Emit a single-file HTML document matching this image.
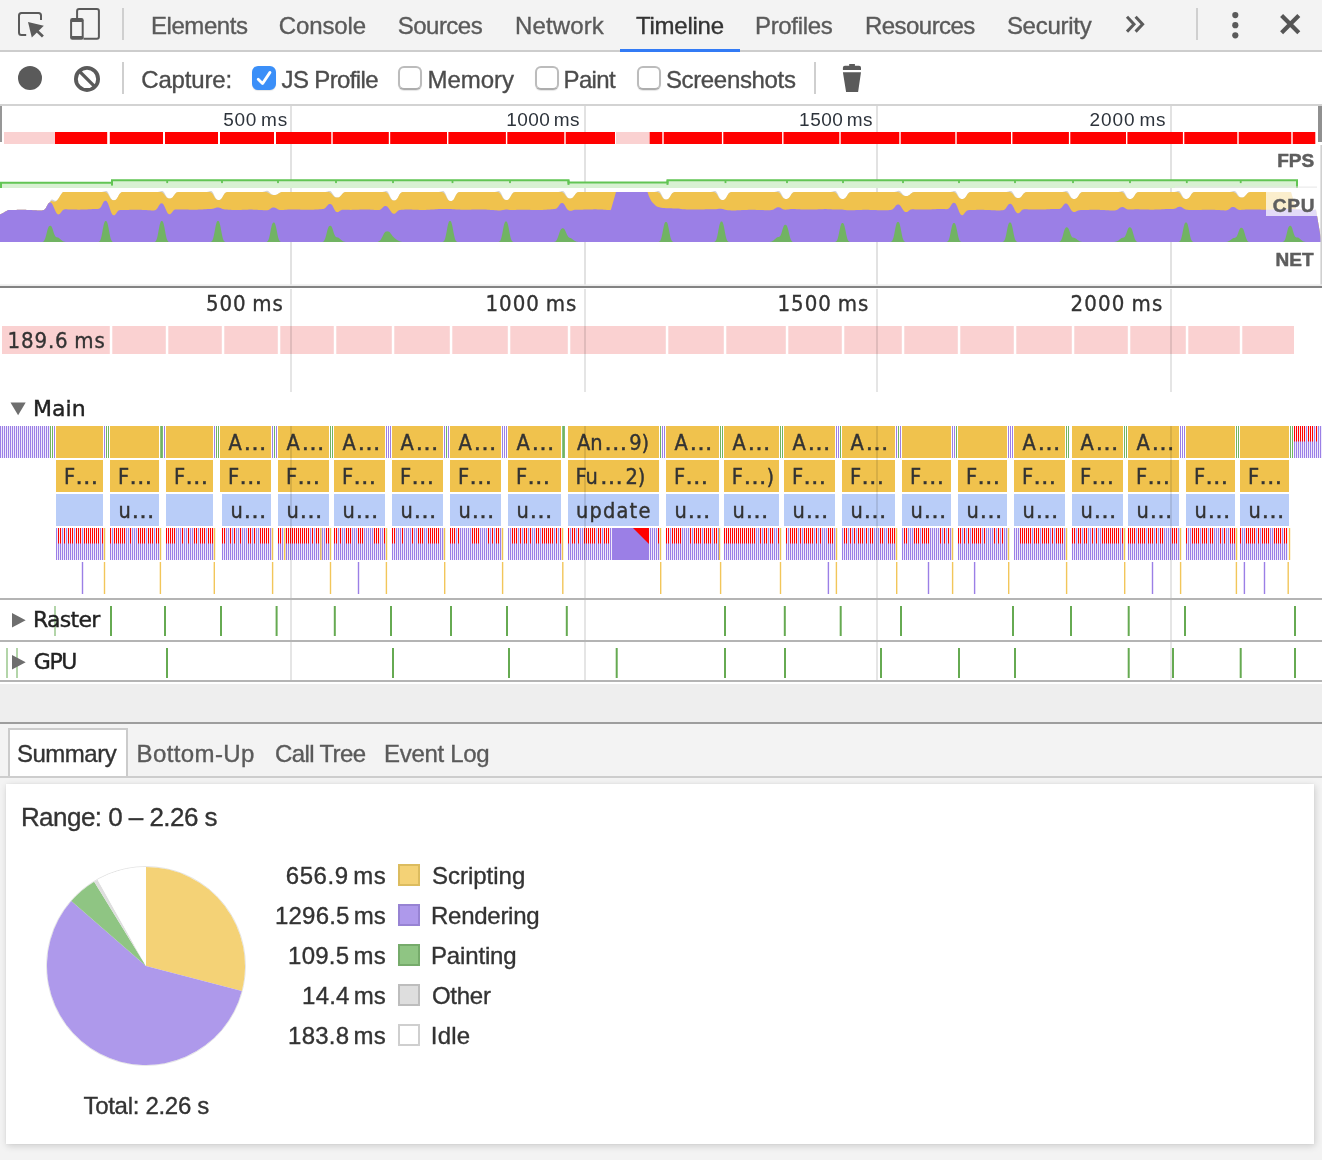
<!DOCTYPE html>
<html lang="en"><head><meta charset="utf-8"><title>Developer Tools - Timeline</title>
<style>
html,body{margin:0;padding:0}
body{width:1322px;height:1160px;overflow:hidden;background:#f3f3f3;position:relative;font-family:"Liberation Sans",sans-serif;color:#333}
.abs{position:absolute}
#tabbar{left:0;top:0;width:1322px;height:50px;background:#f3f3f3;border-bottom:2px solid #cdcdcd}
#toolbar{left:0;top:52px;width:1322px;height:52px;background:#fff;border-bottom:2px solid #d3d3d3}
#charts{left:0;top:106px;width:1322px;height:578px;background:#fff}
#filler{left:0;top:684px;width:1322px;height:38px;background:#eeeeee;border-bottom:2px solid #9d9d9d}
#dtabs{left:0;top:724px;width:1322px;height:52px;background:#f3f3f3;border-bottom:2px solid #cdcdcd}
#sumtab{left:8px;top:728px;width:116px;height:46px;background:#fff;border:2px solid #cbcbcb;border-bottom:none}
#card{left:6px;top:784px;width:1308px;height:360px;background:#fff;box-shadow:1px 2px 7px rgba(0,0,0,.16),0 0 2px rgba(0,0,0,.06)}
.cb{position:absolute;width:24px;height:24px;border:2px solid #bcbcbc;border-bottom-color:#adadad;border-radius:6px;background:#fff;box-sizing:border-box;box-shadow:0 1px 1px rgba(0,0,0,.10)}
.cb.on{background:#3b8ff8;border-color:#3b8ff8}
.vdiv{position:absolute;width:2px;background:#cfcfcf}
.sw{position:absolute;width:22px;height:22px;box-sizing:border-box;border:2px solid}
</style></head><body>
<div id="root" style="position:absolute;left:0;top:0;width:1322px;height:1160px;will-change:transform">

<div id="tabbar" class="abs"></div>
<div class="abs" style="left:620px;top:49px;width:120px;height:3px;background:#337bf5"></div>
<span style="position:absolute;left:151.00px;top:25.68px;line-height:0;white-space:nowrap;font-family:'Liberation Sans', sans-serif;font-size:24px;font-weight:400;letter-spacing:-0.446px;word-spacing:0.00px;-webkit-text-stroke:0.35px #5a5a5a;color:#5a5a5a">Elements</span>
<span style="position:absolute;left:278.75px;top:25.68px;line-height:0;white-space:nowrap;font-family:'Liberation Sans', sans-serif;font-size:24px;font-weight:400;letter-spacing:-0.125px;word-spacing:0.00px;-webkit-text-stroke:0.35px #5a5a5a;color:#5a5a5a">Console</span>
<span style="position:absolute;left:397.68px;top:25.68px;line-height:0;white-space:nowrap;font-family:'Liberation Sans', sans-serif;font-size:24px;font-weight:400;letter-spacing:-0.500px;word-spacing:0.00px;-webkit-text-stroke:0.35px #5a5a5a;color:#5a5a5a">Sources</span>
<span style="position:absolute;left:515.00px;top:25.68px;line-height:0;white-space:nowrap;font-family:'Liberation Sans', sans-serif;font-size:24px;font-weight:400;letter-spacing:0.133px;word-spacing:0.00px;-webkit-text-stroke:0.35px #5a5a5a;color:#5a5a5a">Network</span>
<span style="position:absolute;left:636.00px;top:25.68px;line-height:0;white-space:nowrap;font-family:'Liberation Sans', sans-serif;font-size:24px;font-weight:400;letter-spacing:-0.250px;word-spacing:0.00px;-webkit-text-stroke:0.35px #333;color:#333">Timeline</span>
<span style="position:absolute;left:755.00px;top:25.68px;line-height:0;white-space:nowrap;font-family:'Liberation Sans', sans-serif;font-size:24px;font-weight:400;letter-spacing:-0.332px;word-spacing:0.00px;-webkit-text-stroke:0.35px #5a5a5a;color:#5a5a5a">Profiles</span>
<span style="position:absolute;left:865.00px;top:25.68px;line-height:0;white-space:nowrap;font-family:'Liberation Sans', sans-serif;font-size:24px;font-weight:400;letter-spacing:-0.547px;word-spacing:0.00px;-webkit-text-stroke:0.35px #5a5a5a;color:#5a5a5a">Resources</span>
<span style="position:absolute;left:1006.88px;top:25.68px;line-height:0;white-space:nowrap;font-family:'Liberation Sans', sans-serif;font-size:24px;font-weight:400;letter-spacing:-0.275px;word-spacing:0.00px;-webkit-text-stroke:0.35px #5a5a5a;color:#5a5a5a">Security</span>
<div class="vdiv" style="left:122px;top:8px;height:32px"></div>
<div class="vdiv" style="left:1196px;top:8px;height:32px"></div>
<svg class="abs" style="left:0;top:0" width="1322" height="52" viewBox="0 0 1322 52">
<path d="M26.2 35 H21.5 a2.5 2.5 0 0 1 -2.5 -2.5 V15.5 a2.5 2.5 0 0 1 2.5 -2.5 H38.5 a2.5 2.5 0 0 1 2.5 2.5 V19.9" fill="none" stroke="#5a5a5a" stroke-width="2"/>
<path d="M28 22 L43.8 25.8 L31.8 37.4 Z" fill="#5a5a5a"/>
<path d="M36.6 30.6 L42.9 36.6" stroke="#5a5a5a" stroke-width="2.8" fill="none"/>
<path d="M77.1 18.2 V11.1 a2 2 0 0 1 2 -2 H96.9 a2 2 0 0 1 2 2 V36.7 a2 2 0 0 1 -2 2 H83.5" fill="none" stroke="#5a5a5a" stroke-width="2"/>
<rect x="70.1" y="18.1" width="13.6" height="21.6" rx="2.2" fill="#5a5a5a"/>
<rect x="72.1" y="22" width="9.6" height="14" fill="#f3f3f3"/>
<g fill="none" stroke="#5a5a5a" stroke-width="3" stroke-linejoin="miter">
<path d="M1127 16.8 L1134 24.2 L1127 31.6"/><path d="M1135.6 16.8 L1142.6 24.2 L1135.6 31.6"/>
</g>
<g fill="#5a5a5a"><circle cx="1235.3" cy="15.1" r="3.1"/><circle cx="1235.3" cy="25.2" r="3.1"/><circle cx="1235.3" cy="35.3" r="3.1"/></g>
<path d="M1281.6 15.6 L1298.8 32.8 M1298.8 15.6 L1281.6 32.8" stroke="#555" stroke-width="4.2" fill="none"/>
</svg>
<div id="toolbar" class="abs"></div>
<svg class="abs" style="left:0;top:52px" width="1322" height="52" viewBox="0 52 1322 52">
<circle cx="30" cy="78" r="12" fill="#5a5a5a"/>
<circle cx="87" cy="78.9" r="11.1" fill="none" stroke="#5a5a5a" stroke-width="3.8"/>
<path d="M79 70.9 L95 86.9" stroke="#5a5a5a" stroke-width="3.4"/>
<path d="M842.9 72.2 H861 L858.1 92 H846.1 Z M842.9 69.9 V67.8 a2 2 0 0 1 2 -2 H859 a2 2 0 0 1 2 2 V69.9 Z M849.2 66 V64 H854.9 V66 Z" fill="#5a5a5a"/>
</svg>
<div class="vdiv" style="left:122px;top:62px;height:32px"></div>
<div class="vdiv" style="left:814px;top:62px;height:32px"></div>
<div class="cb on" style="left:252px;top:65.8px"></div>
<svg class="abs" style="left:252px;top:66px" width="24" height="24" viewBox="252 66 24 24"><path d="M258.2 79.3 L262.5 83.6 L270 72.4" fill="none" stroke="#fff" stroke-width="2.8" stroke-linecap="round" stroke-linejoin="round"/></svg>
<div class="cb" style="left:398px;top:65.8px"></div>
<div class="cb" style="left:534.5px;top:65.8px"></div>
<div class="cb" style="left:637px;top:65.8px"></div>
<span style="position:absolute;left:141.25px;top:80.08px;line-height:0;white-space:nowrap;font-family:'Liberation Sans', sans-serif;font-size:24px;font-weight:400;letter-spacing:-0.161px;word-spacing:0.00px;-webkit-text-stroke:0.35px #4c4c4c;color:#4c4c4c">Capture:</span>
<span style="position:absolute;left:281.62px;top:80.08px;line-height:0;white-space:nowrap;font-family:'Liberation Sans', sans-serif;font-size:24px;font-weight:400;letter-spacing:-0.639px;word-spacing:0.00px;-webkit-text-stroke:0.35px #4c4c4c;color:#4c4c4c">JS Profile</span>
<span style="position:absolute;left:427.50px;top:80.08px;line-height:0;white-space:nowrap;font-family:'Liberation Sans', sans-serif;font-size:24px;font-weight:400;letter-spacing:-0.025px;word-spacing:0.00px;-webkit-text-stroke:0.35px #4c4c4c;color:#4c4c4c">Memory</span>
<span style="position:absolute;left:563.50px;top:80.08px;line-height:0;white-space:nowrap;font-family:'Liberation Sans', sans-serif;font-size:24px;font-weight:400;letter-spacing:-0.625px;word-spacing:0.00px;-webkit-text-stroke:0.35px #4c4c4c;color:#4c4c4c">Paint</span>
<span style="position:absolute;left:665.88px;top:80.08px;line-height:0;white-space:nowrap;font-family:'Liberation Sans', sans-serif;font-size:24px;font-weight:400;letter-spacing:-0.338px;word-spacing:0.00px;-webkit-text-stroke:0.35px #4c4c4c;color:#4c4c4c">Screenshots</span>
<div id="charts" class="abs"></div>
<svg class="abs" style="left:0;top:104px" width="1322" height="580" viewBox="0 104 1322 580" shape-rendering="auto">
<defs>
<pattern id="ps" x="0" y="0" width="2" height="8" patternUnits="userSpaceOnUse"><rect x="0" y="0" width="1.05" height="8" fill="#9b7fe6"/><rect x="1.05" y="0" width="0.95" height="8" fill="#eee9fc"/></pattern>
<pattern id="rs" x="0" y="0" width="2" height="8" patternUnits="userSpaceOnUse"><rect x="0" y="0" width="1.05" height="8" fill="#ff0000"/><rect x="1.05" y="0" width="0.95" height="8" fill="#fdeaee"/></pattern>
</defs>
<rect x="290.00" y="106.00" width="2.00" height="180.00" fill="#e2e2e2"/>
<rect x="584.00" y="106.00" width="2.00" height="180.00" fill="#e2e2e2"/>
<rect x="876.00" y="106.00" width="2.00" height="180.00" fill="#e2e2e2"/>
<rect x="1170.00" y="106.00" width="2.00" height="180.00" fill="#e2e2e2"/>
<rect x="4.00" y="132.00" width="51.00" height="12.00" fill="#fad1d1"/>
<rect x="55.00" y="132.00" width="52.20" height="12.00" fill="#ff0000"/>
<rect x="109.80" y="132.00" width="53.20" height="12.00" fill="#ff0000"/>
<rect x="165.00" y="132.00" width="53.00" height="12.00" fill="#ff0000"/>
<rect x="220.00" y="132.00" width="54.00" height="12.00" fill="#ff0000"/>
<rect x="276.00" y="132.00" width="55.30" height="12.00" fill="#ff0000"/>
<rect x="332.70" y="132.00" width="56.10" height="12.00" fill="#ff0000"/>
<rect x="390.20" y="132.00" width="56.80" height="12.00" fill="#ff0000"/>
<rect x="448.40" y="132.00" width="57.50" height="12.00" fill="#ff0000"/>
<rect x="507.30" y="132.00" width="57.00" height="12.00" fill="#ff0000"/>
<rect x="565.70" y="132.00" width="96.60" height="12.00" fill="#ff0000"/>
<rect x="663.70" y="132.00" width="58.20" height="12.00" fill="#ff0000"/>
<rect x="723.30" y="132.00" width="58.80" height="12.00" fill="#ff0000"/>
<rect x="783.50" y="132.00" width="55.80" height="12.00" fill="#ff0000"/>
<rect x="840.70" y="132.00" width="58.60" height="12.00" fill="#ff0000"/>
<rect x="900.70" y="132.00" width="54.60" height="12.00" fill="#ff0000"/>
<rect x="956.70" y="132.00" width="54.30" height="12.00" fill="#ff0000"/>
<rect x="1012.40" y="132.00" width="56.50" height="12.00" fill="#ff0000"/>
<rect x="1070.30" y="132.00" width="55.70" height="12.00" fill="#ff0000"/>
<rect x="1127.40" y="132.00" width="55.50" height="12.00" fill="#ff0000"/>
<rect x="1184.30" y="132.00" width="53.00" height="12.00" fill="#ff0000"/>
<rect x="1238.70" y="132.00" width="52.60" height="12.00" fill="#ff0000"/>
<rect x="1292.70" y="132.00" width="22.60" height="12.00" fill="#ff0000"/>
<rect x="616.00" y="132.00" width="33.70" height="12.00" fill="#fad1d1"/>
<rect x="615.00" y="132.00" width="1.00" height="12.00" fill="#fff"/>
<text x="223.25" y="125.60" font-family="'Liberation Sans', sans-serif" font-size="19" font-weight="400" letter-spacing="0.743" word-spacing="-2.09" fill="#2d333b">500 ms</text>
<text x="506.23" y="125.60" font-family="'Liberation Sans', sans-serif" font-size="19" font-weight="400" letter-spacing="0.402" word-spacing="-2.09" fill="#2d333b">1000 ms</text>
<text x="799.12" y="125.60" font-family="'Liberation Sans', sans-serif" font-size="19" font-weight="400" letter-spacing="0.452" word-spacing="-2.09" fill="#2d333b">1500 ms</text>
<text x="1089.60" y="125.60" font-family="'Liberation Sans', sans-serif" font-size="19" font-weight="400" letter-spacing="0.873" word-spacing="-2.09" fill="#2d333b">2000 ms</text>
<path d="M1 188 L1 182.8 L112 182.8 L112 180.3 L568.5 180.3 L568.5 182.4 L667.5 182.4 L667.5 180.3 L1297 180.3 L1297 188 Z" fill="#d8f1d2" stroke="none"/>
<path d="M1 188 L1 182.8 L112 182.8 L112 180.3 L568.5 180.3 L568.5 182.4 L667.5 182.4 L667.5 180.3 L1297 180.3 L1297 188" fill="none" stroke="#62c554" stroke-width="2" stroke-linejoin="miter"/>
<rect x="166.30" y="180.30" width="1.80" height="2.80" fill="#62c554"/>
<rect x="221.10" y="180.30" width="1.80" height="2.80" fill="#62c554"/>
<rect x="277.10" y="180.30" width="1.80" height="2.80" fill="#62c554"/>
<rect x="335.10" y="180.30" width="1.80" height="2.80" fill="#62c554"/>
<rect x="392.10" y="180.30" width="1.80" height="2.80" fill="#62c554"/>
<rect x="451.60" y="180.30" width="1.80" height="2.80" fill="#62c554"/>
<rect x="509.10" y="180.30" width="1.80" height="2.80" fill="#62c554"/>
<rect x="724.60" y="180.30" width="1.80" height="2.80" fill="#62c554"/>
<rect x="786.10" y="180.30" width="1.80" height="2.80" fill="#62c554"/>
<rect x="842.10" y="180.30" width="1.80" height="2.80" fill="#62c554"/>
<rect x="902.10" y="180.30" width="1.80" height="2.80" fill="#62c554"/>
<rect x="958.10" y="180.30" width="1.80" height="2.80" fill="#62c554"/>
<rect x="1014.10" y="180.30" width="1.80" height="2.80" fill="#62c554"/>
<rect x="1072.10" y="180.30" width="1.80" height="2.80" fill="#62c554"/>
<rect x="1129.10" y="180.30" width="1.80" height="2.80" fill="#62c554"/>
<rect x="1185.90" y="180.30" width="1.80" height="2.80" fill="#62c554"/>
<rect x="1239.80" y="180.30" width="1.80" height="2.80" fill="#62c554"/>
<rect x="111.00" y="180.30" width="2.00" height="5.30" fill="#62c554"/>
<rect x="567.50" y="180.30" width="2.00" height="4.60" fill="#62c554"/>
<rect x="666.50" y="180.30" width="2.00" height="4.60" fill="#62c554"/>
<rect x="1175.00" y="186.60" width="142.00" height="1.00" fill="#e6e6e6"/>
<polygon points="0,242.0 0,214.5 0.5,214.2 1,214.0 1.5,213.7 2,213.5 2.5,213.2 3,212.9 3.5,212.7 4,212.4 4.5,212.1 5,211.8 5.5,211.6 6,211.3 6.5,211.0 7,210.7 7.5,210.4 8,210.1 8.5,210.1 9,210.1 9.5,210.1 10,210.1 10.5,210.1 11,210.1 11.5,210.0 12,210.0 12.5,210.0 13,210.0 13.5,210.0 14,209.9 14.5,209.9 15,209.9 15.5,209.9 16,209.9 16.5,209.9 17,209.8 17.5,209.8 18,209.8 18.5,209.8 19,209.8 19.5,209.8 20,209.8 20.5,209.8 21,209.8 21.5,209.8 22,209.8 22.5,209.8 23,209.8 23.5,209.8 24,209.8 24.5,209.8 25,209.8 25.5,209.8 26,209.8 26.5,209.9 27,209.9 27.5,209.9 28,209.9 28.5,209.9 29,210.0 29.5,210.0 30,210.0 30.5,210.1 31,210.1 31.5,210.1 32,210.1 32.5,210.2 33,210.2 33.5,210.2 34,210.2 34.5,210.3 35,210.3 35.5,210.3 36,210.3 36.5,210.3 37,210.4 37.5,210.4 38,210.4 38.5,210.4 39,210.4 39.5,210.4 40,210.4 40.5,210.4 41,210.4 41.5,210.4 42,210.4 42.5,210.3 43,210.3 43.5,210.1 44,209.9 44.5,209.6 45,209.1 45.5,208.5 46,207.7 46.5,206.8 47,205.8 47.5,204.9 48,204.0 48.5,203.3 49,202.9 49.5,202.6 50,201.5 50.5,200.5 51,199.9 51.5,199.6 52,199.5 52.5,199.5 53,199.7 53.5,200.0 54,200.2 54.5,200.5 55,200.7 55.5,200.8 56,200.7 56.5,200.5 57,200.2 57.5,199.7 58,199.1 58.5,198.4 59,197.6 59.5,196.9 60,196.1 60.5,195.3 61,194.6 61.5,193.8 62,193.2 62.5,192.6 63,192.0 63.5,192.0 64,192.0 64.5,192.0 65,192.0 65.5,192.0 66,192.0 66.5,192.0 67,192.0 67.5,192.0 68,192.0 68.5,192.0 69,192.0 69.5,192.0 70,192.0 70.5,192.0 71,192.0 71.5,192.0 72,192.0 72.5,192.0 73,192.0 73.5,192.0 74,192.0 74.5,192.0 75,192.0 75.5,192.0 76,192.0 76.5,192.0 77,192.0 77.5,192.0 78,192.0 78.5,192.0 79,192.0 79.5,192.0 80,192.0 80.5,192.0 81,192.0 81.5,192.0 82,192.0 82.5,192.0 83,192.0 83.5,192.0 84,192.0 84.5,192.0 85,192.0 85.5,192.0 86,192.0 86.5,192.0 87,192.0 87.5,192.0 88,192.0 88.5,192.0 89,192.0 89.5,192.0 90,192.0 90.5,192.0 91,192.0 91.5,192.0 92,192.0 92.5,192.0 93,192.0 93.5,192.0 94,192.0 94.5,192.0 95,192.0 95.5,192.0 96,192.0 96.5,192.0 97,192.0 97.5,192.0 98,192.0 98.5,192.0 99,192.0 99.5,192.0 100,192.0 100.5,192.0 101,192.0 101.5,191.9 102,191.9 102.5,191.8 103,191.7 103.5,191.6 104,191.5 104.5,191.3 105,191.2 105.5,191.0 106,191.0 106.5,191.1 107,191.3 107.5,191.8 108,192.5 108.5,193.4 109,194.4 109.5,195.6 110,196.6 110.5,197.6 111,198.5 111.5,199.1 112,199.6 112.5,199.9 113,200.0 113.5,200.1 114,200.1 114.5,200.1 115,200.1 115.5,199.9 116,199.5 116.5,199.0 117,198.3 117.5,197.6 118,196.7 118.5,195.7 119,194.8 119.5,194.0 120,193.4 120.5,192.9 121,192.5 121.5,192.3 122,192.1 122.5,192.1 123,192.0 123.5,192.0 124,192.0 124.5,192.0 125,192.0 125.5,192.0 126,192.0 126.5,192.0 127,192.0 127.5,192.0 128,192.0 128.5,192.0 129,192.0 129.5,192.0 130,192.0 130.5,192.0 131,192.0 131.5,192.0 132,192.0 132.5,192.0 133,192.0 133.5,192.0 134,192.0 134.5,192.0 135,192.0 135.5,192.0 136,192.0 136.5,192.0 137,192.0 137.5,192.0 138,192.0 138.5,192.0 139,192.0 139.5,192.0 140,192.0 140.5,192.0 141,192.0 141.5,192.0 142,192.0 142.5,192.0 143,192.0 143.5,192.0 144,192.0 144.5,192.0 145,192.0 145.5,192.0 146,192.0 146.5,192.0 147,192.0 147.5,192.0 148,192.0 148.5,192.0 149,192.0 149.5,192.0 150,192.0 150.5,192.0 151,192.0 151.5,192.0 152,192.0 152.5,192.0 153,192.0 153.5,192.0 154,192.0 154.5,192.0 155,192.0 155.5,192.0 156,192.0 156.5,192.0 157,192.0 157.5,191.9 158,191.9 158.5,191.8 159,191.7 159.5,191.6 160,191.4 160.5,191.3 161,191.1 161.5,191.0 162,190.9 162.5,191.0 163,191.3 163.5,191.7 164,192.3 164.5,193.1 165,194.0 165.5,194.9 166,195.8 166.5,196.6 167,197.2 167.5,197.7 168,198.1 168.5,198.3 169,198.4 169.5,198.4 170,198.5 170.5,198.4 171,198.3 171.5,198.1 172,197.8 172.5,197.4 173,196.8 173.5,196.1 174,195.4 174.5,194.7 175,194.0 175.5,193.4 176,192.9 176.5,192.6 177,192.3 177.5,192.2 178,192.1 178.5,192.0 179,192.0 179.5,192.0 180,192.0 180.5,192.0 181,192.0 181.5,192.0 182,192.0 182.5,192.0 183,192.0 183.5,192.0 184,192.0 184.5,192.0 185,192.0 185.5,192.0 186,192.0 186.5,192.0 187,192.0 187.5,192.0 188,192.0 188.5,192.0 189,192.0 189.5,192.0 190,192.0 190.5,192.0 191,192.0 191.5,192.0 192,192.0 192.5,192.0 193,192.0 193.5,192.0 194,192.0 194.5,192.0 195,192.0 195.5,192.0 196,192.0 196.5,192.0 197,192.0 197.5,192.0 198,192.0 198.5,192.0 199,192.0 199.5,192.0 200,192.0 200.5,192.0 201,192.0 201.5,192.0 202,192.0 202.5,192.0 203,192.0 203.5,192.0 204,192.0 204.5,192.0 205,192.0 205.5,192.0 206,192.0 206.5,191.9 207,191.9 207.5,191.8 208,191.7 208.5,191.6 209,191.4 209.5,191.3 210,191.1 210.5,191.0 211,191.0 211.5,191.1 212,191.5 212.5,192.0 213,192.8 213.5,193.7 214,194.8 214.5,195.9 215,196.9 215.5,197.8 216,198.6 216.5,199.1 217,199.5 217.5,199.7 218,199.9 218.5,199.9 219,199.9 219.5,199.9 220,199.8 220.5,199.6 221,199.2 221.5,198.6 222,197.9 222.5,197.1 223,196.2 223.5,195.3 224,194.5 224.5,193.7 225,193.1 225.5,192.7 226,192.4 226.5,192.2 227,192.1 227.5,192.0 228,192.0 228.5,192.0 229,192.0 229.5,192.0 230,192.0 230.5,192.0 231,192.0 231.5,192.0 232,192.0 232.5,192.0 233,192.0 233.5,192.0 234,192.0 234.5,192.0 235,192.0 235.5,192.0 236,192.0 236.5,192.0 237,192.0 237.5,192.0 238,192.0 238.5,192.0 239,192.0 239.5,192.0 240,192.0 240.5,192.0 241,192.0 241.5,192.0 242,192.0 242.5,192.0 243,192.0 243.5,192.0 244,192.0 244.5,192.0 245,192.0 245.5,192.0 246,192.0 246.5,192.0 247,192.0 247.5,192.0 248,192.0 248.5,192.0 249,192.0 249.5,192.0 250,192.0 250.5,192.0 251,192.0 251.5,192.0 252,192.0 252.5,192.0 253,192.0 253.5,192.0 254,192.0 254.5,192.0 255,192.0 255.5,192.0 256,192.0 256.5,192.0 257,192.0 257.5,192.0 258,192.0 258.5,192.0 259,192.0 259.5,192.0 260,192.0 260.5,192.0 261,192.0 261.5,192.0 262,191.9 262.5,191.9 263,191.8 263.5,191.7 264,191.6 264.5,191.4 265,191.2 265.5,191.0 266,190.9 266.5,190.7 267,190.7 267.5,190.8 268,190.9 268.5,191.3 269,191.7 269.5,192.2 270,192.7 270.5,193.2 271,193.7 271.5,194.1 272,194.4 272.5,194.6 273,194.8 273.5,194.9 274,194.9 274.5,195.0 275,195.0 275.5,194.9 276,194.8 276.5,194.7 277,194.5 277.5,194.2 278,193.9 278.5,193.6 279,193.2 279.5,192.9 280,192.6 280.5,192.4 281,192.3 281.5,192.1 282,192.1 282.5,192.0 283,192.0 283.5,192.0 284,192.0 284.5,192.0 285,192.0 285.5,192.0 286,192.0 286.5,192.0 287,192.0 287.5,192.0 288,192.0 288.5,192.0 289,192.0 289.5,192.0 290,192.0 290.5,192.0 291,192.0 291.5,192.0 292,192.0 292.5,192.0 293,192.0 293.5,192.0 294,192.0 294.5,192.0 295,192.0 295.5,192.0 296,192.0 296.5,192.0 297,192.0 297.5,192.0 298,192.0 298.5,192.0 299,192.0 299.5,192.0 300,192.0 300.5,192.0 301,192.0 301.5,192.0 302,192.0 302.5,192.0 303,192.0 303.5,192.0 304,192.0 304.5,192.0 305,192.0 305.5,192.0 306,192.0 306.5,192.0 307,192.0 307.5,192.0 308,192.0 308.5,192.0 309,192.0 309.5,192.0 310,192.0 310.5,192.0 311,192.0 311.5,192.0 312,192.0 312.5,192.0 313,192.0 313.5,192.0 314,192.0 314.5,192.0 315,192.0 315.5,192.0 316,192.0 316.5,192.0 317,192.0 317.5,192.0 318,192.0 318.5,192.0 319,192.0 319.5,192.0 320,192.0 320.5,192.0 321,192.0 321.5,192.0 322,192.0 322.5,192.0 323,192.0 323.5,192.0 324,192.0 324.5,192.0 325,191.9 325.5,191.9 326,191.8 326.5,191.7 327,191.6 327.5,191.4 328,191.3 328.5,191.1 329,190.9 329.5,190.9 330,190.9 330.5,191.1 331,191.5 331.5,192.0 332,192.7 332.5,193.5 333,194.3 333.5,195.1 334,195.8 334.5,196.3 335,196.8 335.5,197.1 336,197.3 336.5,197.4 337,197.4 337.5,197.5 338,197.4 338.5,197.4 339,197.2 339.5,196.9 340,196.5 340.5,196.1 341,195.5 341.5,194.9 342,194.3 342.5,193.7 343,193.2 343.5,192.8 344,192.5 344.5,192.3 345,192.1 345.5,192.1 346,192.0 346.5,192.0 347,192.0 347.5,192.0 348,192.0 348.5,192.0 349,192.0 349.5,192.0 350,192.0 350.5,192.0 351,192.0 351.5,192.0 352,192.0 352.5,192.0 353,192.0 353.5,192.0 354,192.0 354.5,192.0 355,192.0 355.5,192.0 356,192.0 356.5,192.0 357,192.0 357.5,192.0 358,192.0 358.5,192.0 359,192.0 359.5,192.0 360,192.0 360.5,192.0 361,192.0 361.5,192.0 362,192.0 362.5,192.0 363,192.0 363.5,192.0 364,192.0 364.5,192.0 365,192.0 365.5,192.0 366,192.0 366.5,192.0 367,192.0 367.5,192.0 368,192.0 368.5,192.0 369,192.0 369.5,192.0 370,192.0 370.5,192.0 371,192.0 371.5,192.0 372,192.0 372.5,192.0 373,192.0 373.5,192.0 374,192.0 374.5,192.0 375,192.0 375.5,192.0 376,192.0 376.5,192.0 377,192.0 377.5,192.0 378,192.0 378.5,192.0 379,192.0 379.5,192.0 380,192.0 380.5,192.0 381,192.0 381.5,192.0 382,191.9 382.5,191.9 383,191.8 383.5,191.7 384,191.6 384.5,191.4 385,191.3 385.5,191.1 386,191.0 386.5,191.0 387,191.2 387.5,191.5 388,192.1 388.5,192.9 389,193.9 389.5,195.0 390,196.2 390.5,197.3 391,198.2 391.5,199.0 392,199.6 392.5,200.0 393,200.2 393.5,200.4 394,200.4 394.5,200.4 395,200.4 395.5,200.3 396,200.0 396.5,199.6 397,199.0 397.5,198.3 398,197.4 398.5,196.4 399,195.5 399.5,194.6 400,193.8 400.5,193.2 401,192.7 401.5,192.4 402,192.2 402.5,192.1 403,192.0 403.5,192.0 404,192.0 404.5,192.0 405,192.0 405.5,192.0 406,192.0 406.5,192.0 407,192.0 407.5,192.0 408,192.0 408.5,192.0 409,192.0 409.5,192.0 410,192.0 410.5,192.0 411,192.0 411.5,192.0 412,192.0 412.5,192.0 413,192.0 413.5,192.0 414,192.0 414.5,192.0 415,192.0 415.5,192.0 416,192.0 416.5,192.0 417,192.0 417.5,192.0 418,192.0 418.5,192.0 419,192.0 419.5,192.0 420,192.0 420.5,192.0 421,192.0 421.5,192.0 422,192.0 422.5,192.0 423,192.0 423.5,192.0 424,192.0 424.5,192.0 425,192.0 425.5,192.0 426,192.0 426.5,192.0 427,192.0 427.5,192.0 428,192.0 428.5,192.0 429,192.0 429.5,192.0 430,192.0 430.5,192.0 431,192.0 431.5,192.0 432,192.0 432.5,192.0 433,192.0 433.5,192.0 434,192.0 434.5,192.0 435,192.0 435.5,192.0 436,192.0 436.5,192.0 437,192.0 437.5,192.0 438,192.0 438.5,191.9 439,191.9 439.5,191.8 440,191.7 440.5,191.6 441,191.5 441.5,191.3 442,191.2 442.5,191.1 443,191.0 443.5,191.1 444,191.4 444.5,192.0 445,192.7 445.5,193.7 446,194.8 446.5,196.0 447,197.2 447.5,198.3 448,199.2 448.5,199.9 449,200.3 449.5,200.7 450,200.8 450.5,200.9 451,200.9 451.5,200.9 452,200.8 452.5,200.6 453,200.2 453.5,199.7 454,199.0 454.5,198.1 455,197.1 455.5,196.1 456,195.1 456.5,194.2 457,193.5 457.5,193.0 458,192.6 458.5,192.3 459,192.2 459.5,192.1 460,192.0 460.5,192.0 461,192.0 461.5,192.0 462,192.0 462.5,192.0 463,192.0 463.5,192.0 464,192.0 464.5,192.0 465,192.0 465.5,192.0 466,192.0 466.5,192.0 467,192.0 467.5,192.0 468,192.0 468.5,192.0 469,192.0 469.5,192.0 470,192.0 470.5,192.0 471,192.0 471.5,192.0 472,192.0 472.5,192.0 473,192.0 473.5,192.0 474,192.0 474.5,192.0 475,192.0 475.5,192.0 476,192.0 476.5,192.0 477,192.0 477.5,192.0 478,192.0 478.5,192.0 479,192.0 479.5,192.0 480,192.0 480.5,192.0 481,192.0 481.5,192.0 482,192.0 482.5,192.0 483,192.0 483.5,192.0 484,192.0 484.5,192.0 485,192.0 485.5,192.0 486,192.0 486.5,192.0 487,192.0 487.5,192.0 488,192.0 488.5,192.0 489,192.0 489.5,192.0 490,192.0 490.5,192.0 491,192.0 491.5,192.0 492,192.0 492.5,192.0 493,192.0 493.5,192.0 494,191.9 494.5,191.9 495,191.9 495.5,191.8 496,191.7 496.5,191.5 497,191.4 497.5,191.2 498,191.1 498.5,191.0 499,191.0 499.5,191.2 500,191.7 500.5,192.3 501,193.1 501.5,194.1 502,195.2 502.5,196.3 503,197.3 503.5,198.1 504,198.8 504.5,199.3 505,199.6 505.5,199.8 506,199.9 506.5,199.9 507,199.9 507.5,199.9 508,199.7 508.5,199.4 509,199.0 509.5,198.3 510,197.6 510.5,196.7 511,195.8 511.5,194.9 512,194.1 512.5,193.5 513,192.9 513.5,192.6 514,192.3 514.5,192.2 515,192.1 515.5,192.0 516,192.0 516.5,192.0 517,192.0 517.5,192.0 518,192.0 518.5,192.0 519,192.0 519.5,192.0 520,192.0 520.5,192.0 521,192.0 521.5,192.0 522,192.0 522.5,192.0 523,192.0 523.5,192.0 524,192.0 524.5,192.0 525,192.0 525.5,192.0 526,192.0 526.5,192.0 527,192.0 527.5,192.0 528,192.0 528.5,192.0 529,192.0 529.5,192.0 530,192.0 530.5,192.0 531,192.0 531.5,192.0 532,192.0 532.5,192.0 533,192.0 533.5,192.0 534,192.0 534.5,192.0 535,192.0 535.5,192.0 536,192.0 536.5,192.0 537,192.0 537.5,192.0 538,192.0 538.5,192.0 539,192.0 539.5,192.0 540,192.0 540.5,192.0 541,192.0 541.5,192.0 542,192.0 542.5,192.0 543,192.0 543.5,192.0 544,192.0 544.5,192.0 545,192.0 545.5,192.0 546,192.0 546.5,192.0 547,192.0 547.5,192.0 548,192.0 548.5,192.0 549,192.0 549.5,192.0 550,192.0 550.5,192.0 551,192.0 551.5,192.0 552,192.0 552.5,192.0 553,192.0 553.5,192.0 554,192.0 554.5,192.0 555,192.0 555.5,192.0 556,192.0 556.5,192.0 557,192.0 557.5,192.0 558,191.9 558.5,191.9 559,191.8 559.5,191.7 560,191.6 560.5,191.4 561,191.3 561.5,191.1 562,191.0 562.5,190.9 563,191.0 563.5,191.3 564,191.7 564.5,192.3 565,193.1 565.5,194.0 566,194.9 566.5,195.8 567,196.6 567.5,197.2 568,197.7 568.5,198.1 569,198.3 569.5,198.4 570,198.4 570.5,198.5 571,198.4 571.5,198.3 572,198.1 572.5,197.8 573,197.4 573.5,196.8 574,196.1 574.5,195.4 575,194.7 575.5,194.0 576,193.4 576.5,192.9 577,192.6 577.5,192.3 578,192.2 578.5,192.1 579,192.0 579.5,192.0 580,192.0 580.5,192.0 581,192.0 581.5,192.0 582,192.0 582.5,192.0 583,192.0 583.5,192.0 584,192.0 584.5,192.0 585,192.0 585.5,192.0 586,192.0 586.5,192.0 587,192.0 587.5,192.0 588,192.0 588.5,192.0 589,192.0 589.5,192.0 590,192.0 590.5,192.0 591,192.0 591.5,192.0 592,192.0 592.5,192.0 593,192.0 593.5,192.0 594,192.0 594.5,192.0 595,192.0 595.5,192.0 596,192.0 596.5,192.0 597,192.0 597.5,192.0 598,192.0 598.5,192.0 599,192.0 599.5,192.0 600,192.0 600.5,192.0 601,192.0 601.5,192.0 602,192.0 602.5,192.0 603,192.0 603.5,192.0 604,192.0 604.5,192.0 605,192.0 605.5,192.0 606,192.0 606.5,192.0 607,192.0 607.5,192.0 608,192.0 608.5,192.0 609,192.0 609.5,192.0 610,192.0 610.5,192.0 611,192.0 611.5,192.0 612,192.0 612.5,192.0 613,192.0 613.5,192.0 614,192.0 614.5,192.0 615,192.0 615.5,192.0 616,192.0 616.5,192.0 617,192.0 617.5,192.0 618,192.0 618.5,192.0 619,192.0 619.5,192.0 620,192.0 620.5,192.0 621,192.0 621.5,192.0 622,192.0 622.5,192.0 623,192.0 623.5,192.0 624,192.0 624.5,192.0 625,192.0 625.5,192.0 626,192.0 626.5,192.0 627,192.0 627.5,192.0 628,192.0 628.5,192.0 629,192.0 629.5,192.0 630,192.0 630.5,192.0 631,192.0 631.5,192.0 632,192.0 632.5,192.0 633,192.0 633.5,192.0 634,192.0 634.5,192.0 635,192.0 635.5,192.0 636,192.0 636.5,192.0 637,192.0 637.5,192.0 638,192.0 638.5,192.0 639,192.0 639.5,192.0 640,192.0 640.5,192.0 641,192.0 641.5,192.0 642,192.0 642.5,192.0 643,192.0 643.5,192.0 644,192.0 644.5,192.0 645,192.0 645.5,192.0 646,192.0 646.5,192.0 647,192.0 647.5,192.0 648,192.0 648.5,192.0 649,192.0 649.5,192.0 650,192.0 650.5,192.0 651,192.0 651.5,192.0 652,192.0 652.5,192.0 653,192.0 653.5,192.0 654,191.9 654.5,191.9 655,191.8 655.5,191.7 656,191.6 656.5,191.4 657,191.3 657.5,191.1 658,191.0 658.5,191.0 659,191.1 659.5,191.4 660,191.9 660.5,192.6 661,193.5 661.5,194.5 662,195.6 662.5,196.5 663,197.4 663.5,198.1 664,198.7 664.5,199.0 665,199.3 665.5,199.4 666,199.4 666.5,199.4 667,199.4 667.5,199.3 668,199.1 668.5,198.7 669,198.2 669.5,197.5 670,196.8 670.5,195.9 671,195.1 671.5,194.3 672,193.6 672.5,193.1 673,192.7 673.5,192.4 674,192.2 674.5,192.1 675,192.0 675.5,192.0 676,192.0 676.5,192.0 677,192.0 677.5,192.0 678,192.0 678.5,192.0 679,192.0 679.5,192.0 680,192.0 680.5,192.0 681,192.0 681.5,192.0 682,192.0 682.5,192.0 683,192.0 683.5,192.0 684,192.0 684.5,192.0 685,192.0 685.5,192.0 686,192.0 686.5,192.0 687,192.0 687.5,192.0 688,192.0 688.5,192.0 689,192.0 689.5,192.0 690,192.0 690.5,192.0 691,192.0 691.5,192.0 692,192.0 692.5,192.0 693,192.0 693.5,192.0 694,192.0 694.5,192.0 695,192.0 695.5,192.0 696,192.0 696.5,192.0 697,192.0 697.5,192.0 698,192.0 698.5,192.0 699,192.0 699.5,192.0 700,192.0 700.5,192.0 701,192.0 701.5,192.0 702,192.0 702.5,192.0 703,192.0 703.5,192.0 704,192.0 704.5,192.0 705,192.0 705.5,192.0 706,192.0 706.5,192.0 707,192.0 707.5,192.0 708,192.0 708.5,192.0 709,192.0 709.5,192.0 710,192.0 710.5,191.9 711,191.9 711.5,191.8 712,191.7 712.5,191.6 713,191.4 713.5,191.3 714,191.1 714.5,191.0 715,191.0 715.5,191.1 716,191.5 716.5,192.0 717,192.8 717.5,193.7 718,194.8 718.5,195.9 719,196.9 719.5,197.8 720,198.6 720.5,199.1 721,199.5 721.5,199.7 722,199.9 722.5,199.9 723,199.9 723.5,199.9 724,199.8 724.5,199.6 725,199.2 725.5,198.6 726,197.9 726.5,197.1 727,196.2 727.5,195.3 728,194.5 728.5,193.7 729,193.1 729.5,192.7 730,192.4 730.5,192.2 731,192.1 731.5,192.0 732,192.0 732.5,192.0 733,192.0 733.5,192.0 734,192.0 734.5,192.0 735,192.0 735.5,192.0 736,192.0 736.5,192.0 737,192.0 737.5,192.0 738,192.0 738.5,192.0 739,192.0 739.5,192.0 740,192.0 740.5,192.0 741,192.0 741.5,192.0 742,192.0 742.5,192.0 743,192.0 743.5,192.0 744,192.0 744.5,192.0 745,192.0 745.5,192.0 746,192.0 746.5,192.0 747,192.0 747.5,192.0 748,192.0 748.5,192.0 749,192.0 749.5,192.0 750,192.0 750.5,192.0 751,192.0 751.5,192.0 752,192.0 752.5,192.0 753,192.0 753.5,192.0 754,192.0 754.5,192.0 755,192.0 755.5,192.0 756,192.0 756.5,192.0 757,192.0 757.5,192.0 758,192.0 758.5,192.0 759,192.0 759.5,192.0 760,192.0 760.5,192.0 761,192.0 761.5,192.0 762,192.0 762.5,192.0 763,192.0 763.5,192.0 764,192.0 764.5,192.0 765,192.0 765.5,192.0 766,192.0 766.5,192.0 767,192.0 767.5,192.0 768,192.0 768.5,192.0 769,192.0 769.5,192.0 770,192.0 770.5,192.0 771,192.0 771.5,192.0 772,192.0 772.5,192.0 773,192.0 773.5,192.0 774,191.9 774.5,191.9 775,191.8 775.5,191.7 776,191.6 776.5,191.4 777,191.3 777.5,191.1 778,191.0 778.5,190.9 779,191.1 779.5,191.3 780,191.8 780.5,192.5 781,193.3 781.5,194.3 782,195.2 782.5,196.2 783,197.0 783.5,197.7 784,198.2 784.5,198.5 785,198.8 785.5,198.9 786,198.9 786.5,198.9 787,198.9 787.5,198.8 788,198.6 788.5,198.3 789,197.8 789.5,197.2 790,196.4 790.5,195.7 791,194.9 791.5,194.1 792,193.5 792.5,193.0 793,192.6 793.5,192.3 794,192.2 794.5,192.1 795,192.0 795.5,192.0 796,192.0 796.5,192.0 797,192.0 797.5,192.0 798,192.0 798.5,192.0 799,192.0 799.5,192.0 800,192.0 800.5,192.0 801,192.0 801.5,192.0 802,192.0 802.5,192.0 803,192.0 803.5,192.0 804,192.0 804.5,192.0 805,192.0 805.5,192.0 806,192.0 806.5,192.0 807,192.0 807.5,192.0 808,192.0 808.5,192.0 809,192.0 809.5,192.0 810,192.0 810.5,192.0 811,192.0 811.5,192.0 812,192.0 812.5,192.0 813,192.0 813.5,192.0 814,192.0 814.5,192.0 815,192.0 815.5,192.0 816,192.0 816.5,192.0 817,192.0 817.5,192.0 818,192.0 818.5,192.0 819,192.0 819.5,192.0 820,192.0 820.5,192.0 821,192.0 821.5,192.0 822,192.0 822.5,192.0 823,192.0 823.5,192.0 824,192.0 824.5,192.0 825,192.0 825.5,192.0 826,192.0 826.5,192.0 827,192.0 827.5,192.0 828,192.0 828.5,192.0 829,192.0 829.5,192.0 830,192.0 830.5,191.9 831,191.9 831.5,191.8 832,191.7 832.5,191.6 833,191.4 833.5,191.3 834,191.1 834.5,191.0 835,190.9 835.5,191.1 836,191.3 836.5,191.8 837,192.5 837.5,193.3 838,194.3 838.5,195.2 839,196.2 839.5,197.0 840,197.7 840.5,198.2 841,198.5 841.5,198.8 842,198.9 842.5,198.9 843,198.9 843.5,198.9 844,198.8 844.5,198.6 845,198.3 845.5,197.8 846,197.2 846.5,196.4 847,195.7 847.5,194.9 848,194.1 848.5,193.5 849,193.0 849.5,192.6 850,192.3 850.5,192.2 851,192.1 851.5,192.0 852,192.0 852.5,192.0 853,192.0 853.5,192.0 854,192.0 854.5,192.0 855,192.0 855.5,192.0 856,192.0 856.5,192.0 857,192.0 857.5,192.0 858,192.0 858.5,192.0 859,192.0 859.5,192.0 860,192.0 860.5,192.0 861,192.0 861.5,192.0 862,192.0 862.5,192.0 863,192.0 863.5,192.0 864,192.0 864.5,192.0 865,192.0 865.5,192.0 866,192.0 866.5,192.0 867,192.0 867.5,192.0 868,192.0 868.5,192.0 869,192.0 869.5,192.0 870,192.0 870.5,192.0 871,192.0 871.5,192.0 872,192.0 872.5,192.0 873,192.0 873.5,192.0 874,192.0 874.5,192.0 875,192.0 875.5,192.0 876,192.0 876.5,192.0 877,192.0 877.5,192.0 878,192.0 878.5,192.0 879,192.0 879.5,192.0 880,192.0 880.5,192.0 881,192.0 881.5,192.0 882,192.0 882.5,192.0 883,192.0 883.5,192.0 884,192.0 884.5,192.0 885,192.0 885.5,192.0 886,192.0 886.5,192.0 887,192.0 887.5,192.0 888,192.0 888.5,192.0 889,192.0 889.5,192.0 890,192.0 890.5,192.0 891,192.0 891.5,192.0 892,192.0 892.5,192.0 893,192.0 893.5,192.0 894,191.9 894.5,191.9 895,191.8 895.5,191.7 896,191.6 896.5,191.4 897,191.2 897.5,191.1 898,190.9 898.5,190.8 899,190.8 899.5,190.9 900,191.2 900.5,191.6 901,192.1 901.5,192.7 902,193.3 902.5,194.0 903,194.5 903.5,195.0 904,195.4 904.5,195.6 905,195.8 905.5,195.9 906,195.9 906.5,196.0 907,195.9 907.5,195.9 908,195.8 908.5,195.6 909,195.3 909.5,194.9 910,194.5 910.5,194.1 911,193.6 911.5,193.2 912,192.9 912.5,192.6 913,192.3 913.5,192.2 914,192.1 914.5,192.1 915,192.0 915.5,192.0 916,192.0 916.5,192.0 917,192.0 917.5,192.0 918,192.0 918.5,192.0 919,192.0 919.5,192.0 920,192.0 920.5,192.0 921,192.0 921.5,192.0 922,192.0 922.5,192.0 923,192.0 923.5,192.0 924,192.0 924.5,192.0 925,192.0 925.5,192.0 926,192.0 926.5,192.0 927,192.0 927.5,192.0 928,192.0 928.5,192.0 929,192.0 929.5,192.0 930,192.0 930.5,192.0 931,192.0 931.5,192.0 932,192.0 932.5,192.0 933,192.0 933.5,192.0 934,192.0 934.5,192.0 935,192.0 935.5,192.0 936,192.0 936.5,192.0 937,192.0 937.5,192.0 938,192.0 938.5,192.0 939,192.0 939.5,192.0 940,192.0 940.5,192.0 941,192.0 941.5,192.0 942,192.0 942.5,192.0 943,192.0 943.5,192.0 944,192.0 944.5,192.0 945,192.0 945.5,192.0 946,192.0 946.5,192.0 947,192.0 947.5,192.0 948,192.0 948.5,192.0 949,192.0 949.5,192.0 950,191.9 950.5,191.9 951,191.8 951.5,191.7 952,191.6 952.5,191.4 953,191.3 953.5,191.1 954,191.0 954.5,190.9 955,191.1 955.5,191.3 956,191.8 956.5,192.5 957,193.3 957.5,194.3 958,195.2 958.5,196.2 959,197.0 959.5,197.7 960,198.2 960.5,198.5 961,198.8 961.5,198.9 962,198.9 962.5,198.9 963,198.9 963.5,198.8 964,198.6 964.5,198.3 965,197.8 965.5,197.2 966,196.4 966.5,195.7 967,194.9 967.5,194.1 968,193.5 968.5,193.0 969,192.6 969.5,192.3 970,192.2 970.5,192.1 971,192.0 971.5,192.0 972,192.0 972.5,192.0 973,192.0 973.5,192.0 974,192.0 974.5,192.0 975,192.0 975.5,192.0 976,192.0 976.5,192.0 977,192.0 977.5,192.0 978,192.0 978.5,192.0 979,192.0 979.5,192.0 980,192.0 980.5,192.0 981,192.0 981.5,192.0 982,192.0 982.5,192.0 983,192.0 983.5,192.0 984,192.0 984.5,192.0 985,192.0 985.5,192.0 986,192.0 986.5,192.0 987,192.0 987.5,192.0 988,192.0 988.5,192.0 989,192.0 989.5,192.0 990,192.0 990.5,192.0 991,192.0 991.5,192.0 992,192.0 992.5,192.0 993,192.0 993.5,192.0 994,192.0 994.5,192.0 995,192.0 995.5,192.0 996,192.0 996.5,192.0 997,192.0 997.5,192.0 998,192.0 998.5,192.0 999,192.0 999.5,192.0 1000,192.0 1000.5,192.0 1001,192.0 1001.5,192.0 1002,192.0 1002.5,192.0 1003,192.0 1003.5,192.0 1004,192.0 1004.5,192.0 1005,192.0 1005.5,192.0 1006,191.9 1006.5,191.9 1007,191.8 1007.5,191.7 1008,191.6 1008.5,191.4 1009,191.3 1009.5,191.1 1010,191.0 1010.5,190.9 1011,191.0 1011.5,191.2 1012,191.6 1012.5,192.2 1013,192.9 1013.5,193.7 1014,194.6 1014.5,195.4 1015,196.2 1015.5,196.8 1016,197.2 1016.5,197.6 1017,197.8 1017.5,197.9 1018,197.9 1018.5,198.0 1019,197.9 1019.5,197.8 1020,197.7 1020.5,197.4 1021,197.0 1021.5,196.4 1022,195.8 1022.5,195.1 1023,194.5 1023.5,193.8 1024,193.3 1024.5,192.9 1025,192.5 1025.5,192.3 1026,192.2 1026.5,192.1 1027,192.0 1027.5,192.0 1028,192.0 1028.5,192.0 1029,192.0 1029.5,192.0 1030,192.0 1030.5,192.0 1031,192.0 1031.5,192.0 1032,192.0 1032.5,192.0 1033,192.0 1033.5,192.0 1034,192.0 1034.5,192.0 1035,192.0 1035.5,192.0 1036,192.0 1036.5,192.0 1037,192.0 1037.5,192.0 1038,192.0 1038.5,192.0 1039,192.0 1039.5,192.0 1040,192.0 1040.5,192.0 1041,192.0 1041.5,192.0 1042,192.0 1042.5,192.0 1043,192.0 1043.5,192.0 1044,192.0 1044.5,192.0 1045,192.0 1045.5,192.0 1046,192.0 1046.5,192.0 1047,192.0 1047.5,192.0 1048,192.0 1048.5,192.0 1049,192.0 1049.5,192.0 1050,192.0 1050.5,192.0 1051,192.0 1051.5,192.0 1052,192.0 1052.5,192.0 1053,192.0 1053.5,192.0 1054,192.0 1054.5,192.0 1055,192.0 1055.5,192.0 1056,192.0 1056.5,192.0 1057,192.0 1057.5,192.0 1058,192.0 1058.5,192.0 1059,192.0 1059.5,192.0 1060,192.0 1060.5,192.0 1061,192.0 1061.5,192.0 1062,191.9 1062.5,191.9 1063,191.8 1063.5,191.7 1064,191.6 1064.5,191.4 1065,191.3 1065.5,191.1 1066,191.0 1066.5,190.9 1067,191.1 1067.5,191.3 1068,191.8 1068.5,192.5 1069,193.3 1069.5,194.3 1070,195.2 1070.5,196.2 1071,197.0 1071.5,197.7 1072,198.2 1072.5,198.5 1073,198.8 1073.5,198.9 1074,198.9 1074.5,198.9 1075,198.9 1075.5,198.8 1076,198.6 1076.5,198.3 1077,197.8 1077.5,197.2 1078,196.4 1078.5,195.7 1079,194.9 1079.5,194.1 1080,193.5 1080.5,193.0 1081,192.6 1081.5,192.3 1082,192.2 1082.5,192.1 1083,192.0 1083.5,192.0 1084,192.0 1084.5,192.0 1085,192.0 1085.5,192.0 1086,192.0 1086.5,192.0 1087,192.0 1087.5,192.0 1088,192.0 1088.5,192.0 1089,192.0 1089.5,192.0 1090,192.0 1090.5,192.0 1091,192.0 1091.5,192.0 1092,192.0 1092.5,192.0 1093,192.0 1093.5,192.0 1094,192.0 1094.5,192.0 1095,192.0 1095.5,192.0 1096,192.0 1096.5,192.0 1097,192.0 1097.5,192.0 1098,192.0 1098.5,192.0 1099,192.0 1099.5,192.0 1100,192.0 1100.5,192.0 1101,192.0 1101.5,192.0 1102,192.0 1102.5,192.0 1103,192.0 1103.5,192.0 1104,192.0 1104.5,192.0 1105,192.0 1105.5,192.0 1106,192.0 1106.5,192.0 1107,192.0 1107.5,192.0 1108,192.0 1108.5,192.0 1109,192.0 1109.5,192.0 1110,192.0 1110.5,192.0 1111,192.0 1111.5,192.0 1112,192.0 1112.5,192.0 1113,192.0 1113.5,192.0 1114,192.0 1114.5,192.0 1115,192.0 1115.5,192.0 1116,192.0 1116.5,192.0 1117,192.0 1117.5,192.0 1118,191.9 1118.5,191.9 1119,191.8 1119.5,191.7 1120,191.6 1120.5,191.4 1121,191.3 1121.5,191.1 1122,191.0 1122.5,190.9 1123,191.1 1123.5,191.3 1124,191.8 1124.5,192.5 1125,193.3 1125.5,194.3 1126,195.2 1126.5,196.2 1127,197.0 1127.5,197.7 1128,198.2 1128.5,198.5 1129,198.8 1129.5,198.9 1130,198.9 1130.5,198.9 1131,198.9 1131.5,198.8 1132,198.6 1132.5,198.3 1133,197.8 1133.5,197.2 1134,196.4 1134.5,195.7 1135,194.9 1135.5,194.1 1136,193.5 1136.5,193.0 1137,192.6 1137.5,192.3 1138,192.2 1138.5,192.1 1139,192.0 1139.5,192.0 1140,192.0 1140.5,192.0 1141,192.0 1141.5,192.0 1142,192.0 1142.5,192.0 1143,192.0 1143.5,192.0 1144,192.0 1144.5,192.0 1145,192.0 1145.5,192.0 1146,192.0 1146.5,192.0 1147,192.0 1147.5,192.0 1148,192.0 1148.5,192.0 1149,192.0 1149.5,192.0 1150,192.0 1150.5,192.0 1151,192.0 1151.5,192.0 1152,192.0 1152.5,192.0 1153,192.0 1153.5,192.0 1154,192.0 1154.5,192.0 1155,192.0 1155.5,192.0 1156,192.0 1156.5,192.0 1157,192.0 1157.5,192.0 1158,192.0 1158.5,192.0 1159,192.0 1159.5,192.0 1160,192.0 1160.5,192.0 1161,192.0 1161.5,192.0 1162,192.0 1162.5,192.0 1163,192.0 1163.5,192.0 1164,192.0 1164.5,192.0 1165,192.0 1165.5,192.0 1166,192.0 1166.5,192.0 1167,192.0 1167.5,192.0 1168,192.0 1168.5,192.0 1169,192.0 1169.5,192.0 1170,192.0 1170.5,192.0 1171,192.0 1171.5,192.0 1172,192.0 1172.5,192.0 1173,192.0 1173.5,192.0 1174,191.9 1174.5,191.9 1175,191.8 1175.5,191.7 1176,191.6 1176.5,191.4 1177,191.3 1177.5,191.1 1178,191.0 1178.5,190.9 1179,191.1 1179.5,191.3 1180,191.8 1180.5,192.5 1181,193.3 1181.5,194.3 1182,195.2 1182.5,196.2 1183,197.0 1183.5,197.7 1184,198.2 1184.5,198.5 1185,198.8 1185.5,198.9 1186,198.9 1186.5,198.9 1187,198.9 1187.5,198.8 1188,198.6 1188.5,198.3 1189,197.8 1189.5,197.2 1190,196.4 1190.5,195.7 1191,194.9 1191.5,194.1 1192,193.5 1192.5,193.0 1193,192.6 1193.5,192.3 1194,192.2 1194.5,192.1 1195,192.0 1195.5,192.0 1196,192.0 1196.5,192.0 1197,192.0 1197.5,192.0 1198,192.0 1198.5,192.0 1199,192.0 1199.5,192.0 1200,192.0 1200.5,192.0 1201,192.0 1201.5,192.0 1202,192.0 1202.5,192.0 1203,192.0 1203.5,192.0 1204,192.0 1204.5,192.0 1205,192.0 1205.5,192.0 1206,192.0 1206.5,192.0 1207,192.0 1207.5,192.0 1208,192.0 1208.5,192.0 1209,192.0 1209.5,192.0 1210,192.0 1210.5,192.0 1211,192.0 1211.5,192.0 1212,192.0 1212.5,192.0 1213,192.0 1213.5,192.0 1214,192.0 1214.5,192.0 1215,192.0 1215.5,192.0 1216,192.0 1216.5,192.0 1217,192.0 1217.5,192.0 1218,192.0 1218.5,192.0 1219,192.0 1219.5,192.0 1220,192.0 1220.5,192.0 1221,192.0 1221.5,192.0 1222,192.0 1222.5,192.0 1223,192.0 1223.5,192.0 1224,192.0 1224.5,192.0 1225,192.0 1225.5,192.0 1226,192.0 1226.5,192.0 1227,192.0 1227.5,192.0 1228,192.0 1228.5,192.0 1229,192.0 1229.5,191.9 1230,191.9 1230.5,191.8 1231,191.7 1231.5,191.6 1232,191.5 1232.5,191.3 1233,191.1 1233.5,191.0 1234,190.9 1234.5,190.9 1235,191.1 1235.5,191.4 1236,191.9 1236.5,192.6 1237,193.3 1237.5,194.1 1238,194.9 1238.5,195.6 1239,196.2 1239.5,196.7 1240,197.0 1240.5,197.2 1241,197.4 1241.5,197.4 1242,197.4 1242.5,197.4 1243,197.4 1243.5,197.2 1244,197.0 1244.5,196.6 1245,196.2 1245.5,195.6 1246,195.0 1246.5,194.4 1247,193.8 1247.5,193.3 1248,192.9 1248.5,192.5 1249,192.3 1249.5,192.2 1250,192.1 1250.5,192.0 1251,192.0 1251.5,192.0 1252,192.0 1252.5,192.0 1253,192.0 1253.5,192.0 1254,192.0 1254.5,192.0 1255,192.0 1255.5,192.0 1256,192.0 1256.5,192.0 1257,192.0 1257.5,192.0 1258,192.0 1258.5,192.0 1259,192.0 1259.5,192.0 1260,192.0 1260.5,192.0 1261,192.0 1261.5,192.0 1262,192.0 1262.5,192.0 1263,192.0 1263.5,192.0 1264,192.0 1264.5,192.0 1265,192.0 1265.5,192.0 1266,192.0 1266.5,192.0 1267,192.0 1267.5,192.0 1268,192.0 1268.5,192.0 1269,192.0 1269.5,192.0 1270,192.0 1270.5,192.0 1271,192.0 1271.5,192.0 1272,192.0 1272.5,192.0 1273,192.0 1273.5,192.0 1274,192.0 1274.5,192.0 1275,192.0 1275.5,192.0 1276,192.0 1276.5,192.0 1277,192.0 1277.5,192.0 1278,192.0 1278.5,192.0 1279,192.0 1279.5,192.0 1280,192.0 1280.5,192.0 1281,192.0 1281.5,192.0 1282,192.0 1282.5,192.0 1283,192.0 1283.5,192.0 1284,192.0 1284.5,192.0 1285,192.0 1285.5,192.0 1286,192.0 1286.5,192.0 1287,192.0 1287.5,192.0 1288,192.0 1288.5,192.0 1289,192.0 1289.5,192.0 1290,192.0 1290.5,192.0 1291,192.0 1291.5,193.7 1292,195.4 1292.5,197.1 1293,198.8 1293.5,200.6 1294,202.3 1294.5,204.0 1295,205.8 1295.5,207.5 1296,209.3 1296.5,209.3 1297,209.4 1297.5,209.4 1298,209.4 1298.5,209.5 1299,209.5 1299.5,209.5 1300,209.6 1300.5,209.6 1301,209.6 1301.5,209.7 1302,209.7 1302.5,209.7 1303,209.8 1303.5,209.8 1304,209.8 1304.5,209.8 1305,209.8 1305.5,209.9 1306,209.9 1306.5,209.9 1307,209.9 1307.5,209.9 1308,209.9 1308.5,209.9 1309,209.9 1309.5,209.9 1310,209.9 1310.5,209.9 1311,209.9 1311.5,209.9 1312,209.9 1312.5,209.9 1313,209.9 1313.5,209.9 1314,209.8 1314.5,209.8 1315,209.8 1315.5,209.8 1316,209.8 1316.5,212.7 1317,215.6 1317.5,218.5 1318,221.5 1318.5,224.4 1319,227.3 1319.5,230.2 1320,233.2 1320.5,236.1 1321,239.1 1321.5,242.0 1322,242.0 1322,242.0" fill="#d4d4d4"/>
<polygon points="0,242.0 0,214.5 0.5,214.2 1,214.0 1.5,213.7 2,213.5 2.5,213.2 3,212.9 3.5,212.7 4,212.4 4.5,212.1 5,211.8 5.5,211.6 6,211.3 6.5,211.0 7,210.7 7.5,210.4 8,210.1 8.5,210.1 9,210.1 9.5,210.1 10,210.1 10.5,210.1 11,210.1 11.5,210.0 12,210.0 12.5,210.0 13,210.0 13.5,210.0 14,209.9 14.5,209.9 15,209.9 15.5,209.9 16,209.9 16.5,209.9 17,209.8 17.5,209.8 18,209.8 18.5,209.8 19,209.8 19.5,209.8 20,209.8 20.5,209.8 21,209.8 21.5,209.8 22,209.8 22.5,209.8 23,209.8 23.5,209.8 24,209.8 24.5,209.8 25,209.8 25.5,209.8 26,209.8 26.5,209.9 27,209.9 27.5,209.9 28,209.9 28.5,209.9 29,210.0 29.5,210.0 30,210.0 30.5,210.1 31,210.1 31.5,210.1 32,210.1 32.5,210.2 33,210.2 33.5,210.2 34,210.2 34.5,210.3 35,210.3 35.5,210.3 36,210.3 36.5,210.3 37,210.4 37.5,210.4 38,210.4 38.5,210.4 39,210.4 39.5,210.4 40,210.4 40.5,210.4 41,210.4 41.5,210.4 42,210.4 42.5,210.3 43,210.3 43.5,210.1 44,209.9 44.5,209.6 45,209.1 45.5,208.5 46,207.7 46.5,206.8 47,205.8 47.5,204.9 48,204.0 48.5,203.3 49,202.9 49.5,202.6 50,202.5 50.5,201.7 51,201.3 51.5,201.1 52,201.1 52.5,201.2 53,201.4 53.5,201.5 54,201.6 54.5,201.7 55,201.7 55.5,201.6 56,201.3 56.5,201.0 57,200.5 57.5,199.9 58,199.2 58.5,198.5 59,197.7 59.5,196.9 60,196.1 60.5,195.3 61,194.6 61.5,193.8 62,193.2 62.5,192.6 63,192.0 63.5,192.0 64,192.0 64.5,192.0 65,192.0 65.5,192.0 66,192.0 66.5,192.0 67,192.0 67.5,192.0 68,192.0 68.5,192.0 69,192.0 69.5,192.0 70,192.0 70.5,192.0 71,192.0 71.5,192.0 72,192.0 72.5,192.0 73,192.0 73.5,192.0 74,192.0 74.5,192.0 75,192.0 75.5,192.0 76,192.0 76.5,192.0 77,192.0 77.5,192.0 78,192.0 78.5,192.0 79,192.0 79.5,192.0 80,192.0 80.5,192.0 81,192.0 81.5,192.0 82,192.0 82.5,192.0 83,192.0 83.5,192.0 84,192.0 84.5,192.0 85,192.0 85.5,192.0 86,192.0 86.5,192.0 87,192.0 87.5,192.0 88,192.0 88.5,192.0 89,192.0 89.5,192.0 90,192.0 90.5,192.0 91,192.0 91.5,192.0 92,192.0 92.5,192.0 93,192.0 93.5,192.0 94,192.0 94.5,192.0 95,192.0 95.5,192.0 96,192.0 96.5,192.0 97,192.0 97.5,192.0 98,192.0 98.5,192.0 99,192.0 99.5,192.0 100,192.0 100.5,192.0 101,192.0 101.5,192.0 102,192.0 102.5,192.0 103,192.0 103.5,192.0 104,192.0 104.5,192.0 105,192.1 105.5,192.2 106,192.3 106.5,192.6 107,193.0 107.5,193.5 108,194.2 108.5,195.0 109,195.9 109.5,196.8 110,197.7 110.5,198.5 111,199.1 111.5,199.6 112,199.9 112.5,200.1 113,200.2 113.5,200.2 114,200.2 114.5,200.2 115,200.1 115.5,199.9 116,199.5 116.5,199.0 117,198.4 117.5,197.6 118,196.7 118.5,195.7 119,194.8 119.5,194.0 120,193.4 120.5,192.9 121,192.5 121.5,192.3 122,192.1 122.5,192.1 123,192.0 123.5,192.0 124,192.0 124.5,192.0 125,192.0 125.5,192.0 126,192.0 126.5,192.0 127,192.0 127.5,192.0 128,192.0 128.5,192.0 129,192.0 129.5,192.0 130,192.0 130.5,192.0 131,192.0 131.5,192.0 132,192.0 132.5,192.0 133,192.0 133.5,192.0 134,192.0 134.5,192.0 135,192.0 135.5,192.0 136,192.0 136.5,192.0 137,192.0 137.5,192.0 138,192.0 138.5,192.0 139,192.0 139.5,192.0 140,192.0 140.5,192.0 141,192.0 141.5,192.0 142,192.0 142.5,192.0 143,192.0 143.5,192.0 144,192.0 144.5,192.0 145,192.0 145.5,192.0 146,192.0 146.5,192.0 147,192.0 147.5,192.0 148,192.0 148.5,192.0 149,192.0 149.5,192.0 150,192.0 150.5,192.0 151,192.0 151.5,192.0 152,192.0 152.5,192.0 153,192.0 153.5,192.0 154,192.0 154.5,192.0 155,192.0 155.5,192.0 156,192.0 156.5,192.0 157,192.0 157.5,192.0 158,192.0 158.5,192.0 159,192.0 159.5,192.0 160,192.0 160.5,192.0 161,192.1 161.5,192.2 162,192.3 162.5,192.6 163,192.9 163.5,193.4 164,194.0 164.5,194.7 165,195.4 165.5,196.1 166,196.8 166.5,197.4 167,197.8 167.5,198.1 168,198.3 168.5,198.5 169,198.5 169.5,198.5 170,198.5 170.5,198.5 171,198.3 171.5,198.1 172,197.8 172.5,197.4 173,196.8 173.5,196.1 174,195.4 174.5,194.7 175,194.0 175.5,193.4 176,192.9 176.5,192.6 177,192.3 177.5,192.2 178,192.1 178.5,192.0 179,192.0 179.5,192.0 180,192.0 180.5,192.0 181,192.0 181.5,192.0 182,192.0 182.5,192.0 183,192.0 183.5,192.0 184,192.0 184.5,192.0 185,192.0 185.5,192.0 186,192.0 186.5,192.0 187,192.0 187.5,192.0 188,192.0 188.5,192.0 189,192.0 189.5,192.0 190,192.0 190.5,192.0 191,192.0 191.5,192.0 192,192.0 192.5,192.0 193,192.0 193.5,192.0 194,192.0 194.5,192.0 195,192.0 195.5,192.0 196,192.0 196.5,192.0 197,192.0 197.5,192.0 198,192.0 198.5,192.0 199,192.0 199.5,192.0 200,192.0 200.5,192.0 201,192.0 201.5,192.0 202,192.0 202.5,192.0 203,192.0 203.5,192.0 204,192.0 204.5,192.0 205,192.0 205.5,192.0 206,192.0 206.5,192.0 207,192.0 207.5,192.0 208,192.0 208.5,192.0 209,192.0 209.5,192.0 210,192.1 210.5,192.2 211,192.4 211.5,192.7 212,193.1 212.5,193.7 213,194.5 213.5,195.3 214,196.2 214.5,197.1 215,197.9 215.5,198.6 216,199.2 216.5,199.6 217,199.8 217.5,199.9 218,200.0 218.5,200.0 219,200.0 219.5,199.9 220,199.8 220.5,199.6 221,199.2 221.5,198.6 222,197.9 222.5,197.1 223,196.2 223.5,195.3 224,194.5 224.5,193.7 225,193.1 225.5,192.7 226,192.4 226.5,192.2 227,192.1 227.5,192.0 228,192.0 228.5,192.0 229,192.0 229.5,192.0 230,192.0 230.5,192.0 231,192.0 231.5,192.0 232,192.0 232.5,192.0 233,192.0 233.5,192.0 234,192.0 234.5,192.0 235,192.0 235.5,192.0 236,192.0 236.5,192.0 237,192.0 237.5,192.0 238,192.0 238.5,192.0 239,192.0 239.5,192.0 240,192.0 240.5,192.0 241,192.0 241.5,192.0 242,192.0 242.5,192.0 243,192.0 243.5,192.0 244,192.0 244.5,192.0 245,192.0 245.5,192.0 246,192.0 246.5,192.0 247,192.0 247.5,192.0 248,192.0 248.5,192.0 249,192.0 249.5,192.0 250,192.0 250.5,192.0 251,192.0 251.5,192.0 252,192.0 252.5,192.0 253,192.0 253.5,192.0 254,192.0 254.5,192.0 255,192.0 255.5,192.0 256,192.0 256.5,192.0 257,192.0 257.5,192.0 258,192.0 258.5,192.0 259,192.0 259.5,192.0 260,192.0 260.5,192.0 261,192.0 261.5,192.0 262,192.0 262.5,192.0 263,192.0 263.5,192.0 264,192.0 264.5,192.0 265,192.0 265.5,192.0 266,192.1 266.5,192.1 267,192.3 267.5,192.4 268,192.6 268.5,192.9 269,193.2 269.5,193.6 270,193.9 270.5,194.2 271,194.5 271.5,194.7 272,194.8 272.5,194.9 273,195.0 273.5,195.0 274,195.0 274.5,195.0 275,195.0 275.5,194.9 276,194.8 276.5,194.7 277,194.5 277.5,194.2 278,193.9 278.5,193.6 279,193.2 279.5,192.9 280,192.6 280.5,192.4 281,192.3 281.5,192.1 282,192.1 282.5,192.0 283,192.0 283.5,192.0 284,192.0 284.5,192.0 285,192.0 285.5,192.0 286,192.0 286.5,192.0 287,192.0 287.5,192.0 288,192.0 288.5,192.0 289,192.0 289.5,192.0 290,192.0 290.5,192.0 291,192.0 291.5,192.0 292,192.0 292.5,192.0 293,192.0 293.5,192.0 294,192.0 294.5,192.0 295,192.0 295.5,192.0 296,192.0 296.5,192.0 297,192.0 297.5,192.0 298,192.0 298.5,192.0 299,192.0 299.5,192.0 300,192.0 300.5,192.0 301,192.0 301.5,192.0 302,192.0 302.5,192.0 303,192.0 303.5,192.0 304,192.0 304.5,192.0 305,192.0 305.5,192.0 306,192.0 306.5,192.0 307,192.0 307.5,192.0 308,192.0 308.5,192.0 309,192.0 309.5,192.0 310,192.0 310.5,192.0 311,192.0 311.5,192.0 312,192.0 312.5,192.0 313,192.0 313.5,192.0 314,192.0 314.5,192.0 315,192.0 315.5,192.0 316,192.0 316.5,192.0 317,192.0 317.5,192.0 318,192.0 318.5,192.0 319,192.0 319.5,192.0 320,192.0 320.5,192.0 321,192.0 321.5,192.0 322,192.0 322.5,192.0 323,192.0 323.5,192.0 324,192.0 324.5,192.0 325,192.0 325.5,192.0 326,192.0 326.5,192.0 327,192.0 327.5,192.0 328,192.0 328.5,192.1 329,192.1 329.5,192.3 330,192.5 330.5,192.8 331,193.2 331.5,193.7 332,194.3 332.5,194.9 333,195.5 333.5,196.1 334,196.5 334.5,196.9 335,197.2 335.5,197.4 336,197.5 336.5,197.5 337,197.5 337.5,197.5 338,197.5 338.5,197.4 339,197.2 339.5,196.9 340,196.5 340.5,196.1 341,195.5 341.5,194.9 342,194.3 342.5,193.7 343,193.2 343.5,192.8 344,192.5 344.5,192.3 345,192.1 345.5,192.1 346,192.0 346.5,192.0 347,192.0 347.5,192.0 348,192.0 348.5,192.0 349,192.0 349.5,192.0 350,192.0 350.5,192.0 351,192.0 351.5,192.0 352,192.0 352.5,192.0 353,192.0 353.5,192.0 354,192.0 354.5,192.0 355,192.0 355.5,192.0 356,192.0 356.5,192.0 357,192.0 357.5,192.0 358,192.0 358.5,192.0 359,192.0 359.5,192.0 360,192.0 360.5,192.0 361,192.0 361.5,192.0 362,192.0 362.5,192.0 363,192.0 363.5,192.0 364,192.0 364.5,192.0 365,192.0 365.5,192.0 366,192.0 366.5,192.0 367,192.0 367.5,192.0 368,192.0 368.5,192.0 369,192.0 369.5,192.0 370,192.0 370.5,192.0 371,192.0 371.5,192.0 372,192.0 372.5,192.0 373,192.0 373.5,192.0 374,192.0 374.5,192.0 375,192.0 375.5,192.0 376,192.0 376.5,192.0 377,192.0 377.5,192.0 378,192.0 378.5,192.0 379,192.0 379.5,192.0 380,192.0 380.5,192.0 381,192.0 381.5,192.0 382,192.0 382.5,192.0 383,192.0 383.5,192.0 384,192.0 384.5,192.0 385,192.0 385.5,192.1 386,192.2 386.5,192.4 387,192.7 387.5,193.2 388,193.8 388.5,194.6 389,195.5 389.5,196.4 390,197.4 390.5,198.3 391,199.0 391.5,199.6 392,200.0 392.5,200.3 393,200.4 393.5,200.5 394,200.5 394.5,200.5 395,200.4 395.5,200.3 396,200.0 396.5,199.6 397,199.0 397.5,198.3 398,197.4 398.5,196.4 399,195.5 399.5,194.6 400,193.8 400.5,193.2 401,192.7 401.5,192.4 402,192.2 402.5,192.1 403,192.0 403.5,192.0 404,192.0 404.5,192.0 405,192.0 405.5,192.0 406,192.0 406.5,192.0 407,192.0 407.5,192.0 408,192.0 408.5,192.0 409,192.0 409.5,192.0 410,192.0 410.5,192.0 411,192.0 411.5,192.0 412,192.0 412.5,192.0 413,192.0 413.5,192.0 414,192.0 414.5,192.0 415,192.0 415.5,192.0 416,192.0 416.5,192.0 417,192.0 417.5,192.0 418,192.0 418.5,192.0 419,192.0 419.5,192.0 420,192.0 420.5,192.0 421,192.0 421.5,192.0 422,192.0 422.5,192.0 423,192.0 423.5,192.0 424,192.0 424.5,192.0 425,192.0 425.5,192.0 426,192.0 426.5,192.0 427,192.0 427.5,192.0 428,192.0 428.5,192.0 429,192.0 429.5,192.0 430,192.0 430.5,192.0 431,192.0 431.5,192.0 432,192.0 432.5,192.0 433,192.0 433.5,192.0 434,192.0 434.5,192.0 435,192.0 435.5,192.0 436,192.0 436.5,192.0 437,192.0 437.5,192.0 438,192.0 438.5,192.0 439,192.0 439.5,192.0 440,192.0 440.5,192.0 441,192.0 441.5,192.0 442,192.1 442.5,192.2 443,192.4 443.5,192.6 444,193.1 444.5,193.7 445,194.4 445.5,195.3 446,196.3 446.5,197.3 447,198.3 447.5,199.1 448,199.8 448.5,200.3 449,200.7 449.5,200.9 450,201.0 450.5,201.0 451,201.0 451.5,201.0 452,200.9 452.5,200.6 453,200.3 453.5,199.7 454,199.0 454.5,198.1 455,197.1 455.5,196.1 456,195.1 456.5,194.2 457,193.5 457.5,193.0 458,192.6 458.5,192.3 459,192.2 459.5,192.1 460,192.0 460.5,192.0 461,192.0 461.5,192.0 462,192.0 462.5,192.0 463,192.0 463.5,192.0 464,192.0 464.5,192.0 465,192.0 465.5,192.0 466,192.0 466.5,192.0 467,192.0 467.5,192.0 468,192.0 468.5,192.0 469,192.0 469.5,192.0 470,192.0 470.5,192.0 471,192.0 471.5,192.0 472,192.0 472.5,192.0 473,192.0 473.5,192.0 474,192.0 474.5,192.0 475,192.0 475.5,192.0 476,192.0 476.5,192.0 477,192.0 477.5,192.0 478,192.0 478.5,192.0 479,192.0 479.5,192.0 480,192.0 480.5,192.0 481,192.0 481.5,192.0 482,192.0 482.5,192.0 483,192.0 483.5,192.0 484,192.0 484.5,192.0 485,192.0 485.5,192.0 486,192.0 486.5,192.0 487,192.0 487.5,192.0 488,192.0 488.5,192.0 489,192.0 489.5,192.0 490,192.0 490.5,192.0 491,192.0 491.5,192.0 492,192.0 492.5,192.0 493,192.0 493.5,192.0 494,192.0 494.5,192.0 495,192.0 495.5,192.0 496,192.0 496.5,192.0 497,192.0 497.5,192.1 498,192.1 498.5,192.3 499,192.5 499.5,192.9 500,193.4 500.5,194.0 501,194.8 501.5,195.6 502,196.5 502.5,197.4 503,198.2 503.5,198.8 504,199.3 504.5,199.7 505,199.9 505.5,200.0 506,200.0 506.5,200.0 507,200.0 507.5,199.9 508,199.7 508.5,199.4 509,199.0 509.5,198.3 510,197.6 510.5,196.7 511,195.8 511.5,194.9 512,194.1 512.5,193.5 513,192.9 513.5,192.6 514,192.3 514.5,192.2 515,192.1 515.5,192.0 516,192.0 516.5,192.0 517,192.0 517.5,192.0 518,192.0 518.5,192.0 519,192.0 519.5,192.0 520,192.0 520.5,192.0 521,192.0 521.5,192.0 522,192.0 522.5,192.0 523,192.0 523.5,192.0 524,192.0 524.5,192.0 525,192.0 525.5,192.0 526,192.0 526.5,192.0 527,192.0 527.5,192.0 528,192.0 528.5,192.0 529,192.0 529.5,192.0 530,192.0 530.5,192.0 531,192.0 531.5,192.0 532,192.0 532.5,192.0 533,192.0 533.5,192.0 534,192.0 534.5,192.0 535,192.0 535.5,192.0 536,192.0 536.5,192.0 537,192.0 537.5,192.0 538,192.0 538.5,192.0 539,192.0 539.5,192.0 540,192.0 540.5,192.0 541,192.0 541.5,192.0 542,192.0 542.5,192.0 543,192.0 543.5,192.0 544,192.0 544.5,192.0 545,192.0 545.5,192.0 546,192.0 546.5,192.0 547,192.0 547.5,192.0 548,192.0 548.5,192.0 549,192.0 549.5,192.0 550,192.0 550.5,192.0 551,192.0 551.5,192.0 552,192.0 552.5,192.0 553,192.0 553.5,192.0 554,192.0 554.5,192.0 555,192.0 555.5,192.0 556,192.0 556.5,192.0 557,192.0 557.5,192.0 558,192.0 558.5,192.0 559,192.0 559.5,192.0 560,192.0 560.5,192.0 561,192.0 561.5,192.1 562,192.2 562.5,192.3 563,192.6 563.5,192.9 564,193.4 564.5,194.0 565,194.7 565.5,195.4 566,196.1 566.5,196.8 567,197.4 567.5,197.8 568,198.1 568.5,198.3 569,198.5 569.5,198.5 570,198.5 570.5,198.5 571,198.5 571.5,198.3 572,198.1 572.5,197.8 573,197.4 573.5,196.8 574,196.1 574.5,195.4 575,194.7 575.5,194.0 576,193.4 576.5,192.9 577,192.6 577.5,192.3 578,192.2 578.5,192.1 579,192.0 579.5,192.0 580,192.0 580.5,192.0 581,192.0 581.5,192.0 582,192.0 582.5,192.0 583,192.0 583.5,192.0 584,192.0 584.5,192.0 585,192.0 585.5,192.0 586,192.0 586.5,192.0 587,192.0 587.5,192.0 588,192.0 588.5,192.0 589,192.0 589.5,192.0 590,192.0 590.5,192.0 591,192.0 591.5,192.0 592,192.0 592.5,192.0 593,192.0 593.5,192.0 594,192.0 594.5,192.0 595,192.0 595.5,192.0 596,192.0 596.5,192.0 597,192.0 597.5,192.0 598,192.0 598.5,192.0 599,192.0 599.5,192.0 600,192.0 600.5,192.0 601,192.0 601.5,192.0 602,192.0 602.5,192.0 603,192.0 603.5,192.0 604,192.0 604.5,192.0 605,192.0 605.5,192.0 606,192.0 606.5,192.0 607,192.0 607.5,192.0 608,192.0 608.5,192.0 609,192.0 609.5,192.0 610,192.0 610.5,192.0 611,192.0 611.5,192.0 612,192.0 612.5,192.0 613,192.0 613.5,192.0 614,192.0 614.5,192.0 615,192.0 615.5,192.0 616,192.0 616.5,192.0 617,192.0 617.5,192.0 618,192.0 618.5,192.0 619,192.0 619.5,192.0 620,192.0 620.5,192.0 621,192.0 621.5,192.0 622,192.0 622.5,192.0 623,192.0 623.5,192.0 624,192.0 624.5,192.0 625,192.0 625.5,192.0 626,192.0 626.5,192.0 627,192.0 627.5,192.0 628,192.0 628.5,192.0 629,192.0 629.5,192.0 630,192.0 630.5,192.0 631,192.0 631.5,192.0 632,192.0 632.5,192.0 633,192.0 633.5,192.0 634,192.0 634.5,192.0 635,192.0 635.5,192.0 636,192.0 636.5,192.0 637,192.0 637.5,192.0 638,192.0 638.5,192.0 639,192.0 639.5,192.0 640,192.0 640.5,192.0 641,192.0 641.5,192.0 642,192.0 642.5,192.0 643,192.0 643.5,192.0 644,192.0 644.5,192.0 645,192.0 645.5,192.0 646,192.0 646.5,192.0 647,192.0 647.5,192.0 648,192.0 648.5,192.0 649,192.0 649.5,192.0 650,192.0 650.5,192.0 651,192.0 651.5,192.0 652,192.0 652.5,192.0 653,192.0 653.5,192.0 654,192.0 654.5,192.0 655,192.0 655.5,192.0 656,192.0 656.5,192.0 657,192.0 657.5,192.1 658,192.2 658.5,192.4 659,192.7 659.5,193.1 660,193.6 660.5,194.3 661,195.1 661.5,195.9 662,196.8 662.5,197.5 663,198.2 663.5,198.7 664,199.1 664.5,199.3 665,199.4 665.5,199.5 666,199.5 666.5,199.5 667,199.4 667.5,199.3 668,199.1 668.5,198.7 669,198.2 669.5,197.5 670,196.8 670.5,195.9 671,195.1 671.5,194.3 672,193.6 672.5,193.1 673,192.7 673.5,192.4 674,192.2 674.5,192.1 675,192.0 675.5,192.0 676,192.0 676.5,192.0 677,192.0 677.5,192.0 678,192.0 678.5,192.0 679,192.0 679.5,192.0 680,192.0 680.5,192.0 681,192.0 681.5,192.0 682,192.0 682.5,192.0 683,192.0 683.5,192.0 684,192.0 684.5,192.0 685,192.0 685.5,192.0 686,192.0 686.5,192.0 687,192.0 687.5,192.0 688,192.0 688.5,192.0 689,192.0 689.5,192.0 690,192.0 690.5,192.0 691,192.0 691.5,192.0 692,192.0 692.5,192.0 693,192.0 693.5,192.0 694,192.0 694.5,192.0 695,192.0 695.5,192.0 696,192.0 696.5,192.0 697,192.0 697.5,192.0 698,192.0 698.5,192.0 699,192.0 699.5,192.0 700,192.0 700.5,192.0 701,192.0 701.5,192.0 702,192.0 702.5,192.0 703,192.0 703.5,192.0 704,192.0 704.5,192.0 705,192.0 705.5,192.0 706,192.0 706.5,192.0 707,192.0 707.5,192.0 708,192.0 708.5,192.0 709,192.0 709.5,192.0 710,192.0 710.5,192.0 711,192.0 711.5,192.0 712,192.0 712.5,192.0 713,192.0 713.5,192.0 714,192.1 714.5,192.2 715,192.4 715.5,192.7 716,193.1 716.5,193.7 717,194.5 717.5,195.3 718,196.2 718.5,197.1 719,197.9 719.5,198.6 720,199.2 720.5,199.6 721,199.8 721.5,199.9 722,200.0 722.5,200.0 723,200.0 723.5,199.9 724,199.8 724.5,199.6 725,199.2 725.5,198.6 726,197.9 726.5,197.1 727,196.2 727.5,195.3 728,194.5 728.5,193.7 729,193.1 729.5,192.7 730,192.4 730.5,192.2 731,192.1 731.5,192.0 732,192.0 732.5,192.0 733,192.0 733.5,192.0 734,192.0 734.5,192.0 735,192.0 735.5,192.0 736,192.0 736.5,192.0 737,192.0 737.5,192.0 738,192.0 738.5,192.0 739,192.0 739.5,192.0 740,192.0 740.5,192.0 741,192.0 741.5,192.0 742,192.0 742.5,192.0 743,192.0 743.5,192.0 744,192.0 744.5,192.0 745,192.0 745.5,192.0 746,192.0 746.5,192.0 747,192.0 747.5,192.0 748,192.0 748.5,192.0 749,192.0 749.5,192.0 750,192.0 750.5,192.0 751,192.0 751.5,192.0 752,192.0 752.5,192.0 753,192.0 753.5,192.0 754,192.0 754.5,192.0 755,192.0 755.5,192.0 756,192.0 756.5,192.0 757,192.0 757.5,192.0 758,192.0 758.5,192.0 759,192.0 759.5,192.0 760,192.0 760.5,192.0 761,192.0 761.5,192.0 762,192.0 762.5,192.0 763,192.0 763.5,192.0 764,192.0 764.5,192.0 765,192.0 765.5,192.0 766,192.0 766.5,192.0 767,192.0 767.5,192.0 768,192.0 768.5,192.0 769,192.0 769.5,192.0 770,192.0 770.5,192.0 771,192.0 771.5,192.0 772,192.0 772.5,192.0 773,192.0 773.5,192.0 774,192.0 774.5,192.0 775,192.0 775.5,192.0 776,192.0 776.5,192.0 777,192.0 777.5,192.1 778,192.2 778.5,192.3 779,192.6 779.5,193.0 780,193.5 780.5,194.1 781,194.9 781.5,195.7 782,196.4 782.5,197.2 783,197.8 783.5,198.3 784,198.6 784.5,198.8 785,199.0 785.5,199.0 786,199.0 786.5,199.0 787,199.0 787.5,198.8 788,198.6 788.5,198.3 789,197.8 789.5,197.2 790,196.4 790.5,195.7 791,194.9 791.5,194.1 792,193.5 792.5,193.0 793,192.6 793.5,192.3 794,192.2 794.5,192.1 795,192.0 795.5,192.0 796,192.0 796.5,192.0 797,192.0 797.5,192.0 798,192.0 798.5,192.0 799,192.0 799.5,192.0 800,192.0 800.5,192.0 801,192.0 801.5,192.0 802,192.0 802.5,192.0 803,192.0 803.5,192.0 804,192.0 804.5,192.0 805,192.0 805.5,192.0 806,192.0 806.5,192.0 807,192.0 807.5,192.0 808,192.0 808.5,192.0 809,192.0 809.5,192.0 810,192.0 810.5,192.0 811,192.0 811.5,192.0 812,192.0 812.5,192.0 813,192.0 813.5,192.0 814,192.0 814.5,192.0 815,192.0 815.5,192.0 816,192.0 816.5,192.0 817,192.0 817.5,192.0 818,192.0 818.5,192.0 819,192.0 819.5,192.0 820,192.0 820.5,192.0 821,192.0 821.5,192.0 822,192.0 822.5,192.0 823,192.0 823.5,192.0 824,192.0 824.5,192.0 825,192.0 825.5,192.0 826,192.0 826.5,192.0 827,192.0 827.5,192.0 828,192.0 828.5,192.0 829,192.0 829.5,192.0 830,192.0 830.5,192.0 831,192.0 831.5,192.0 832,192.0 832.5,192.0 833,192.0 833.5,192.0 834,192.1 834.5,192.2 835,192.3 835.5,192.6 836,193.0 836.5,193.5 837,194.1 837.5,194.9 838,195.7 838.5,196.4 839,197.2 839.5,197.8 840,198.3 840.5,198.6 841,198.8 841.5,199.0 842,199.0 842.5,199.0 843,199.0 843.5,199.0 844,198.8 844.5,198.6 845,198.3 845.5,197.8 846,197.2 846.5,196.4 847,195.7 847.5,194.9 848,194.1 848.5,193.5 849,193.0 849.5,192.6 850,192.3 850.5,192.2 851,192.1 851.5,192.0 852,192.0 852.5,192.0 853,192.0 853.5,192.0 854,192.0 854.5,192.0 855,192.0 855.5,192.0 856,192.0 856.5,192.0 857,192.0 857.5,192.0 858,192.0 858.5,192.0 859,192.0 859.5,192.0 860,192.0 860.5,192.0 861,192.0 861.5,192.0 862,192.0 862.5,192.0 863,192.0 863.5,192.0 864,192.0 864.5,192.0 865,192.0 865.5,192.0 866,192.0 866.5,192.0 867,192.0 867.5,192.0 868,192.0 868.5,192.0 869,192.0 869.5,192.0 870,192.0 870.5,192.0 871,192.0 871.5,192.0 872,192.0 872.5,192.0 873,192.0 873.5,192.0 874,192.0 874.5,192.0 875,192.0 875.5,192.0 876,192.0 876.5,192.0 877,192.0 877.5,192.0 878,192.0 878.5,192.0 879,192.0 879.5,192.0 880,192.0 880.5,192.0 881,192.0 881.5,192.0 882,192.0 882.5,192.0 883,192.0 883.5,192.0 884,192.0 884.5,192.0 885,192.0 885.5,192.0 886,192.0 886.5,192.0 887,192.0 887.5,192.0 888,192.0 888.5,192.0 889,192.0 889.5,192.0 890,192.0 890.5,192.0 891,192.0 891.5,192.0 892,192.0 892.5,192.0 893,192.0 893.5,192.0 894,192.0 894.5,192.0 895,192.0 895.5,192.0 896,192.0 896.5,192.0 897,192.0 897.5,192.1 898,192.1 898.5,192.2 899,192.3 899.5,192.6 900,192.9 900.5,193.2 901,193.6 901.5,194.1 902,194.5 902.5,194.9 903,195.3 903.5,195.6 904,195.8 904.5,195.9 905,196.0 905.5,196.0 906,196.0 906.5,196.0 907,196.0 907.5,195.9 908,195.8 908.5,195.6 909,195.3 909.5,194.9 910,194.5 910.5,194.1 911,193.6 911.5,193.2 912,192.9 912.5,192.6 913,192.3 913.5,192.2 914,192.1 914.5,192.1 915,192.0 915.5,192.0 916,192.0 916.5,192.0 917,192.0 917.5,192.0 918,192.0 918.5,192.0 919,192.0 919.5,192.0 920,192.0 920.5,192.0 921,192.0 921.5,192.0 922,192.0 922.5,192.0 923,192.0 923.5,192.0 924,192.0 924.5,192.0 925,192.0 925.5,192.0 926,192.0 926.5,192.0 927,192.0 927.5,192.0 928,192.0 928.5,192.0 929,192.0 929.5,192.0 930,192.0 930.5,192.0 931,192.0 931.5,192.0 932,192.0 932.5,192.0 933,192.0 933.5,192.0 934,192.0 934.5,192.0 935,192.0 935.5,192.0 936,192.0 936.5,192.0 937,192.0 937.5,192.0 938,192.0 938.5,192.0 939,192.0 939.5,192.0 940,192.0 940.5,192.0 941,192.0 941.5,192.0 942,192.0 942.5,192.0 943,192.0 943.5,192.0 944,192.0 944.5,192.0 945,192.0 945.5,192.0 946,192.0 946.5,192.0 947,192.0 947.5,192.0 948,192.0 948.5,192.0 949,192.0 949.5,192.0 950,192.0 950.5,192.0 951,192.0 951.5,192.0 952,192.0 952.5,192.0 953,192.0 953.5,192.1 954,192.2 954.5,192.3 955,192.6 955.5,193.0 956,193.5 956.5,194.1 957,194.9 957.5,195.7 958,196.4 958.5,197.2 959,197.8 959.5,198.3 960,198.6 960.5,198.8 961,199.0 961.5,199.0 962,199.0 962.5,199.0 963,199.0 963.5,198.8 964,198.6 964.5,198.3 965,197.8 965.5,197.2 966,196.4 966.5,195.7 967,194.9 967.5,194.1 968,193.5 968.5,193.0 969,192.6 969.5,192.3 970,192.2 970.5,192.1 971,192.0 971.5,192.0 972,192.0 972.5,192.0 973,192.0 973.5,192.0 974,192.0 974.5,192.0 975,192.0 975.5,192.0 976,192.0 976.5,192.0 977,192.0 977.5,192.0 978,192.0 978.5,192.0 979,192.0 979.5,192.0 980,192.0 980.5,192.0 981,192.0 981.5,192.0 982,192.0 982.5,192.0 983,192.0 983.5,192.0 984,192.0 984.5,192.0 985,192.0 985.5,192.0 986,192.0 986.5,192.0 987,192.0 987.5,192.0 988,192.0 988.5,192.0 989,192.0 989.5,192.0 990,192.0 990.5,192.0 991,192.0 991.5,192.0 992,192.0 992.5,192.0 993,192.0 993.5,192.0 994,192.0 994.5,192.0 995,192.0 995.5,192.0 996,192.0 996.5,192.0 997,192.0 997.5,192.0 998,192.0 998.5,192.0 999,192.0 999.5,192.0 1000,192.0 1000.5,192.0 1001,192.0 1001.5,192.0 1002,192.0 1002.5,192.0 1003,192.0 1003.5,192.0 1004,192.0 1004.5,192.0 1005,192.0 1005.5,192.0 1006,192.0 1006.5,192.0 1007,192.0 1007.5,192.0 1008,192.0 1008.5,192.0 1009,192.0 1009.5,192.1 1010,192.2 1010.5,192.3 1011,192.5 1011.5,192.9 1012,193.3 1012.5,193.8 1013,194.5 1013.5,195.1 1014,195.8 1014.5,196.4 1015,197.0 1015.5,197.4 1016,197.7 1016.5,197.9 1017,198.0 1017.5,198.0 1018,198.0 1018.5,198.0 1019,198.0 1019.5,197.9 1020,197.7 1020.5,197.4 1021,197.0 1021.5,196.4 1022,195.8 1022.5,195.1 1023,194.5 1023.5,193.8 1024,193.3 1024.5,192.9 1025,192.5 1025.5,192.3 1026,192.2 1026.5,192.1 1027,192.0 1027.5,192.0 1028,192.0 1028.5,192.0 1029,192.0 1029.5,192.0 1030,192.0 1030.5,192.0 1031,192.0 1031.5,192.0 1032,192.0 1032.5,192.0 1033,192.0 1033.5,192.0 1034,192.0 1034.5,192.0 1035,192.0 1035.5,192.0 1036,192.0 1036.5,192.0 1037,192.0 1037.5,192.0 1038,192.0 1038.5,192.0 1039,192.0 1039.5,192.0 1040,192.0 1040.5,192.0 1041,192.0 1041.5,192.0 1042,192.0 1042.5,192.0 1043,192.0 1043.5,192.0 1044,192.0 1044.5,192.0 1045,192.0 1045.5,192.0 1046,192.0 1046.5,192.0 1047,192.0 1047.5,192.0 1048,192.0 1048.5,192.0 1049,192.0 1049.5,192.0 1050,192.0 1050.5,192.0 1051,192.0 1051.5,192.0 1052,192.0 1052.5,192.0 1053,192.0 1053.5,192.0 1054,192.0 1054.5,192.0 1055,192.0 1055.5,192.0 1056,192.0 1056.5,192.0 1057,192.0 1057.5,192.0 1058,192.0 1058.5,192.0 1059,192.0 1059.5,192.0 1060,192.0 1060.5,192.0 1061,192.0 1061.5,192.0 1062,192.0 1062.5,192.0 1063,192.0 1063.5,192.0 1064,192.0 1064.5,192.0 1065,192.0 1065.5,192.1 1066,192.2 1066.5,192.3 1067,192.6 1067.5,193.0 1068,193.5 1068.5,194.1 1069,194.9 1069.5,195.7 1070,196.4 1070.5,197.2 1071,197.8 1071.5,198.3 1072,198.6 1072.5,198.8 1073,199.0 1073.5,199.0 1074,199.0 1074.5,199.0 1075,199.0 1075.5,198.8 1076,198.6 1076.5,198.3 1077,197.8 1077.5,197.2 1078,196.4 1078.5,195.7 1079,194.9 1079.5,194.1 1080,193.5 1080.5,193.0 1081,192.6 1081.5,192.3 1082,192.2 1082.5,192.1 1083,192.0 1083.5,192.0 1084,192.0 1084.5,192.0 1085,192.0 1085.5,192.0 1086,192.0 1086.5,192.0 1087,192.0 1087.5,192.0 1088,192.0 1088.5,192.0 1089,192.0 1089.5,192.0 1090,192.0 1090.5,192.0 1091,192.0 1091.5,192.0 1092,192.0 1092.5,192.0 1093,192.0 1093.5,192.0 1094,192.0 1094.5,192.0 1095,192.0 1095.5,192.0 1096,192.0 1096.5,192.0 1097,192.0 1097.5,192.0 1098,192.0 1098.5,192.0 1099,192.0 1099.5,192.0 1100,192.0 1100.5,192.0 1101,192.0 1101.5,192.0 1102,192.0 1102.5,192.0 1103,192.0 1103.5,192.0 1104,192.0 1104.5,192.0 1105,192.0 1105.5,192.0 1106,192.0 1106.5,192.0 1107,192.0 1107.5,192.0 1108,192.0 1108.5,192.0 1109,192.0 1109.5,192.0 1110,192.0 1110.5,192.0 1111,192.0 1111.5,192.0 1112,192.0 1112.5,192.0 1113,192.0 1113.5,192.0 1114,192.0 1114.5,192.0 1115,192.0 1115.5,192.0 1116,192.0 1116.5,192.0 1117,192.0 1117.5,192.0 1118,192.0 1118.5,192.0 1119,192.0 1119.5,192.0 1120,192.0 1120.5,192.0 1121,192.0 1121.5,192.1 1122,192.2 1122.5,192.3 1123,192.6 1123.5,193.0 1124,193.5 1124.5,194.1 1125,194.9 1125.5,195.7 1126,196.4 1126.5,197.2 1127,197.8 1127.5,198.3 1128,198.6 1128.5,198.8 1129,199.0 1129.5,199.0 1130,199.0 1130.5,199.0 1131,199.0 1131.5,198.8 1132,198.6 1132.5,198.3 1133,197.8 1133.5,197.2 1134,196.4 1134.5,195.7 1135,194.9 1135.5,194.1 1136,193.5 1136.5,193.0 1137,192.6 1137.5,192.3 1138,192.2 1138.5,192.1 1139,192.0 1139.5,192.0 1140,192.0 1140.5,192.0 1141,192.0 1141.5,192.0 1142,192.0 1142.5,192.0 1143,192.0 1143.5,192.0 1144,192.0 1144.5,192.0 1145,192.0 1145.5,192.0 1146,192.0 1146.5,192.0 1147,192.0 1147.5,192.0 1148,192.0 1148.5,192.0 1149,192.0 1149.5,192.0 1150,192.0 1150.5,192.0 1151,192.0 1151.5,192.0 1152,192.0 1152.5,192.0 1153,192.0 1153.5,192.0 1154,192.0 1154.5,192.0 1155,192.0 1155.5,192.0 1156,192.0 1156.5,192.0 1157,192.0 1157.5,192.0 1158,192.0 1158.5,192.0 1159,192.0 1159.5,192.0 1160,192.0 1160.5,192.0 1161,192.0 1161.5,192.0 1162,192.0 1162.5,192.0 1163,192.0 1163.5,192.0 1164,192.0 1164.5,192.0 1165,192.0 1165.5,192.0 1166,192.0 1166.5,192.0 1167,192.0 1167.5,192.0 1168,192.0 1168.5,192.0 1169,192.0 1169.5,192.0 1170,192.0 1170.5,192.0 1171,192.0 1171.5,192.0 1172,192.0 1172.5,192.0 1173,192.0 1173.5,192.0 1174,192.0 1174.5,192.0 1175,192.0 1175.5,192.0 1176,192.0 1176.5,192.0 1177,192.0 1177.5,192.1 1178,192.2 1178.5,192.3 1179,192.6 1179.5,193.0 1180,193.5 1180.5,194.1 1181,194.9 1181.5,195.7 1182,196.4 1182.5,197.2 1183,197.8 1183.5,198.3 1184,198.6 1184.5,198.8 1185,199.0 1185.5,199.0 1186,199.0 1186.5,199.0 1187,199.0 1187.5,198.8 1188,198.6 1188.5,198.3 1189,197.8 1189.5,197.2 1190,196.4 1190.5,195.7 1191,194.9 1191.5,194.1 1192,193.5 1192.5,193.0 1193,192.6 1193.5,192.3 1194,192.2 1194.5,192.1 1195,192.0 1195.5,192.0 1196,192.0 1196.5,192.0 1197,192.0 1197.5,192.0 1198,192.0 1198.5,192.0 1199,192.0 1199.5,192.0 1200,192.0 1200.5,192.0 1201,192.0 1201.5,192.0 1202,192.0 1202.5,192.0 1203,192.0 1203.5,192.0 1204,192.0 1204.5,192.0 1205,192.0 1205.5,192.0 1206,192.0 1206.5,192.0 1207,192.0 1207.5,192.0 1208,192.0 1208.5,192.0 1209,192.0 1209.5,192.0 1210,192.0 1210.5,192.0 1211,192.0 1211.5,192.0 1212,192.0 1212.5,192.0 1213,192.0 1213.5,192.0 1214,192.0 1214.5,192.0 1215,192.0 1215.5,192.0 1216,192.0 1216.5,192.0 1217,192.0 1217.5,192.0 1218,192.0 1218.5,192.0 1219,192.0 1219.5,192.0 1220,192.0 1220.5,192.0 1221,192.0 1221.5,192.0 1222,192.0 1222.5,192.0 1223,192.0 1223.5,192.0 1224,192.0 1224.5,192.0 1225,192.0 1225.5,192.0 1226,192.0 1226.5,192.0 1227,192.0 1227.5,192.0 1228,192.0 1228.5,192.0 1229,192.0 1229.5,192.0 1230,192.0 1230.5,192.0 1231,192.0 1231.5,192.0 1232,192.0 1232.5,192.0 1233,192.1 1233.5,192.1 1234,192.2 1234.5,192.4 1235,192.7 1235.5,193.1 1236,193.6 1236.5,194.1 1237,194.8 1237.5,195.4 1238,195.9 1238.5,196.4 1239,196.9 1239.5,197.1 1240,197.3 1240.5,197.4 1241,197.5 1241.5,197.5 1242,197.5 1242.5,197.5 1243,197.4 1243.5,197.2 1244,197.0 1244.5,196.6 1245,196.2 1245.5,195.6 1246,195.0 1246.5,194.4 1247,193.8 1247.5,193.3 1248,192.9 1248.5,192.5 1249,192.3 1249.5,192.2 1250,192.1 1250.5,192.0 1251,192.0 1251.5,192.0 1252,192.0 1252.5,192.0 1253,192.0 1253.5,192.0 1254,192.0 1254.5,192.0 1255,192.0 1255.5,192.0 1256,192.0 1256.5,192.0 1257,192.0 1257.5,192.0 1258,192.0 1258.5,192.0 1259,192.0 1259.5,192.0 1260,192.0 1260.5,192.0 1261,192.0 1261.5,192.0 1262,192.0 1262.5,192.0 1263,192.0 1263.5,192.0 1264,192.0 1264.5,192.0 1265,192.0 1265.5,192.0 1266,192.0 1266.5,192.0 1267,192.0 1267.5,192.0 1268,192.0 1268.5,192.0 1269,192.0 1269.5,192.0 1270,192.0 1270.5,192.0 1271,192.0 1271.5,192.0 1272,192.0 1272.5,192.0 1273,192.0 1273.5,192.0 1274,192.0 1274.5,192.0 1275,192.0 1275.5,192.0 1276,192.0 1276.5,192.0 1277,192.0 1277.5,192.0 1278,192.0 1278.5,192.0 1279,192.0 1279.5,192.0 1280,192.0 1280.5,192.0 1281,192.0 1281.5,192.0 1282,192.0 1282.5,192.0 1283,192.0 1283.5,192.0 1284,192.0 1284.5,192.0 1285,192.0 1285.5,192.0 1286,192.0 1286.5,192.0 1287,192.0 1287.5,192.0 1288,192.0 1288.5,192.0 1289,192.0 1289.5,192.0 1290,192.0 1290.5,192.0 1291,192.0 1291.5,193.7 1292,195.4 1292.5,197.1 1293,198.8 1293.5,200.6 1294,202.3 1294.5,204.0 1295,205.8 1295.5,207.5 1296,209.3 1296.5,209.3 1297,209.4 1297.5,209.4 1298,209.4 1298.5,209.5 1299,209.5 1299.5,209.5 1300,209.6 1300.5,209.6 1301,209.6 1301.5,209.7 1302,209.7 1302.5,209.7 1303,209.8 1303.5,209.8 1304,209.8 1304.5,209.8 1305,209.8 1305.5,209.9 1306,209.9 1306.5,209.9 1307,209.9 1307.5,209.9 1308,209.9 1308.5,209.9 1309,209.9 1309.5,209.9 1310,209.9 1310.5,209.9 1311,209.9 1311.5,209.9 1312,209.9 1312.5,209.9 1313,209.9 1313.5,209.9 1314,209.8 1314.5,209.8 1315,209.8 1315.5,209.8 1316,209.8 1316.5,212.7 1317,215.6 1317.5,218.5 1318,221.5 1318.5,224.4 1319,227.3 1319.5,230.2 1320,233.2 1320.5,236.1 1321,239.1 1321.5,242.0 1322,242.0 1322,242.0" fill="#f0c24d"/>
<polygon points="0,242.0 0,214.5 0.5,214.2 1,214.0 1.5,213.7 2,213.5 2.5,213.2 3,212.9 3.5,212.7 4,212.4 4.5,212.1 5,211.8 5.5,211.6 6,211.3 6.5,211.0 7,210.7 7.5,210.4 8,210.1 8.5,210.1 9,210.1 9.5,210.1 10,210.1 10.5,210.1 11,210.1 11.5,210.0 12,210.0 12.5,210.0 13,210.0 13.5,210.0 14,209.9 14.5,209.9 15,209.9 15.5,209.9 16,209.9 16.5,209.9 17,209.8 17.5,209.8 18,209.8 18.5,209.8 19,209.8 19.5,209.8 20,209.8 20.5,209.8 21,209.8 21.5,209.8 22,209.8 22.5,209.8 23,209.8 23.5,209.8 24,209.8 24.5,209.8 25,209.8 25.5,209.8 26,209.8 26.5,209.9 27,209.9 27.5,209.9 28,209.9 28.5,209.9 29,210.0 29.5,210.0 30,210.0 30.5,210.1 31,210.1 31.5,210.1 32,210.1 32.5,210.2 33,210.2 33.5,210.2 34,210.2 34.5,210.3 35,210.3 35.5,210.3 36,210.3 36.5,210.3 37,210.4 37.5,210.4 38,210.4 38.5,210.4 39,210.4 39.5,210.4 40,210.4 40.5,210.4 41,210.4 41.5,210.4 42,210.4 42.5,210.3 43,210.3 43.5,210.1 44,209.9 44.5,209.6 45,209.1 45.5,208.5 46,207.7 46.5,206.8 47,205.8 47.5,204.9 48,204.0 48.5,203.3 49,202.9 49.5,202.6 50,202.5 50.5,202.5 51,202.7 51.5,203.1 52,203.8 52.5,204.6 53,205.6 53.5,206.7 54,207.8 54.5,209.0 55,210.1 55.5,211.2 56,212.2 56.5,213.0 57,213.7 57.5,214.1 58,214.4 58.5,214.4 59,214.3 59.5,214.1 60,213.7 60.5,213.1 61,212.4 61.5,211.7 62,211.0 62.5,210.4 63,210.0 63.5,209.7 64,209.5 64.5,209.4 65,209.3 65.5,209.3 66,209.3 66.5,209.3 67,209.3 67.5,209.4 68,209.4 68.5,209.4 69,209.4 69.5,209.4 70,209.4 70.5,209.5 71,209.5 71.5,209.5 72,209.5 72.5,209.5 73,209.5 73.5,209.6 74,209.6 74.5,209.6 75,209.6 75.5,209.6 76,209.6 76.5,209.6 77,209.6 77.5,209.7 78,209.7 78.5,209.7 79,209.7 79.5,209.7 80,209.7 80.5,209.6 81,209.6 81.5,209.6 82,209.6 82.5,209.6 83,209.6 83.5,209.6 84,209.6 84.5,209.5 85,209.5 85.5,209.5 86,209.5 86.5,209.4 87,209.4 87.5,209.4 88,209.3 88.5,209.3 89,209.3 89.5,209.3 90,209.2 90.5,209.2 91,209.2 91.5,209.2 92,209.1 92.5,209.1 93,209.1 93.5,209.1 94,209.0 94.5,209.0 95,209.0 95.5,209.0 96,209.0 96.5,209.0 97,208.9 97.5,208.9 98,208.9 98.5,208.8 99,208.7 99.5,208.4 100,208.1 100.5,207.6 101,206.9 101.5,206.1 102,205.1 102.5,204.1 103,203.0 103.5,202.1 104,201.4 104.5,201.0 105,200.7 105.5,200.7 106,200.8 106.5,201.1 107,201.7 107.5,202.5 108,203.5 108.5,204.8 109,206.2 109.5,207.6 110,209.1 110.5,210.5 111,211.9 111.5,213.0 112,214.0 112.5,214.7 113,215.1 113.5,215.3 114,215.3 114.5,215.2 115,214.9 115.5,214.3 116,213.7 116.5,212.9 117,212.2 117.5,211.5 118,211.0 118.5,210.6 119,210.3 119.5,210.2 120,210.1 120.5,210.1 121,210.1 121.5,210.1 122,210.1 122.5,210.1 123,210.0 123.5,210.0 124,210.0 124.5,210.0 125,210.0 125.5,210.0 126,210.0 126.5,210.0 127,209.9 127.5,209.9 128,209.9 128.5,209.9 129,209.9 129.5,209.8 130,209.8 130.5,209.8 131,209.8 131.5,209.8 132,209.8 132.5,209.8 133,209.7 133.5,209.7 134,209.7 134.5,209.7 135,209.7 135.5,209.7 136,209.7 136.5,209.7 137,209.7 137.5,209.7 138,209.7 138.5,209.7 139,209.7 139.5,209.8 140,209.8 140.5,209.8 141,209.8 141.5,209.8 142,209.9 142.5,209.9 143,209.9 143.5,209.9 144,210.0 144.5,210.0 145,210.0 145.5,210.0 146,210.1 146.5,210.1 147,210.1 147.5,210.2 148,210.2 148.5,210.2 149,210.3 149.5,210.3 150,210.3 150.5,210.3 151,210.4 151.5,210.4 152,210.4 152.5,210.4 153,210.4 153.5,210.4 154,210.4 154.5,210.3 155,210.2 155.5,210.0 156,209.8 156.5,209.3 157,208.8 157.5,208.0 158,207.2 158.5,206.3 159,205.5 159.5,204.7 160,204.1 160.5,203.6 161,203.4 161.5,203.3 162,203.3 162.5,203.5 163,203.9 163.5,204.6 164,205.4 164.5,206.4 165,207.5 165.5,208.7 166,209.8 166.5,211.0 167,212.0 167.5,212.9 168,213.5 168.5,214.0 169,214.2 169.5,214.2 170,214.2 170.5,213.9 171,213.6 171.5,213.0 172,212.4 172.5,211.7 173,211.1 173.5,210.5 174,210.1 174.5,209.8 175,209.6 175.5,209.5 176,209.5 176.5,209.4 177,209.4 177.5,209.4 178,209.4 178.5,209.4 179,209.4 179.5,209.4 180,209.4 180.5,209.4 181,209.4 181.5,209.4 182,209.4 182.5,209.5 183,209.5 183.5,209.5 184,209.5 184.5,209.5 185,209.5 185.5,209.5 186,209.6 186.5,209.6 187,209.6 187.5,209.6 188,209.6 188.5,209.6 189,209.7 189.5,209.7 190,209.7 190.5,209.7 191,209.7 191.5,209.7 192,209.7 192.5,209.7 193,209.7 193.5,209.7 194,209.7 194.5,209.7 195,209.7 195.5,209.7 196,209.7 196.5,209.7 197,209.7 197.5,209.7 198,209.6 198.5,209.6 199,209.6 199.5,209.6 200,209.5 200.5,209.5 201,209.5 201.5,209.5 202,209.4 202.5,209.4 203,209.4 203.5,209.3 204,209.3 204.5,209.3 205,209.2 205.5,209.2 206,209.2 206.5,209.2 207,209.1 207.5,209.1 208,209.1 208.5,209.0 209,209.0 209.5,209.0 210,209.0 210.5,209.0 211,208.9 211.5,208.9 212,208.8 212.5,208.8 213,208.7 213.5,208.5 214,208.4 214.5,208.2 215,208.0 215.5,207.9 216,207.7 216.5,207.6 217,207.5 217.5,207.5 218,207.5 218.5,207.5 219,207.6 219.5,207.7 220,207.9 220.5,208.1 221,208.3 221.5,208.5 222,208.7 222.5,208.9 223,209.1 223.5,209.2 224,209.3 224.5,209.4 225,209.4 225.5,209.5 226,209.5 226.5,209.6 227,209.6 227.5,209.6 228,209.7 228.5,209.7 229,209.7 229.5,209.8 230,209.8 230.5,209.8 231,209.8 231.5,209.9 232,209.9 232.5,209.9 233,209.9 233.5,209.9 234,209.9 234.5,209.9 235,210.0 235.5,210.0 236,210.0 236.5,210.0 237,210.0 237.5,209.9 238,209.9 238.5,209.9 239,209.9 239.5,209.9 240,209.9 240.5,209.9 241,209.9 241.5,209.9 242,209.8 242.5,209.8 243,209.8 243.5,209.8 244,209.8 244.5,209.8 245,209.7 245.5,209.7 246,209.7 246.5,209.7 247,209.7 247.5,209.7 248,209.7 248.5,209.6 249,209.6 249.5,209.6 250,209.6 250.5,209.6 251,209.6 251.5,209.6 252,209.6 252.5,209.6 253,209.7 253.5,209.7 254,209.7 254.5,209.7 255,209.7 255.5,209.7 256,209.8 256.5,209.8 257,209.8 257.5,209.8 258,209.9 258.5,209.9 259,209.9 259.5,209.9 260,210.0 260.5,210.0 261,210.0 261.5,210.1 262,210.1 262.5,210.1 263,210.2 263.5,210.2 264,210.2 264.5,210.3 265,210.3 265.5,210.3 266,210.3 266.5,210.3 267,210.3 267.5,210.2 268,210.1 268.5,209.9 269,209.7 269.5,209.4 270,209.1 270.5,208.7 271,208.3 271.5,208.0 272,207.8 272.5,207.6 273,207.5 273.5,207.5 274,207.5 274.5,207.5 275,207.7 275.5,207.9 276,208.1 276.5,208.4 277,208.8 277.5,209.1 278,209.4 278.5,209.6 279,209.8 279.5,209.9 280,210.0 280.5,210.0 281,210.0 281.5,210.0 282,210.0 282.5,210.0 283,209.9 283.5,209.9 284,209.9 284.5,209.8 285,209.8 285.5,209.8 286,209.7 286.5,209.7 287,209.7 287.5,209.6 288,209.6 288.5,209.6 289,209.6 289.5,209.6 290,209.5 290.5,209.5 291,209.5 291.5,209.5 292,209.5 292.5,209.5 293,209.5 293.5,209.5 294,209.5 294.5,209.5 295,209.5 295.5,209.5 296,209.5 296.5,209.5 297,209.5 297.5,209.6 298,209.6 298.5,209.6 299,209.6 299.5,209.6 300,209.6 300.5,209.7 301,209.7 301.5,209.7 302,209.7 302.5,209.7 303,209.7 303.5,209.7 304,209.8 304.5,209.8 305,209.8 305.5,209.8 306,209.8 306.5,209.8 307,209.8 307.5,209.8 308,209.8 308.5,209.8 309,209.8 309.5,209.8 310,209.8 310.5,209.8 311,209.8 311.5,209.8 312,209.7 312.5,209.7 313,209.7 313.5,209.7 314,209.7 314.5,209.6 315,209.6 315.5,209.6 316,209.5 316.5,209.5 317,209.5 317.5,209.4 318,209.4 318.5,209.4 319,209.3 319.5,209.3 320,209.3 320.5,209.2 321,209.2 321.5,209.2 322,209.1 322.5,209.1 323,209.0 323.5,208.9 324,208.7 324.5,208.5 325,208.2 325.5,207.7 326,207.2 326.5,206.6 327,206.0 327.5,205.4 328,204.8 328.5,204.4 329,204.1 329.5,203.9 330,203.9 330.5,204.0 331,204.2 331.5,204.5 332,205.1 332.5,205.8 333,206.7 333.5,207.7 334,208.7 334.5,209.7 335,210.5 335.5,211.2 336,211.7 336.5,212.0 337,212.1 337.5,212.2 338,212.1 338.5,211.9 339,211.6 339.5,211.2 340,210.8 340.5,210.5 341,210.2 341.5,209.9 342,209.8 342.5,209.7 343,209.7 343.5,209.7 344,209.7 344.5,209.7 345,209.7 345.5,209.7 346,209.8 346.5,209.8 347,209.8 347.5,209.8 348,209.8 348.5,209.8 349,209.8 349.5,209.8 350,209.9 350.5,209.9 351,209.9 351.5,209.9 352,209.8 352.5,209.8 353,209.8 353.5,209.8 354,209.8 354.5,209.8 355,209.8 355.5,209.8 356,209.8 356.5,209.7 357,209.7 357.5,209.7 358,209.7 358.5,209.7 359,209.7 359.5,209.6 360,209.6 360.5,209.6 361,209.6 361.5,209.6 362,209.6 362.5,209.6 363,209.6 363.5,209.6 364,209.5 364.5,209.5 365,209.5 365.5,209.5 366,209.5 366.5,209.5 367,209.6 367.5,209.6 368,209.6 368.5,209.6 369,209.6 369.5,209.6 370,209.6 370.5,209.7 371,209.7 371.5,209.7 372,209.7 372.5,209.8 373,209.8 373.5,209.8 374,209.9 374.5,209.9 375,209.9 375.5,210.0 376,210.0 376.5,210.0 377,210.1 377.5,210.1 378,210.1 378.5,210.1 379,210.1 379.5,210.0 380,209.8 380.5,209.6 381,209.2 381.5,208.8 382,208.3 382.5,207.8 383,207.2 383.5,206.8 384,206.4 384.5,206.1 385,206.0 385.5,206.0 386,206.0 386.5,206.2 387,206.4 387.5,206.8 388,207.4 388.5,208.0 389,208.7 389.5,209.4 390,210.1 390.5,210.9 391,211.6 391.5,212.3 392,212.9 392.5,213.3 393,213.6 393.5,213.7 394,213.8 394.5,213.7 395,213.5 395.5,213.2 396,212.8 396.5,212.3 397,211.7 397.5,211.2 398,210.8 398.5,210.5 399,210.2 399.5,210.0 400,209.9 400.5,209.9 401,209.8 401.5,209.8 402,209.8 402.5,209.7 403,209.7 403.5,209.7 404,209.7 404.5,209.6 405,209.6 405.5,209.6 406,209.6 406.5,209.6 407,209.6 407.5,209.6 408,209.6 408.5,209.6 409,209.6 409.5,209.6 410,209.6 410.5,209.6 411,209.6 411.5,209.6 412,209.6 412.5,209.7 413,209.7 413.5,209.7 414,209.7 414.5,209.7 415,209.7 415.5,209.8 416,209.8 416.5,209.8 417,209.8 417.5,209.8 418,209.8 418.5,209.8 419,209.9 419.5,209.9 420,209.9 420.5,209.9 421,209.9 421.5,209.9 422,209.9 422.5,209.9 423,209.9 423.5,209.9 424,209.9 424.5,209.9 425,209.9 425.5,209.9 426,209.9 426.5,209.8 427,209.8 427.5,209.8 428,209.8 428.5,209.8 429,209.7 429.5,209.7 430,209.7 430.5,209.6 431,209.6 431.5,209.6 432,209.5 432.5,209.5 433,209.5 433.5,209.4 434,209.4 434.5,209.4 435,209.3 435.5,209.3 436,209.3 436.5,209.2 437,209.2 437.5,209.2 438,209.1 438.5,209.1 439,209.1 439.5,209.0 440,209.0 440.5,209.0 441,209.0 441.5,209.0 442,208.9 442.5,208.9 443,208.9 443.5,208.9 444,208.9 444.5,208.9 445,208.9 445.5,208.9 446,208.9 446.5,208.9 447,208.9 447.5,208.9 448,209.0 448.5,209.0 449,209.0 449.5,209.0 450,209.0 450.5,209.1 451,209.1 451.5,209.1 452,209.2 452.5,209.2 453,209.2 453.5,209.3 454,209.3 454.5,209.3 455,209.3 455.5,209.4 456,209.4 456.5,209.4 457,209.5 457.5,209.5 458,209.5 458.5,209.6 459,209.6 459.5,209.6 460,209.6 460.5,209.7 461,209.7 461.5,209.7 462,209.7 462.5,209.7 463,209.7 463.5,209.7 464,209.8 464.5,209.8 465,209.8 465.5,209.8 466,209.8 466.5,209.8 467,209.8 467.5,209.7 468,209.7 468.5,209.7 469,209.7 469.5,209.7 470,209.7 470.5,209.7 471,209.7 471.5,209.6 472,209.6 472.5,209.6 473,209.6 473.5,209.6 474,209.6 474.5,209.5 475,209.5 475.5,209.5 476,209.5 476.5,209.5 477,209.5 477.5,209.5 478,209.5 478.5,209.4 479,209.4 479.5,209.4 480,209.4 480.5,209.4 481,209.4 481.5,209.4 482,209.5 482.5,209.5 483,209.5 483.5,209.5 484,209.5 484.5,209.5 485,209.5 485.5,209.6 486,209.6 486.5,209.6 487,209.7 487.5,209.7 488,209.7 488.5,209.7 489,209.8 489.5,209.8 490,209.9 490.5,209.9 491,209.9 491.5,210.0 492,210.0 492.5,210.0 493,210.1 493.5,210.1 494,210.1 494.5,210.2 495,210.2 495.5,210.2 496,210.3 496.5,210.3 497,210.3 497.5,210.4 498,210.4 498.5,210.4 499,210.4 499.5,210.4 500,210.4 500.5,210.4 501,210.3 501.5,210.3 502,210.2 502.5,210.1 503,210.0 503.5,209.9 504,209.8 504.5,209.7 505,209.7 505.5,209.6 506,209.6 506.5,209.6 507,209.6 507.5,209.6 508,209.7 508.5,209.7 509,209.8 509.5,209.9 510,209.9 510.5,210.0 511,210.0 511.5,210.0 512,210.0 512.5,210.0 513,210.0 513.5,210.0 514,210.0 514.5,209.9 515,209.9 515.5,209.9 516,209.9 516.5,209.8 517,209.8 517.5,209.8 518,209.8 518.5,209.8 519,209.7 519.5,209.7 520,209.7 520.5,209.7 521,209.7 521.5,209.7 522,209.7 522.5,209.7 523,209.7 523.5,209.7 524,209.7 524.5,209.7 525,209.7 525.5,209.7 526,209.7 526.5,209.7 527,209.7 527.5,209.8 528,209.8 528.5,209.8 529,209.8 529.5,209.8 530,209.8 530.5,209.9 531,209.9 531.5,209.9 532,209.9 532.5,209.9 533,209.9 533.5,210.0 534,210.0 534.5,210.0 535,210.0 535.5,210.0 536,210.0 536.5,210.0 537,210.0 537.5,210.0 538,210.0 538.5,210.0 539,210.0 539.5,210.0 540,210.0 540.5,210.0 541,210.0 541.5,209.9 542,209.9 542.5,209.9 543,209.9 543.5,209.8 544,209.8 544.5,209.8 545,209.8 545.5,209.7 546,209.7 546.5,209.7 547,209.6 547.5,209.6 548,209.6 548.5,209.5 549,209.5 549.5,209.4 550,209.4 550.5,209.4 551,209.3 551.5,209.3 552,209.3 552.5,209.2 553,209.2 553.5,209.1 554,209.1 554.5,209.0 555,209.0 555.5,208.8 556,208.7 556.5,208.4 557,208.0 557.5,207.5 558,206.9 558.5,206.2 559,205.4 559.5,204.7 560,204.0 560.5,203.5 561,203.2 561.5,203.0 562,203.0 562.5,203.0 563,203.2 563.5,203.6 564,204.1 564.5,204.8 565,205.6 565.5,206.5 566,207.4 566.5,208.2 567,208.9 567.5,209.5 568,210.0 568.5,210.3 569,210.6 569.5,210.7 570,210.8 570.5,210.8 571,210.8 571.5,210.7 572,210.6 572.5,210.4 573,210.2 573.5,210.0 574,209.9 574.5,209.8 575,209.7 575.5,209.7 576,209.7 576.5,209.7 577,209.7 577.5,209.7 578,209.7 578.5,209.7 579,209.7 579.5,209.7 580,209.7 580.5,209.7 581,209.7 581.5,209.7 582,209.7 582.5,209.7 583,209.7 583.5,209.6 584,209.6 584.5,209.6 585,209.6 585.5,209.6 586,209.6 586.5,209.5 587,209.5 587.5,209.5 588,209.5 588.5,209.5 589,209.5 589.5,209.4 590,209.4 590.5,209.4 591,209.4 591.5,209.4 592,209.4 592.5,209.4 593,209.4 593.5,209.3 594,209.3 594.5,209.3 595,209.3 595.5,209.3 596,209.3 596.5,209.3 597,209.4 597.5,209.4 598,209.4 598.5,209.4 599,209.4 599.5,209.4 600,209.5 600.5,209.5 601,209.5 601.5,209.5 602,209.6 602.5,209.6 603,209.6 603.5,209.7 604,209.7 604.5,209.7 605,209.8 605.5,209.8 606,209.8 606.5,209.9 607,209.9 607.5,210.0 608,210.0 608.5,210.0 609,210.1 609.5,210.1 610,210.1 610.5,210.2 611,209.6 611.5,207.8 612,206.1 612.5,204.3 613,202.6 613.5,200.8 614,199.0 614.5,197.3 615,195.5 615.5,193.8 616,192.0 616.5,192.0 617,192.0 617.5,192.0 618,192.0 618.5,192.0 619,192.0 619.5,192.0 620,192.0 620.5,192.0 621,192.0 621.5,192.0 622,192.0 622.5,192.0 623,192.0 623.5,192.0 624,192.0 624.5,192.0 625,192.0 625.5,192.0 626,192.0 626.5,192.0 627,192.0 627.5,192.0 628,192.0 628.5,192.0 629,192.0 629.5,192.0 630,192.0 630.5,192.0 631,192.0 631.5,192.0 632,192.0 632.5,192.0 633,192.0 633.5,192.0 634,192.0 634.5,192.0 635,192.0 635.5,192.0 636,192.0 636.5,192.0 637,192.0 637.5,192.0 638,192.0 638.5,192.0 639,192.0 639.5,192.0 640,192.0 640.5,192.0 641,192.0 641.5,192.0 642,192.0 642.5,192.0 643,192.0 643.5,192.0 644,192.0 644.5,192.0 645,192.0 645.5,192.0 646,192.0 646.5,192.0 647,192.0 647.5,192.0 648,193.6 648.5,195.0 649,196.3 649.5,197.5 650,198.6 650.5,199.5 651,200.4 651.5,201.2 652,201.9 652.5,202.5 653,203.1 653.5,203.6 654,204.1 654.5,204.5 655,204.9 655.5,205.6 656,205.9 656.5,206.2 657,206.4 657.5,206.7 658,206.9 658.5,207.0 659,207.2 659.5,207.3 660,207.5 660.5,207.6 661,207.7 661.5,207.8 662,207.8 662.5,207.9 663,208.0 663.5,208.0 664,208.1 664.5,208.1 665,208.1 665.5,208.2 666,208.2 666.5,208.2 667,208.2 667.5,208.2 668,208.3 668.5,208.3 669,208.3 669.5,208.3 670,208.3 670.5,208.3 671,208.3 671.5,208.3 672,208.3 672.5,208.4 673,208.4 673.5,208.4 674,208.4 674.5,208.4 675,208.4 675.5,208.5 676,208.5 676.5,208.5 677,208.5 677.5,208.5 678,208.6 678.5,208.6 679,208.6 679.5,208.7 680,208.7 680.5,209.1 681,209.1 681.5,209.1 682,209.2 682.5,209.2 683,209.2 683.5,209.2 684,209.3 684.5,209.3 685,209.3 685.5,209.3 686,209.4 686.5,209.4 687,209.4 687.5,209.5 688,209.5 688.5,209.5 689,209.5 689.5,209.5 690,209.6 690.5,209.6 691,209.6 691.5,209.6 692,209.6 692.5,209.6 693,209.6 693.5,209.6 694,209.6 694.5,209.6 695,209.6 695.5,209.6 696,209.6 696.5,209.6 697,209.6 697.5,209.6 698,209.6 698.5,209.6 699,209.6 699.5,209.5 700,209.5 700.5,209.5 701,209.5 701.5,209.5 702,209.4 702.5,209.4 703,209.4 703.5,209.4 704,209.4 704.5,209.4 705,209.3 705.5,209.3 706,209.3 706.5,209.3 707,209.3 707.5,209.3 708,209.3 708.5,209.2 709,209.2 709.5,209.2 710,209.2 710.5,209.2 711,209.2 711.5,209.2 712,209.3 712.5,209.3 713,209.3 713.5,209.3 714,209.3 714.5,209.3 715,209.3 715.5,209.3 716,209.2 716.5,209.2 717,209.1 717.5,209.0 718,208.9 718.5,208.8 719,208.8 719.5,208.7 720,208.7 720.5,208.7 721,208.7 721.5,208.8 722,208.9 722.5,209.0 723,209.1 723.5,209.2 724,209.4 724.5,209.6 725,209.7 725.5,209.8 726,210.0 726.5,210.1 727,210.1 727.5,210.2 728,210.2 728.5,210.3 729,210.3 729.5,210.3 730,210.3 730.5,210.3 731,210.4 731.5,210.4 732,210.4 732.5,210.4 733,210.4 733.5,210.4 734,210.4 734.5,210.4 735,210.4 735.5,210.4 736,210.4 736.5,210.3 737,210.3 737.5,210.3 738,210.3 738.5,210.3 739,210.2 739.5,210.2 740,210.2 740.5,210.2 741,210.2 741.5,210.1 742,210.1 742.5,210.1 743,210.0 743.5,210.0 744,210.0 744.5,210.0 745,209.9 745.5,209.9 746,209.9 746.5,209.9 747,209.9 747.5,209.9 748,209.8 748.5,209.8 749,209.8 749.5,209.8 750,209.8 750.5,209.8 751,209.8 751.5,209.8 752,209.8 752.5,209.8 753,209.8 753.5,209.8 754,209.8 754.5,209.8 755,209.8 755.5,209.8 756,209.9 756.5,209.9 757,209.9 757.5,209.9 758,209.9 758.5,209.9 759,210.0 759.5,210.0 760,210.0 760.5,210.0 761,210.1 761.5,210.1 762,210.1 762.5,210.1 763,210.1 763.5,210.1 764,210.2 764.5,210.2 765,210.2 765.5,210.2 766,210.2 766.5,210.2 767,210.2 767.5,210.2 768,210.2 768.5,210.2 769,210.2 769.5,210.2 770,210.2 770.5,210.2 771,210.1 771.5,210.1 772,210.0 772.5,209.8 773,209.7 773.5,209.4 774,209.2 774.5,208.8 775,208.5 775.5,208.2 776,207.9 776.5,207.6 777,207.4 777.5,207.3 778,207.2 778.5,207.2 779,207.3 779.5,207.4 780,207.5 780.5,207.8 781,208.1 781.5,208.4 782,208.7 782.5,208.9 783,209.2 783.5,209.4 784,209.5 784.5,209.6 785,209.7 785.5,209.7 786,209.7 786.5,209.6 787,209.6 787.5,209.5 788,209.5 788.5,209.4 789,209.3 789.5,209.2 790,209.2 790.5,209.1 791,209.1 791.5,209.1 792,209.1 792.5,209.1 793,209.1 793.5,209.1 794,209.1 794.5,209.1 795,209.1 795.5,209.1 796,209.2 796.5,209.2 797,209.2 797.5,209.2 798,209.2 798.5,209.3 799,209.3 799.5,209.3 800,209.3 800.5,209.4 801,209.4 801.5,209.4 802,209.4 802.5,209.5 803,209.5 803.5,209.5 804,209.5 804.5,209.5 805,209.5 805.5,209.6 806,209.6 806.5,209.6 807,209.6 807.5,209.6 808,209.6 808.5,209.6 809,209.6 809.5,209.6 810,209.6 810.5,209.6 811,209.6 811.5,209.6 812,209.6 812.5,209.5 813,209.5 813.5,209.5 814,209.5 814.5,209.5 815,209.5 815.5,209.4 816,209.4 816.5,209.4 817,209.4 817.5,209.4 818,209.3 818.5,209.3 819,209.3 819.5,209.3 820,209.3 820.5,209.2 821,209.2 821.5,209.2 822,209.2 822.5,209.2 823,209.2 823.5,209.2 824,209.1 824.5,209.1 825,209.1 825.5,209.1 826,209.1 826.5,209.1 827,209.2 827.5,209.2 828,209.2 828.5,209.2 829,209.2 829.5,209.2 830,209.2 830.5,209.3 831,209.3 831.5,209.3 832,209.4 832.5,209.4 833,209.4 833.5,209.5 834,209.5 834.5,209.5 835,209.6 835.5,209.6 836,209.6 836.5,209.6 837,209.6 837.5,209.6 838,209.6 838.5,209.6 839,209.6 839.5,209.6 840,209.6 840.5,209.5 841,209.6 841.5,209.6 842,209.6 842.5,209.6 843,209.7 843.5,209.7 844,209.8 844.5,209.9 845,210.0 845.5,210.0 846,210.1 846.5,210.2 847,210.2 847.5,210.3 848,210.3 848.5,210.3 849,210.3 849.5,210.3 850,210.3 850.5,210.3 851,210.3 851.5,210.3 852,210.3 852.5,210.3 853,210.2 853.5,210.2 854,210.2 854.5,210.2 855,210.2 855.5,210.1 856,210.1 856.5,210.1 857,210.1 857.5,210.0 858,210.0 858.5,210.0 859,210.0 859.5,210.0 860,209.9 860.5,209.9 861,209.9 861.5,209.9 862,209.9 862.5,209.8 863,209.8 863.5,209.8 864,209.8 864.5,209.8 865,209.8 865.5,209.8 866,209.8 866.5,209.8 867,209.8 867.5,209.8 868,209.8 868.5,209.8 869,209.8 869.5,209.9 870,209.9 870.5,209.9 871,209.9 871.5,209.9 872,209.9 872.5,210.0 873,210.0 873.5,210.0 874,210.0 874.5,210.0 875,210.1 875.5,210.1 876,210.1 876.5,210.1 877,210.2 877.5,210.2 878,210.2 878.5,210.2 879,210.2 879.5,210.2 880,210.3 880.5,210.3 881,210.3 881.5,210.3 882,210.3 882.5,210.3 883,210.3 883.5,210.3 884,210.3 884.5,210.3 885,210.3 885.5,210.3 886,210.3 886.5,210.2 887,210.2 887.5,210.2 888,210.2 888.5,210.2 889,210.1 889.5,210.1 890,210.0 890.5,210.0 891,209.9 891.5,209.8 892,209.6 892.5,209.4 893,209.0 893.5,208.6 894,208.0 894.5,207.4 895,206.8 895.5,206.1 896,205.5 896.5,205.0 897,204.7 897.5,204.5 898,204.5 898.5,204.5 899,204.6 899.5,204.9 900,205.3 900.5,205.9 901,206.6 901.5,207.4 902,208.2 902.5,209.0 903,209.8 903.5,210.5 904,211.1 904.5,211.6 905,211.9 905.5,212.1 906,212.1 906.5,212.1 907,212.0 907.5,211.7 908,211.4 908.5,211.0 909,210.6 909.5,210.2 910,209.9 910.5,209.6 911,209.5 911.5,209.4 912,209.3 912.5,209.3 913,209.3 913.5,209.3 914,209.3 914.5,209.4 915,209.4 915.5,209.4 916,209.4 916.5,209.4 917,209.5 917.5,209.5 918,209.5 918.5,209.5 919,209.5 919.5,209.6 920,209.6 920.5,209.6 921,209.6 921.5,209.6 922,209.6 922.5,209.6 923,209.6 923.5,209.6 924,209.6 924.5,209.6 925,209.6 925.5,209.6 926,209.6 926.5,209.6 927,209.5 927.5,209.5 928,209.5 928.5,209.5 929,209.5 929.5,209.4 930,209.4 930.5,209.4 931,209.4 931.5,209.4 932,209.3 932.5,209.3 933,209.3 933.5,209.3 934,209.2 934.5,209.2 935,209.2 935.5,209.2 936,209.2 936.5,209.1 937,209.1 937.5,209.1 938,209.1 938.5,209.1 939,209.1 939.5,209.1 940,209.1 940.5,209.1 941,209.1 941.5,209.1 942,209.1 942.5,209.1 943,209.1 943.5,209.1 944,209.1 944.5,209.1 945,209.1 945.5,209.2 946,209.2 946.5,209.2 947,209.1 947.5,209.1 948,208.9 948.5,208.6 949,208.3 949.5,207.7 950,207.0 950.5,206.3 951,205.4 951.5,204.6 952,203.9 952.5,203.3 953,203.0 953.5,202.8 954,202.8 954.5,202.9 955,203.1 955.5,203.6 956,204.3 956.5,205.2 957,206.3 957.5,207.5 958,208.8 958.5,210.1 959,211.4 959.5,212.5 960,213.5 960.5,214.3 961,214.8 961.5,215.1 962,215.2 962.5,215.2 963,215.0 963.5,214.6 964,214.0 964.5,213.3 965,212.6 965.5,211.9 966,211.4 966.5,210.9 967,210.6 967.5,210.4 968,210.3 968.5,210.2 969,210.1 969.5,210.1 970,210.1 970.5,210.1 971,210.0 971.5,210.0 972,210.0 972.5,210.0 973,210.0 973.5,209.9 974,209.9 974.5,209.9 975,209.9 975.5,209.9 976,209.9 976.5,209.8 977,209.8 977.5,209.8 978,209.8 978.5,209.8 979,209.8 979.5,209.8 980,209.8 980.5,209.8 981,209.8 981.5,209.8 982,209.8 982.5,209.8 983,209.8 983.5,209.8 984,209.8 984.5,209.9 985,209.9 985.5,209.9 986,209.9 986.5,209.9 987,210.0 987.5,210.0 988,210.0 988.5,210.0 989,210.1 989.5,210.1 990,210.1 990.5,210.1 991,210.2 991.5,210.2 992,210.2 992.5,210.2 993,210.3 993.5,210.3 994,210.3 994.5,210.3 995,210.3 995.5,210.3 996,210.4 996.5,210.4 997,210.4 997.5,210.4 998,210.4 998.5,210.4 999,210.4 999.5,210.4 1000,210.4 1000.5,210.4 1001,210.3 1001.5,210.3 1002,210.3 1002.5,210.2 1003,210.2 1003.5,210.0 1004,209.9 1004.5,209.6 1005,209.2 1005.5,208.7 1006,208.0 1006.5,207.3 1007,206.5 1007.5,205.7 1008,205.0 1008.5,204.5 1009,204.1 1009.5,203.9 1010,203.8 1010.5,203.8 1011,203.9 1011.5,204.3 1012,204.8 1012.5,205.5 1013,206.4 1013.5,207.3 1014,208.3 1014.5,209.4 1015,210.4 1015.5,211.3 1016,212.0 1016.5,212.6 1017,213.0 1017.5,213.2 1018,213.3 1018.5,213.2 1019,213.0 1019.5,212.7 1020,212.3 1020.5,211.7 1021,211.1 1021.5,210.6 1022,210.1 1022.5,209.8 1023,209.5 1023.5,209.4 1024,209.3 1024.5,209.3 1025,209.3 1025.5,209.3 1026,209.3 1026.5,209.3 1027,209.3 1027.5,209.3 1028,209.4 1028.5,209.4 1029,209.4 1029.5,209.4 1030,209.4 1030.5,209.5 1031,209.5 1031.5,209.5 1032,209.5 1032.5,209.5 1033,209.6 1033.5,209.6 1034,209.6 1034.5,209.6 1035,209.6 1035.5,209.6 1036,209.6 1036.5,209.6 1037,209.6 1037.5,209.6 1038,209.6 1038.5,209.6 1039,209.6 1039.5,209.6 1040,209.6 1040.5,209.6 1041,209.6 1041.5,209.6 1042,209.5 1042.5,209.5 1043,209.5 1043.5,209.5 1044,209.5 1044.5,209.4 1045,209.4 1045.5,209.4 1046,209.4 1046.5,209.3 1047,209.3 1047.5,209.3 1048,209.3 1048.5,209.2 1049,209.2 1049.5,209.2 1050,209.2 1050.5,209.1 1051,209.1 1051.5,209.1 1052,209.1 1052.5,209.0 1053,209.0 1053.5,209.0 1054,209.0 1054.5,209.0 1055,209.0 1055.5,209.0 1056,209.0 1056.5,209.0 1057,209.0 1057.5,209.0 1058,209.0 1058.5,209.0 1059,208.9 1059.5,208.9 1060,208.7 1060.5,208.5 1061,208.1 1061.5,207.7 1062,207.1 1062.5,206.4 1063,205.7 1063.5,205.0 1064,204.4 1064.5,203.9 1065,203.6 1065.5,203.5 1066,203.4 1066.5,203.5 1067,203.8 1067.5,204.2 1068,204.7 1068.5,205.5 1069,206.3 1069.5,207.2 1070,208.1 1070.5,209.0 1071,209.8 1071.5,210.5 1072,211.0 1072.5,211.5 1073,211.7 1073.5,211.9 1074,212.0 1074.5,212.0 1075,211.9 1075.5,211.8 1076,211.6 1076.5,211.3 1077,211.1 1077.5,210.8 1078,210.6 1078.5,210.4 1079,210.3 1079.5,210.2 1080,210.2 1080.5,210.1 1081,210.1 1081.5,210.1 1082,210.1 1082.5,210.1 1083,210.1 1083.5,210.1 1084,210.0 1084.5,210.0 1085,210.0 1085.5,210.0 1086,210.0 1086.5,210.0 1087,209.9 1087.5,209.9 1088,209.9 1088.5,209.9 1089,209.9 1089.5,209.8 1090,209.8 1090.5,209.8 1091,209.8 1091.5,209.8 1092,209.8 1092.5,209.8 1093,209.8 1093.5,209.8 1094,209.8 1094.5,209.7 1095,209.8 1095.5,209.8 1096,209.8 1096.5,209.8 1097,209.8 1097.5,209.8 1098,209.8 1098.5,209.8 1099,209.8 1099.5,209.8 1100,209.9 1100.5,209.9 1101,209.9 1101.5,209.9 1102,210.0 1102.5,210.0 1103,210.0 1103.5,210.0 1104,210.1 1104.5,210.1 1105,210.1 1105.5,210.2 1106,210.2 1106.5,210.2 1107,210.2 1107.5,210.3 1108,210.3 1108.5,210.3 1109,210.3 1109.5,210.4 1110,210.4 1110.5,210.4 1111,210.4 1111.5,210.4 1112,210.4 1112.5,210.4 1113,210.4 1113.5,210.4 1114,210.4 1114.5,210.4 1115,210.4 1115.5,210.3 1116,210.2 1116.5,210.1 1117,209.9 1117.5,209.6 1118,209.3 1118.5,208.9 1119,208.5 1119.5,208.1 1120,207.8 1120.5,207.5 1121,207.3 1121.5,207.2 1122,207.1 1122.5,207.1 1123,207.1 1123.5,207.3 1124,207.5 1124.5,207.8 1125,208.1 1125.5,208.5 1126,208.8 1126.5,209.0 1127,209.2 1127.5,209.4 1128,209.5 1128.5,209.5 1129,209.5 1129.5,209.5 1130,209.5 1130.5,209.5 1131,209.5 1131.5,209.4 1132,209.4 1132.5,209.4 1133,209.4 1133.5,209.4 1134,209.4 1134.5,209.3 1135,209.3 1135.5,209.3 1136,209.3 1136.5,209.3 1137,209.3 1137.5,209.3 1138,209.3 1138.5,209.3 1139,209.3 1139.5,209.4 1140,209.4 1140.5,209.4 1141,209.4 1141.5,209.4 1142,209.4 1142.5,209.4 1143,209.5 1143.5,209.5 1144,209.5 1144.5,209.5 1145,209.5 1145.5,209.5 1146,209.6 1146.5,209.6 1147,209.6 1147.5,209.6 1148,209.6 1148.5,209.6 1149,209.6 1149.5,209.7 1150,209.7 1150.5,209.7 1151,209.7 1151.5,209.7 1152,209.7 1152.5,209.7 1153,209.7 1153.5,209.7 1154,209.7 1154.5,209.6 1155,209.6 1155.5,209.6 1156,209.6 1156.5,209.6 1157,209.6 1157.5,209.5 1158,209.5 1158.5,209.5 1159,209.5 1159.5,209.4 1160,209.4 1160.5,209.4 1161,209.4 1161.5,209.3 1162,209.3 1162.5,209.3 1163,209.2 1163.5,209.2 1164,209.2 1164.5,209.2 1165,209.1 1165.5,209.1 1166,209.1 1166.5,209.1 1167,209.0 1167.5,209.0 1168,209.0 1168.5,209.0 1169,209.0 1169.5,209.0 1170,209.0 1170.5,208.9 1171,208.9 1171.5,208.9 1172,208.9 1172.5,208.9 1173,208.9 1173.5,208.9 1174,208.8 1174.5,208.7 1175,208.6 1175.5,208.4 1176,208.2 1176.5,207.9 1177,207.6 1177.5,207.3 1178,207.1 1178.5,206.9 1179,206.8 1179.5,206.8 1180,206.8 1180.5,206.8 1181,207.0 1181.5,207.1 1182,207.4 1182.5,207.7 1183,208.0 1183.5,208.4 1184,208.7 1184.5,209.0 1185,209.3 1185.5,209.4 1186,209.6 1186.5,209.7 1187,209.8 1187.5,209.8 1188,209.8 1188.5,209.9 1189,209.9 1189.5,209.9 1190,209.9 1190.5,210.0 1191,210.0 1191.5,210.0 1192,210.0 1192.5,210.0 1193,210.0 1193.5,210.0 1194,210.0 1194.5,210.0 1195,210.0 1195.5,210.0 1196,210.0 1196.5,210.0 1197,210.0 1197.5,210.0 1198,210.0 1198.5,210.0 1199,209.9 1199.5,209.9 1200,209.9 1200.5,209.9 1201,209.9 1201.5,209.9 1202,209.8 1202.5,209.8 1203,209.8 1203.5,209.8 1204,209.8 1204.5,209.8 1205,209.7 1205.5,209.7 1206,209.7 1206.5,209.7 1207,209.7 1207.5,209.7 1208,209.7 1208.5,209.7 1209,209.7 1209.5,209.7 1210,209.7 1210.5,209.7 1211,209.7 1211.5,209.7 1212,209.7 1212.5,209.7 1213,209.8 1213.5,209.8 1214,209.8 1214.5,209.8 1215,209.8 1215.5,209.9 1216,209.9 1216.5,209.9 1217,209.9 1217.5,210.0 1218,210.0 1218.5,210.0 1219,210.1 1219.5,210.1 1220,210.1 1220.5,210.2 1221,210.2 1221.5,210.2 1222,210.2 1222.5,210.3 1223,210.3 1223.5,210.3 1224,210.3 1224.5,210.4 1225,210.4 1225.5,210.4 1226,210.4 1226.5,210.3 1227,210.2 1227.5,210.1 1228,209.9 1228.5,209.6 1229,209.3 1229.5,208.9 1230,208.4 1230.5,208.0 1231,207.6 1231.5,207.3 1232,207.1 1232.5,206.9 1233,206.9 1233.5,206.9 1234,207.0 1234.5,207.2 1235,207.4 1235.5,207.8 1236,208.2 1236.5,208.6 1237,209.0 1237.5,209.3 1238,209.5 1238.5,209.7 1239,209.8 1239.5,209.9 1240,209.9 1240.5,209.9 1241,209.9 1241.5,209.8 1242,209.8 1242.5,209.8 1243,209.7 1243.5,209.7 1244,209.7 1244.5,209.7 1245,209.6 1245.5,209.6 1246,209.6 1246.5,209.5 1247,209.5 1247.5,209.5 1248,209.5 1248.5,209.5 1249,209.5 1249.5,209.4 1250,209.4 1250.5,209.4 1251,209.4 1251.5,209.4 1252,209.4 1252.5,209.4 1253,209.4 1253.5,209.4 1254,209.4 1254.5,209.5 1255,209.5 1255.5,209.5 1256,209.5 1256.5,209.5 1257,209.5 1257.5,209.5 1258,209.6 1258.5,209.6 1259,209.6 1259.5,209.6 1260,209.6 1260.5,209.6 1261,209.7 1261.5,209.7 1262,209.7 1262.5,209.7 1263,209.7 1263.5,209.7 1264,209.7 1264.5,209.7 1265,209.7 1265.5,209.7 1266,209.8 1266.5,209.8 1267,209.7 1267.5,209.7 1268,209.7 1268.5,209.7 1269,209.7 1269.5,209.7 1270,209.7 1270.5,209.7 1271,209.7 1271.5,209.6 1272,209.6 1272.5,209.6 1273,209.6 1273.5,209.5 1274,209.5 1274.5,209.5 1275,209.5 1275.5,209.4 1276,209.4 1276.5,209.4 1277,209.3 1277.5,209.3 1278,209.3 1278.5,209.2 1279,209.2 1279.5,209.2 1280,209.1 1280.5,209.1 1281,209.1 1281.5,209.1 1282,209.0 1282.5,209.0 1283,209.0 1283.5,209.0 1284,209.0 1284.5,208.9 1285,208.9 1285.5,208.9 1286,208.9 1286.5,208.9 1287,208.9 1287.5,208.9 1288,208.9 1288.5,208.9 1289,208.9 1289.5,208.9 1290,209.0 1290.5,209.0 1291,209.0 1291.5,209.0 1292,209.0 1292.5,209.1 1293,209.1 1293.5,209.1 1294,209.2 1294.5,209.2 1295,209.2 1295.5,209.3 1296,209.3 1296.5,209.3 1297,209.4 1297.5,209.4 1298,209.4 1298.5,209.5 1299,209.5 1299.5,209.5 1300,209.6 1300.5,209.6 1301,209.6 1301.5,209.7 1302,209.7 1302.5,209.7 1303,209.8 1303.5,209.8 1304,209.8 1304.5,209.8 1305,209.8 1305.5,209.9 1306,209.9 1306.5,209.9 1307,209.9 1307.5,209.9 1308,209.9 1308.5,209.9 1309,209.9 1309.5,209.9 1310,209.9 1310.5,209.9 1311,209.9 1311.5,209.9 1312,209.9 1312.5,209.9 1313,209.9 1313.5,209.9 1314,209.8 1314.5,209.8 1315,209.8 1315.5,209.8 1316,209.8 1316.5,212.7 1317,215.6 1317.5,218.5 1318,221.5 1318.5,224.4 1319,227.3 1319.5,230.2 1320,233.2 1320.5,236.1 1321,239.1 1321.5,242.0 1322,242.0 1322,242.0" fill="#9b7fe6"/>
<polygon points="0,242.0 0,242.0 0.5,242.0 1,242.0 1.5,242.0 2,242.0 2.5,242.0 3,242.0 3.5,242.0 4,242.0 4.5,242.0 5,242.0 5.5,242.0 6,242.0 6.5,242.0 7,242.0 7.5,242.0 8,242.0 8.5,242.0 9,242.0 9.5,242.0 10,242.0 10.5,242.0 11,242.0 11.5,242.0 12,242.0 12.5,242.0 13,242.0 13.5,242.0 14,242.0 14.5,242.0 15,242.0 15.5,242.0 16,242.0 16.5,242.0 17,242.0 17.5,242.0 18,242.0 18.5,242.0 19,242.0 19.5,242.0 20,242.0 20.5,242.0 21,242.0 21.5,242.0 22,242.0 22.5,242.0 23,242.0 23.5,242.0 24,242.0 24.5,242.0 25,242.0 25.5,242.0 26,242.0 26.5,242.0 27,242.0 27.5,242.0 28,242.0 28.5,242.0 29,242.0 29.5,242.0 30,242.0 30.5,242.0 31,242.0 31.5,242.0 32,242.0 32.5,242.0 33,242.0 33.5,242.0 34,242.0 34.5,242.0 35,242.0 35.5,242.0 36,242.0 36.5,242.0 37,242.0 37.5,242.0 38,242.0 38.5,242.0 39,242.0 39.5,242.0 40,242.0 40.5,242.0 41,242.0 41.5,242.0 42,241.9 42.5,241.9 43,241.7 43.5,241.4 44,240.9 44.5,240.1 45,239.0 45.5,237.5 46,235.7 46.5,233.7 47,231.7 47.5,229.8 48,228.3 48.5,227.1 49,226.3 49.5,225.9 50,225.8 50.5,225.8 51,226.0 51.5,226.5 52,227.5 52.5,228.8 53,230.3 53.5,231.9 54,233.5 54.5,234.8 55,235.8 55.5,236.5 56,237.0 56.5,237.2 57,237.3 57.5,237.4 58,237.5 58.5,237.7 59,238.0 59.5,238.4 60,238.9 60.5,239.3 61,239.8 61.5,240.2 62,240.6 62.5,240.9 63,241.2 63.5,241.4 64,241.6 64.5,241.7 65,241.8 65.5,241.9 66,241.9 66.5,242.0 67,242.0 67.5,242.0 68,242.0 68.5,242.0 69,242.0 69.5,242.0 70,242.0 70.5,242.0 71,242.0 71.5,242.0 72,242.0 72.5,242.0 73,242.0 73.5,242.0 74,242.0 74.5,242.0 75,242.0 75.5,242.0 76,242.0 76.5,242.0 77,242.0 77.5,242.0 78,242.0 78.5,242.0 79,242.0 79.5,242.0 80,242.0 80.5,242.0 81,242.0 81.5,242.0 82,242.0 82.5,242.0 83,242.0 83.5,242.0 84,242.0 84.5,242.0 85,242.0 85.5,242.0 86,242.0 86.5,242.0 87,242.0 87.5,242.0 88,242.0 88.5,242.0 89,242.0 89.5,242.0 90,242.0 90.5,242.0 91,242.0 91.5,242.0 92,242.0 92.5,242.0 93,242.0 93.5,242.0 94,242.0 94.5,242.0 95,242.0 95.5,242.0 96,242.0 96.5,242.0 97,242.0 97.5,242.0 98,242.0 98.5,241.9 99,241.7 99.5,241.4 100,240.8 100.5,239.8 101,238.3 101.5,236.3 102,233.8 102.5,231.1 103,228.3 103.5,225.7 104,223.7 104.5,222.2 105,221.3 105.5,221.0 106,221.0 106.5,221.2 107,222.0 107.5,223.3 108,225.3 108.5,227.7 109,230.5 109.5,233.3 110,235.8 110.5,237.9 111,239.5 111.5,240.6 112,241.3 112.5,241.7 113,241.9 113.5,241.9 114,242.0 114.5,242.0 115,242.0 115.5,242.0 116,242.0 116.5,242.0 117,242.0 117.5,242.0 118,242.0 118.5,242.0 119,242.0 119.5,242.0 120,242.0 120.5,242.0 121,242.0 121.5,242.0 122,242.0 122.5,242.0 123,242.0 123.5,242.0 124,242.0 124.5,242.0 125,242.0 125.5,242.0 126,242.0 126.5,242.0 127,242.0 127.5,242.0 128,242.0 128.5,242.0 129,242.0 129.5,242.0 130,242.0 130.5,242.0 131,242.0 131.5,242.0 132,242.0 132.5,242.0 133,242.0 133.5,242.0 134,242.0 134.5,242.0 135,242.0 135.5,242.0 136,242.0 136.5,242.0 137,242.0 137.5,242.0 138,242.0 138.5,242.0 139,242.0 139.5,242.0 140,242.0 140.5,242.0 141,242.0 141.5,242.0 142,242.0 142.5,242.0 143,242.0 143.5,242.0 144,242.0 144.5,242.0 145,242.0 145.5,242.0 146,242.0 146.5,242.0 147,242.0 147.5,242.0 148,242.0 148.5,242.0 149,242.0 149.5,242.0 150,242.0 150.5,242.0 151,242.0 151.5,242.0 152,242.0 152.5,242.0 153,242.0 153.5,242.0 154,242.0 154.5,241.9 155,241.7 155.5,241.4 156,240.8 156.5,239.8 157,238.3 157.5,236.3 158,233.8 158.5,231.1 159,228.3 159.5,225.7 160,223.7 160.5,222.2 161,221.3 161.5,221.0 162,221.0 162.5,221.2 163,222.0 163.5,223.3 164,225.3 164.5,227.7 165,230.5 165.5,233.3 166,235.8 166.5,237.9 167,239.5 167.5,240.6 168,241.3 168.5,241.7 169,241.9 169.5,241.9 170,242.0 170.5,242.0 171,242.0 171.5,242.0 172,242.0 172.5,242.0 173,242.0 173.5,242.0 174,242.0 174.5,242.0 175,242.0 175.5,242.0 176,242.0 176.5,242.0 177,242.0 177.5,242.0 178,242.0 178.5,242.0 179,242.0 179.5,242.0 180,242.0 180.5,242.0 181,242.0 181.5,242.0 182,242.0 182.5,242.0 183,242.0 183.5,242.0 184,242.0 184.5,242.0 185,242.0 185.5,242.0 186,242.0 186.5,242.0 187,242.0 187.5,242.0 188,242.0 188.5,242.0 189,242.0 189.5,242.0 190,242.0 190.5,242.0 191,242.0 191.5,242.0 192,242.0 192.5,242.0 193,242.0 193.5,242.0 194,242.0 194.5,242.0 195,242.0 195.5,242.0 196,242.0 196.5,242.0 197,242.0 197.5,242.0 198,242.0 198.5,242.0 199,242.0 199.5,242.0 200,242.0 200.5,242.0 201,242.0 201.5,242.0 202,242.0 202.5,242.0 203,242.0 203.5,242.0 204,242.0 204.5,242.0 205,242.0 205.5,242.0 206,242.0 206.5,242.0 207,242.0 207.5,242.0 208,242.0 208.5,242.0 209,242.0 209.5,242.0 210,242.0 210.5,241.9 211,241.8 211.5,241.5 212,241.0 212.5,240.2 213,238.9 213.5,237.1 214,234.8 214.5,232.2 215,229.4 215.5,226.7 216,224.4 216.5,222.7 217,221.6 217.5,221.1 218,221.0 218.5,221.1 219,221.6 219.5,222.7 220,224.4 220.5,226.7 221,229.4 221.5,232.2 222,234.8 222.5,237.1 223,238.9 223.5,240.2 224,241.0 224.5,241.5 225,241.8 225.5,241.9 226,242.0 226.5,242.0 227,242.0 227.5,242.0 228,242.0 228.5,242.0 229,242.0 229.5,242.0 230,242.0 230.5,242.0 231,242.0 231.5,242.0 232,242.0 232.5,242.0 233,242.0 233.5,242.0 234,242.0 234.5,242.0 235,242.0 235.5,242.0 236,242.0 236.5,242.0 237,242.0 237.5,242.0 238,242.0 238.5,242.0 239,242.0 239.5,242.0 240,242.0 240.5,242.0 241,242.0 241.5,242.0 242,242.0 242.5,242.0 243,242.0 243.5,242.0 244,242.0 244.5,242.0 245,242.0 245.5,242.0 246,242.0 246.5,242.0 247,242.0 247.5,242.0 248,242.0 248.5,242.0 249,242.0 249.5,242.0 250,242.0 250.5,242.0 251,242.0 251.5,242.0 252,242.0 252.5,242.0 253,242.0 253.5,242.0 254,242.0 254.5,242.0 255,242.0 255.5,242.0 256,242.0 256.5,242.0 257,242.0 257.5,242.0 258,242.0 258.5,242.0 259,242.0 259.5,242.0 260,242.0 260.5,242.0 261,242.0 261.5,242.0 262,242.0 262.5,242.0 263,242.0 263.5,242.0 264,242.0 264.5,242.0 265,242.0 265.5,242.0 266,241.9 266.5,241.9 267,241.7 267.5,241.3 268,240.7 268.5,239.7 269,238.2 269.5,236.3 270,233.9 270.5,231.3 271,228.8 271.5,226.5 272,224.6 272.5,223.4 273,222.7 273.5,222.5 274,222.5 274.5,222.8 275,223.6 275.5,225.0 276,226.9 276.5,229.3 277,231.8 277.5,234.4 278,236.7 278.5,238.5 279,239.9 279.5,240.8 280,241.4 280.5,241.7 281,241.9 281.5,242.0 282,242.0 282.5,242.0 283,242.0 283.5,242.0 284,242.0 284.5,242.0 285,242.0 285.5,242.0 286,242.0 286.5,242.0 287,242.0 287.5,242.0 288,242.0 288.5,242.0 289,242.0 289.5,242.0 290,242.0 290.5,242.0 291,242.0 291.5,242.0 292,242.0 292.5,242.0 293,242.0 293.5,242.0 294,242.0 294.5,242.0 295,242.0 295.5,242.0 296,242.0 296.5,242.0 297,242.0 297.5,242.0 298,242.0 298.5,242.0 299,242.0 299.5,242.0 300,242.0 300.5,242.0 301,242.0 301.5,242.0 302,242.0 302.5,242.0 303,242.0 303.5,242.0 304,242.0 304.5,242.0 305,242.0 305.5,242.0 306,242.0 306.5,242.0 307,242.0 307.5,242.0 308,242.0 308.5,242.0 309,242.0 309.5,242.0 310,242.0 310.5,242.0 311,242.0 311.5,242.0 312,242.0 312.5,242.0 313,242.0 313.5,242.0 314,242.0 314.5,242.0 315,242.0 315.5,242.0 316,242.0 316.5,242.0 317,242.0 317.5,242.0 318,242.0 318.5,242.0 319,242.0 319.5,242.0 320,242.0 320.5,242.0 321,242.0 321.5,242.0 322,241.9 322.5,241.9 323,241.7 323.5,241.4 324,240.9 324.5,240.1 325,239.0 325.5,237.5 326,235.7 326.5,233.7 327,231.7 327.5,229.8 328,228.3 328.5,227.1 329,226.3 329.5,225.9 330,225.8 330.5,225.8 331,226.0 331.5,226.5 332,227.5 332.5,228.8 333,230.3 333.5,231.9 334,233.5 334.5,234.8 335,235.8 335.5,236.5 336,237.0 336.5,237.2 337,237.3 337.5,237.4 338,237.5 338.5,237.7 339,238.0 339.5,238.4 340,238.9 340.5,239.3 341,239.8 341.5,240.2 342,240.6 342.5,240.9 343,241.2 343.5,241.4 344,241.6 344.5,241.7 345,241.8 345.5,241.9 346,241.9 346.5,242.0 347,242.0 347.5,242.0 348,242.0 348.5,242.0 349,242.0 349.5,242.0 350,242.0 350.5,242.0 351,242.0 351.5,242.0 352,242.0 352.5,242.0 353,242.0 353.5,242.0 354,242.0 354.5,242.0 355,242.0 355.5,242.0 356,242.0 356.5,242.0 357,242.0 357.5,242.0 358,242.0 358.5,242.0 359,242.0 359.5,242.0 360,242.0 360.5,242.0 361,242.0 361.5,242.0 362,242.0 362.5,242.0 363,242.0 363.5,242.0 364,242.0 364.5,242.0 365,242.0 365.5,242.0 366,242.0 366.5,242.0 367,242.0 367.5,242.0 368,242.0 368.5,242.0 369,242.0 369.5,242.0 370,242.0 370.5,242.0 371,242.0 371.5,242.0 372,242.0 372.5,242.0 373,242.0 373.5,242.0 374,242.0 374.5,242.0 375,242.0 375.5,242.0 376,242.0 376.5,242.0 377,241.9 377.5,241.9 378,241.8 378.5,241.6 379,241.3 379.5,241.0 380,240.5 380.5,239.9 381,239.2 381.5,238.3 382,237.4 382.5,236.4 383,235.4 383.5,234.4 384,233.5 384.5,232.8 385,232.2 385.5,231.8 386,231.6 386.5,231.4 387,231.4 387.5,231.3 388,231.4 388.5,231.5 389,231.7 389.5,232.1 390,232.6 390.5,233.2 391,233.9 391.5,234.6 392,235.3 392.5,236.0 393,236.6 393.5,237.1 394,237.6 394.5,238.1 395,238.4 395.5,238.8 396,239.2 396.5,239.5 397,239.9 397.5,240.2 398,240.5 398.5,240.8 399,241.1 399.5,241.3 400,241.5 400.5,241.6 401,241.7 401.5,241.8 402,241.9 402.5,241.9 403,242.0 403.5,242.0 404,242.0 404.5,242.0 405,242.0 405.5,242.0 406,242.0 406.5,242.0 407,242.0 407.5,242.0 408,242.0 408.5,242.0 409,242.0 409.5,242.0 410,242.0 410.5,242.0 411,242.0 411.5,242.0 412,242.0 412.5,242.0 413,242.0 413.5,242.0 414,242.0 414.5,242.0 415,242.0 415.5,242.0 416,242.0 416.5,242.0 417,242.0 417.5,242.0 418,242.0 418.5,242.0 419,242.0 419.5,242.0 420,242.0 420.5,242.0 421,242.0 421.5,242.0 422,242.0 422.5,242.0 423,242.0 423.5,242.0 424,242.0 424.5,242.0 425,242.0 425.5,242.0 426,242.0 426.5,242.0 427,242.0 427.5,242.0 428,242.0 428.5,242.0 429,242.0 429.5,242.0 430,242.0 430.5,242.0 431,242.0 431.5,242.0 432,242.0 432.5,242.0 433,242.0 433.5,242.0 434,242.0 434.5,242.0 435,242.0 435.5,242.0 436,242.0 436.5,242.0 437,242.0 437.5,242.0 438,242.0 438.5,242.0 439,242.0 439.5,242.0 440,242.0 440.5,242.0 441,242.0 441.5,242.0 442,242.0 442.5,241.9 443,241.8 443.5,241.5 444,241.0 444.5,240.2 445,238.9 445.5,237.1 446,234.8 446.5,232.2 447,229.4 447.5,226.7 448,224.4 448.5,222.7 449,221.6 449.5,221.1 450,221.0 450.5,221.1 451,221.6 451.5,222.7 452,224.4 452.5,226.7 453,229.4 453.5,232.2 454,234.8 454.5,237.1 455,238.9 455.5,240.2 456,241.0 456.5,241.5 457,241.8 457.5,241.9 458,242.0 458.5,242.0 459,242.0 459.5,242.0 460,242.0 460.5,242.0 461,242.0 461.5,242.0 462,242.0 462.5,242.0 463,242.0 463.5,242.0 464,242.0 464.5,242.0 465,242.0 465.5,242.0 466,242.0 466.5,242.0 467,242.0 467.5,242.0 468,242.0 468.5,242.0 469,242.0 469.5,242.0 470,242.0 470.5,242.0 471,242.0 471.5,242.0 472,242.0 472.5,242.0 473,242.0 473.5,242.0 474,242.0 474.5,242.0 475,242.0 475.5,242.0 476,242.0 476.5,242.0 477,242.0 477.5,242.0 478,242.0 478.5,242.0 479,242.0 479.5,242.0 480,242.0 480.5,242.0 481,242.0 481.5,242.0 482,242.0 482.5,242.0 483,242.0 483.5,242.0 484,242.0 484.5,242.0 485,242.0 485.5,242.0 486,242.0 486.5,242.0 487,242.0 487.5,242.0 488,242.0 488.5,242.0 489,242.0 489.5,242.0 490,242.0 490.5,242.0 491,242.0 491.5,242.0 492,242.0 492.5,242.0 493,242.0 493.5,242.0 494,242.0 494.5,242.0 495,242.0 495.5,242.0 496,242.0 496.5,242.0 497,242.0 497.5,242.0 498,242.0 498.5,241.9 499,241.8 499.5,241.5 500,241.1 500.5,240.3 501,239.0 501.5,237.3 502,235.0 502.5,232.4 503,229.7 503.5,227.1 504,224.8 504.5,223.2 505,222.1 505.5,221.6 506,221.5 506.5,221.6 507,222.1 507.5,223.2 508,224.8 508.5,227.1 509,229.7 509.5,232.4 510,235.0 510.5,237.3 511,239.0 511.5,240.3 512,241.1 512.5,241.5 513,241.8 513.5,241.9 514,242.0 514.5,242.0 515,242.0 515.5,242.0 516,242.0 516.5,242.0 517,242.0 517.5,242.0 518,242.0 518.5,242.0 519,242.0 519.5,242.0 520,242.0 520.5,242.0 521,242.0 521.5,242.0 522,242.0 522.5,242.0 523,242.0 523.5,242.0 524,242.0 524.5,242.0 525,242.0 525.5,242.0 526,242.0 526.5,242.0 527,242.0 527.5,242.0 528,242.0 528.5,242.0 529,242.0 529.5,242.0 530,242.0 530.5,242.0 531,242.0 531.5,242.0 532,242.0 532.5,242.0 533,242.0 533.5,242.0 534,242.0 534.5,242.0 535,242.0 535.5,242.0 536,242.0 536.5,242.0 537,242.0 537.5,242.0 538,242.0 538.5,242.0 539,242.0 539.5,242.0 540,242.0 540.5,242.0 541,242.0 541.5,242.0 542,242.0 542.5,242.0 543,242.0 543.5,242.0 544,242.0 544.5,242.0 545,242.0 545.5,242.0 546,242.0 546.5,242.0 547,242.0 547.5,242.0 548,242.0 548.5,242.0 549,242.0 549.5,242.0 550,242.0 550.5,242.0 551,242.0 551.5,242.0 552,242.0 552.5,242.0 553,242.0 553.5,242.0 554,241.9 554.5,241.8 555,241.7 555.5,241.4 556,240.9 556.5,240.3 557,239.4 557.5,238.3 558,236.9 558.5,235.4 559,233.9 559.5,232.4 560,231.1 560.5,230.0 561,229.2 561.5,228.7 562,228.4 562.5,228.3 563,228.3 563.5,228.4 564,228.7 564.5,229.3 565,230.2 565.5,231.2 566,232.4 566.5,233.5 567,234.7 567.5,235.6 568,236.4 568.5,237.0 569,237.4 569.5,237.7 570,237.9 570.5,238.1 571,238.3 571.5,238.6 572,239.0 572.5,239.3 573,239.7 573.5,240.1 574,240.5 574.5,240.8 575,241.1 575.5,241.3 576,241.5 576.5,241.7 577,241.8 577.5,241.8 578,241.9 578.5,241.9 579,242.0 579.5,242.0 580,242.0 580.5,242.0 581,242.0 581.5,242.0 582,242.0 582.5,242.0 583,242.0 583.5,242.0 584,242.0 584.5,242.0 585,242.0 585.5,242.0 586,242.0 586.5,242.0 587,242.0 587.5,242.0 588,242.0 588.5,242.0 589,242.0 589.5,242.0 590,242.0 590.5,242.0 591,242.0 591.5,242.0 592,242.0 592.5,242.0 593,242.0 593.5,242.0 594,242.0 594.5,242.0 595,242.0 595.5,242.0 596,242.0 596.5,242.0 597,242.0 597.5,242.0 598,242.0 598.5,242.0 599,242.0 599.5,242.0 600,242.0 600.5,242.0 601,242.0 601.5,242.0 602,242.0 602.5,242.0 603,242.0 603.5,242.0 604,242.0 604.5,242.0 605,242.0 605.5,242.0 606,242.0 606.5,242.0 607,242.0 607.5,242.0 608,242.0 608.5,242.0 609,242.0 609.5,242.0 610,242.0 610.5,242.0 611,242.0 611.5,242.0 612,242.0 612.5,242.0 613,242.0 613.5,242.0 614,242.0 614.5,242.0 615,242.0 615.5,242.0 616,242.0 616.5,242.0 617,242.0 617.5,242.0 618,242.0 618.5,242.0 619,242.0 619.5,242.0 620,242.0 620.5,242.0 621,242.0 621.5,242.0 622,242.0 622.5,242.0 623,242.0 623.5,242.0 624,242.0 624.5,242.0 625,242.0 625.5,242.0 626,242.0 626.5,242.0 627,242.0 627.5,242.0 628,242.0 628.5,242.0 629,242.0 629.5,242.0 630,242.0 630.5,242.0 631,242.0 631.5,242.0 632,242.0 632.5,242.0 633,242.0 633.5,242.0 634,242.0 634.5,242.0 635,242.0 635.5,242.0 636,242.0 636.5,242.0 637,242.0 637.5,242.0 638,242.0 638.5,242.0 639,242.0 639.5,242.0 640,242.0 640.5,242.0 641,242.0 641.5,242.0 642,242.0 642.5,242.0 643,242.0 643.5,242.0 644,242.0 644.5,242.0 645,242.0 645.5,242.0 646,242.0 646.5,242.0 647,242.0 647.5,242.0 648,242.0 648.5,242.0 649,242.0 649.5,242.0 650,242.0 650.5,242.0 651,242.0 651.5,242.0 652,242.0 652.5,242.0 653,242.0 653.5,242.0 654,242.0 654.5,242.0 655,242.0 655.5,242.0 656,242.0 656.5,242.0 657,242.0 657.5,242.0 658,242.0 658.5,241.9 659,241.8 659.5,241.6 660,241.1 660.5,240.3 661,239.1 661.5,237.4 662,235.2 662.5,232.7 663,230.0 663.5,227.4 664,225.3 664.5,223.6 665,222.6 665.5,222.1 666,222.0 666.5,222.1 667,222.6 667.5,223.6 668,225.3 668.5,227.4 669,230.0 669.5,232.7 670,235.2 670.5,237.4 671,239.1 671.5,240.3 672,241.1 672.5,241.6 673,241.8 673.5,241.9 674,242.0 674.5,242.0 675,242.0 675.5,242.0 676,242.0 676.5,242.0 677,242.0 677.5,242.0 678,242.0 678.5,242.0 679,242.0 679.5,242.0 680,242.0 680.5,242.0 681,242.0 681.5,242.0 682,242.0 682.5,242.0 683,242.0 683.5,242.0 684,242.0 684.5,242.0 685,242.0 685.5,242.0 686,242.0 686.5,242.0 687,242.0 687.5,242.0 688,242.0 688.5,242.0 689,242.0 689.5,242.0 690,242.0 690.5,242.0 691,242.0 691.5,242.0 692,242.0 692.5,242.0 693,242.0 693.5,242.0 694,242.0 694.5,242.0 695,242.0 695.5,242.0 696,242.0 696.5,242.0 697,242.0 697.5,242.0 698,242.0 698.5,242.0 699,242.0 699.5,242.0 700,242.0 700.5,242.0 701,242.0 701.5,242.0 702,242.0 702.5,242.0 703,242.0 703.5,242.0 704,242.0 704.5,242.0 705,242.0 705.5,242.0 706,242.0 706.5,242.0 707,242.0 707.5,242.0 708,242.0 708.5,242.0 709,242.0 709.5,242.0 710,242.0 710.5,242.0 711,242.0 711.5,242.0 712,242.0 712.5,242.0 713,242.0 713.5,242.0 714,241.9 714.5,241.8 715,241.5 715.5,241.1 716,240.3 716.5,239.0 717,237.3 717.5,235.0 718,232.4 718.5,229.7 719,227.1 719.5,224.8 720,223.2 720.5,222.1 721,221.6 721.5,221.5 722,221.6 722.5,222.1 723,223.2 723.5,224.8 724,227.1 724.5,229.7 725,232.4 725.5,235.0 726,237.3 726.5,239.0 727,240.3 727.5,241.1 728,241.5 728.5,241.8 729,241.9 729.5,242.0 730,242.0 730.5,242.0 731,242.0 731.5,242.0 732,242.0 732.5,242.0 733,242.0 733.5,242.0 734,242.0 734.5,242.0 735,242.0 735.5,242.0 736,242.0 736.5,242.0 737,242.0 737.5,242.0 738,242.0 738.5,242.0 739,242.0 739.5,242.0 740,242.0 740.5,242.0 741,242.0 741.5,242.0 742,242.0 742.5,242.0 743,242.0 743.5,242.0 744,242.0 744.5,242.0 745,242.0 745.5,242.0 746,242.0 746.5,242.0 747,242.0 747.5,242.0 748,242.0 748.5,242.0 749,242.0 749.5,242.0 750,242.0 750.5,242.0 751,242.0 751.5,242.0 752,242.0 752.5,242.0 753,242.0 753.5,242.0 754,242.0 754.5,242.0 755,242.0 755.5,242.0 756,242.0 756.5,242.0 757,242.0 757.5,242.0 758,242.0 758.5,242.0 759,242.0 759.5,242.0 760,242.0 760.5,242.0 761,242.0 761.5,242.0 762,242.0 762.5,242.0 763,242.0 763.5,242.0 764,242.0 764.5,242.0 765,242.0 765.5,242.0 766,242.0 766.5,242.0 767,242.0 767.5,242.0 768,242.0 768.5,242.0 769,242.0 769.5,241.9 770,241.9 770.5,241.8 771,241.7 771.5,241.6 772,241.4 772.5,241.1 773,240.8 773.5,240.5 774,240.1 774.5,239.6 775,239.1 775.5,238.7 776,238.2 776.5,237.8 777,237.5 777.5,237.2 778,237.1 778.5,237.0 779,236.9 779.5,236.6 780,236.2 780.5,235.5 781,234.4 781.5,233.0 782,231.3 782.5,229.6 783,227.9 783.5,226.6 784,225.6 784.5,225.0 785,224.8 785.5,224.8 786,224.9 786.5,225.3 787,226.1 787.5,227.4 788,229.1 788.5,231.1 789,233.2 789.5,235.3 790,237.2 790.5,238.8 791,240.0 791.5,240.8 792,241.4 792.5,241.7 793,241.9 793.5,241.9 794,242.0 794.5,242.0 795,242.0 795.5,242.0 796,242.0 796.5,242.0 797,242.0 797.5,242.0 798,242.0 798.5,242.0 799,242.0 799.5,242.0 800,242.0 800.5,242.0 801,242.0 801.5,242.0 802,242.0 802.5,242.0 803,242.0 803.5,242.0 804,242.0 804.5,242.0 805,242.0 805.5,242.0 806,242.0 806.5,242.0 807,242.0 807.5,242.0 808,242.0 808.5,242.0 809,242.0 809.5,242.0 810,242.0 810.5,242.0 811,242.0 811.5,242.0 812,242.0 812.5,242.0 813,242.0 813.5,242.0 814,242.0 814.5,242.0 815,242.0 815.5,242.0 816,242.0 816.5,242.0 817,242.0 817.5,242.0 818,242.0 818.5,242.0 819,242.0 819.5,242.0 820,242.0 820.5,242.0 821,242.0 821.5,242.0 822,242.0 822.5,242.0 823,242.0 823.5,242.0 824,242.0 824.5,242.0 825,242.0 825.5,242.0 826,242.0 826.5,242.0 827,242.0 827.5,242.0 828,242.0 828.5,242.0 829,242.0 829.5,242.0 830,242.0 830.5,242.0 831,242.0 831.5,242.0 832,242.0 832.5,242.0 833,242.0 833.5,242.0 834,242.0 834.5,242.0 835,241.9 835.5,241.8 836,241.6 836.5,241.1 837,240.4 837.5,239.2 838,237.6 838.5,235.5 839,233.1 839.5,230.6 840,228.2 840.5,226.1 841,224.5 841.5,223.5 842,223.1 842.5,223.0 843,223.1 843.5,223.5 844,224.5 844.5,226.1 845,228.2 845.5,230.6 846,233.1 846.5,235.5 847,237.6 847.5,239.2 848,240.4 848.5,241.1 849,241.6 849.5,241.8 850,241.9 850.5,242.0 851,242.0 851.5,242.0 852,242.0 852.5,242.0 853,242.0 853.5,242.0 854,242.0 854.5,242.0 855,242.0 855.5,242.0 856,242.0 856.5,242.0 857,242.0 857.5,242.0 858,242.0 858.5,242.0 859,242.0 859.5,242.0 860,242.0 860.5,242.0 861,242.0 861.5,242.0 862,242.0 862.5,242.0 863,242.0 863.5,242.0 864,242.0 864.5,242.0 865,242.0 865.5,242.0 866,242.0 866.5,242.0 867,242.0 867.5,242.0 868,242.0 868.5,242.0 869,242.0 869.5,242.0 870,242.0 870.5,242.0 871,242.0 871.5,242.0 872,242.0 872.5,242.0 873,242.0 873.5,242.0 874,242.0 874.5,242.0 875,242.0 875.5,242.0 876,242.0 876.5,242.0 877,242.0 877.5,242.0 878,242.0 878.5,242.0 879,242.0 879.5,242.0 880,242.0 880.5,242.0 881,242.0 881.5,242.0 882,242.0 882.5,242.0 883,242.0 883.5,242.0 884,242.0 884.5,242.0 885,242.0 885.5,242.0 886,242.0 886.5,242.0 887,242.0 887.5,242.0 888,242.0 888.5,242.0 889,242.0 889.5,242.0 890,242.0 890.5,241.9 891,241.8 891.5,241.6 892,241.1 892.5,240.3 893,239.1 893.5,237.4 894,235.2 894.5,232.7 895,230.0 895.5,227.4 896,225.3 896.5,223.6 897,222.6 897.5,222.1 898,222.0 898.5,222.1 899,222.6 899.5,223.6 900,225.3 900.5,227.4 901,230.0 901.5,232.7 902,235.2 902.5,237.4 903,239.1 903.5,240.3 904,241.1 904.5,241.6 905,241.8 905.5,241.9 906,242.0 906.5,242.0 907,242.0 907.5,242.0 908,242.0 908.5,242.0 909,242.0 909.5,242.0 910,242.0 910.5,242.0 911,242.0 911.5,242.0 912,242.0 912.5,242.0 913,242.0 913.5,242.0 914,242.0 914.5,242.0 915,242.0 915.5,242.0 916,242.0 916.5,242.0 917,242.0 917.5,242.0 918,242.0 918.5,242.0 919,242.0 919.5,242.0 920,242.0 920.5,242.0 921,242.0 921.5,242.0 922,242.0 922.5,242.0 923,242.0 923.5,242.0 924,242.0 924.5,242.0 925,242.0 925.5,242.0 926,242.0 926.5,242.0 927,242.0 927.5,242.0 928,242.0 928.5,242.0 929,242.0 929.5,242.0 930,242.0 930.5,242.0 931,242.0 931.5,242.0 932,242.0 932.5,242.0 933,242.0 933.5,242.0 934,242.0 934.5,242.0 935,242.0 935.5,242.0 936,242.0 936.5,242.0 937,242.0 937.5,242.0 938,242.0 938.5,242.0 939,242.0 939.5,242.0 940,242.0 940.5,242.0 941,242.0 941.5,242.0 942,242.0 942.5,242.0 943,242.0 943.5,242.0 944,242.0 944.5,242.0 945,242.0 945.5,242.0 946,242.0 946.5,241.9 947,241.8 947.5,241.6 948,241.1 948.5,240.4 949,239.2 949.5,237.6 950,235.5 950.5,233.1 951,230.6 951.5,228.2 952,226.1 952.5,224.5 953,223.5 953.5,223.1 954,223.0 954.5,223.1 955,223.5 955.5,224.5 956,226.1 956.5,228.2 957,230.6 957.5,233.1 958,235.5 958.5,237.6 959,239.2 959.5,240.4 960,241.1 960.5,241.6 961,241.8 961.5,241.9 962,242.0 962.5,242.0 963,242.0 963.5,242.0 964,242.0 964.5,242.0 965,242.0 965.5,242.0 966,242.0 966.5,242.0 967,242.0 967.5,242.0 968,242.0 968.5,242.0 969,242.0 969.5,242.0 970,242.0 970.5,242.0 971,242.0 971.5,242.0 972,242.0 972.5,242.0 973,242.0 973.5,242.0 974,242.0 974.5,242.0 975,242.0 975.5,242.0 976,242.0 976.5,242.0 977,242.0 977.5,242.0 978,242.0 978.5,242.0 979,242.0 979.5,242.0 980,242.0 980.5,242.0 981,242.0 981.5,242.0 982,242.0 982.5,242.0 983,242.0 983.5,242.0 984,242.0 984.5,242.0 985,242.0 985.5,242.0 986,242.0 986.5,242.0 987,242.0 987.5,242.0 988,242.0 988.5,242.0 989,242.0 989.5,242.0 990,242.0 990.5,242.0 991,242.0 991.5,242.0 992,242.0 992.5,242.0 993,242.0 993.5,242.0 994,242.0 994.5,242.0 995,242.0 995.5,242.0 996,242.0 996.5,242.0 997,242.0 997.5,242.0 998,242.0 998.5,242.0 999,242.0 999.5,242.0 1000,242.0 1000.5,242.0 1001,242.0 1001.5,242.0 1002,242.0 1002.5,241.9 1003,241.8 1003.5,241.6 1004,241.1 1004.5,240.3 1005,239.2 1005.5,237.5 1006,235.4 1006.5,232.9 1007,230.3 1007.5,227.8 1008,225.7 1008.5,224.1 1009,223.1 1009.5,222.6 1010,222.5 1010.5,222.6 1011,223.1 1011.5,224.1 1012,225.7 1012.5,227.8 1013,230.3 1013.5,232.9 1014,235.4 1014.5,237.5 1015,239.2 1015.5,240.3 1016,241.1 1016.5,241.6 1017,241.8 1017.5,241.9 1018,242.0 1018.5,242.0 1019,242.0 1019.5,242.0 1020,242.0 1020.5,242.0 1021,242.0 1021.5,242.0 1022,242.0 1022.5,242.0 1023,242.0 1023.5,242.0 1024,242.0 1024.5,242.0 1025,242.0 1025.5,242.0 1026,242.0 1026.5,242.0 1027,242.0 1027.5,242.0 1028,242.0 1028.5,242.0 1029,242.0 1029.5,242.0 1030,242.0 1030.5,242.0 1031,242.0 1031.5,242.0 1032,242.0 1032.5,242.0 1033,242.0 1033.5,242.0 1034,242.0 1034.5,242.0 1035,242.0 1035.5,242.0 1036,242.0 1036.5,242.0 1037,242.0 1037.5,242.0 1038,242.0 1038.5,242.0 1039,242.0 1039.5,242.0 1040,242.0 1040.5,242.0 1041,242.0 1041.5,242.0 1042,242.0 1042.5,242.0 1043,242.0 1043.5,242.0 1044,242.0 1044.5,242.0 1045,242.0 1045.5,242.0 1046,242.0 1046.5,242.0 1047,242.0 1047.5,242.0 1048,242.0 1048.5,242.0 1049,242.0 1049.5,242.0 1050,242.0 1050.5,242.0 1051,242.0 1051.5,242.0 1052,242.0 1052.5,242.0 1053,242.0 1053.5,242.0 1054,242.0 1054.5,242.0 1055,242.0 1055.5,242.0 1056,242.0 1056.5,242.0 1057,242.0 1057.5,242.0 1058,242.0 1058.5,242.0 1059,241.9 1059.5,241.8 1060,241.5 1060.5,241.1 1061,240.5 1061.5,239.5 1062,238.2 1062.5,236.7 1063,234.9 1063.5,233.0 1064,231.3 1064.5,229.8 1065,228.7 1065.5,227.9 1066,227.5 1066.5,227.3 1067,227.3 1067.5,227.4 1068,227.9 1068.5,228.6 1069,229.8 1069.5,231.1 1070,232.6 1070.5,234.0 1071,235.3 1071.5,236.3 1072,237.0 1072.5,237.4 1073,237.6 1073.5,237.7 1074,237.8 1074.5,237.9 1075,238.1 1075.5,238.4 1076,238.7 1076.5,239.1 1077,239.5 1077.5,239.9 1078,240.3 1078.5,240.6 1079,241.0 1079.5,241.2 1080,241.4 1080.5,241.6 1081,241.7 1081.5,241.8 1082,241.9 1082.5,241.9 1083,242.0 1083.5,242.0 1084,242.0 1084.5,242.0 1085,242.0 1085.5,242.0 1086,242.0 1086.5,242.0 1087,242.0 1087.5,242.0 1088,242.0 1088.5,242.0 1089,242.0 1089.5,242.0 1090,242.0 1090.5,242.0 1091,242.0 1091.5,242.0 1092,242.0 1092.5,242.0 1093,242.0 1093.5,242.0 1094,242.0 1094.5,242.0 1095,242.0 1095.5,242.0 1096,242.0 1096.5,242.0 1097,242.0 1097.5,242.0 1098,242.0 1098.5,242.0 1099,242.0 1099.5,242.0 1100,242.0 1100.5,242.0 1101,242.0 1101.5,242.0 1102,242.0 1102.5,242.0 1103,242.0 1103.5,242.0 1104,242.0 1104.5,242.0 1105,242.0 1105.5,242.0 1106,242.0 1106.5,242.0 1107,242.0 1107.5,242.0 1108,242.0 1108.5,242.0 1109,242.0 1109.5,242.0 1110,242.0 1110.5,242.0 1111,242.0 1111.5,242.0 1112,242.0 1112.5,242.0 1113,242.0 1113.5,242.0 1114,241.9 1114.5,241.9 1115,241.8 1115.5,241.7 1116,241.6 1116.5,241.5 1117,241.3 1117.5,241.0 1118,240.7 1118.5,240.4 1119,240.0 1119.5,239.6 1120,239.2 1120.5,238.8 1121,238.4 1121.5,238.1 1122,237.9 1122.5,237.8 1123,237.7 1123.5,237.6 1124,237.4 1124.5,237.1 1125,236.4 1125.5,235.5 1126,234.3 1126.5,232.9 1127,231.4 1127.5,230.0 1128,228.8 1128.5,228.0 1129,227.5 1129.5,227.3 1130,227.3 1130.5,227.5 1131,227.8 1131.5,228.5 1132,229.5 1132.5,231.0 1133,232.7 1133.5,234.5 1134,236.3 1134.5,237.9 1135,239.3 1135.5,240.3 1136,241.0 1136.5,241.5 1137,241.7 1137.5,241.9 1138,242.0 1138.5,242.0 1139,242.0 1139.5,242.0 1140,242.0 1140.5,242.0 1141,242.0 1141.5,242.0 1142,242.0 1142.5,242.0 1143,242.0 1143.5,242.0 1144,242.0 1144.5,242.0 1145,242.0 1145.5,242.0 1146,242.0 1146.5,242.0 1147,242.0 1147.5,242.0 1148,242.0 1148.5,242.0 1149,242.0 1149.5,242.0 1150,242.0 1150.5,242.0 1151,242.0 1151.5,242.0 1152,242.0 1152.5,242.0 1153,242.0 1153.5,242.0 1154,242.0 1154.5,242.0 1155,242.0 1155.5,242.0 1156,242.0 1156.5,242.0 1157,242.0 1157.5,242.0 1158,242.0 1158.5,242.0 1159,242.0 1159.5,242.0 1160,242.0 1160.5,242.0 1161,242.0 1161.5,242.0 1162,242.0 1162.5,242.0 1163,242.0 1163.5,242.0 1164,242.0 1164.5,242.0 1165,242.0 1165.5,242.0 1166,242.0 1166.5,242.0 1167,242.0 1167.5,242.0 1168,242.0 1168.5,242.0 1169,242.0 1169.5,242.0 1170,242.0 1170.5,242.0 1171,242.0 1171.5,242.0 1172,242.0 1172.5,242.0 1173,242.0 1173.5,242.0 1174,242.0 1174.5,242.0 1175,242.0 1175.5,242.0 1176,242.0 1176.5,242.0 1177,242.0 1177.5,242.0 1178,242.0 1178.5,241.9 1179,241.8 1179.5,241.6 1180,241.1 1180.5,240.3 1181,239.2 1181.5,237.5 1182,235.4 1182.5,232.9 1183,230.3 1183.5,227.8 1184,225.7 1184.5,224.1 1185,223.1 1185.5,222.6 1186,222.5 1186.5,222.6 1187,223.1 1187.5,224.1 1188,225.7 1188.5,227.8 1189,230.3 1189.5,232.9 1190,235.4 1190.5,237.5 1191,239.2 1191.5,240.3 1192,241.1 1192.5,241.6 1193,241.8 1193.5,241.9 1194,242.0 1194.5,242.0 1195,242.0 1195.5,242.0 1196,242.0 1196.5,242.0 1197,242.0 1197.5,242.0 1198,242.0 1198.5,242.0 1199,242.0 1199.5,242.0 1200,242.0 1200.5,242.0 1201,242.0 1201.5,242.0 1202,242.0 1202.5,242.0 1203,242.0 1203.5,242.0 1204,242.0 1204.5,242.0 1205,242.0 1205.5,242.0 1206,242.0 1206.5,242.0 1207,242.0 1207.5,242.0 1208,242.0 1208.5,242.0 1209,242.0 1209.5,242.0 1210,242.0 1210.5,242.0 1211,242.0 1211.5,242.0 1212,242.0 1212.5,242.0 1213,242.0 1213.5,242.0 1214,242.0 1214.5,242.0 1215,242.0 1215.5,242.0 1216,242.0 1216.5,242.0 1217,242.0 1217.5,242.0 1218,242.0 1218.5,242.0 1219,242.0 1219.5,242.0 1220,242.0 1220.5,242.0 1221,242.0 1221.5,242.0 1222,242.0 1222.5,242.0 1223,242.0 1223.5,242.0 1224,242.0 1224.5,242.0 1225,242.0 1225.5,241.9 1226,241.9 1226.5,241.9 1227,241.8 1227.5,241.7 1228,241.5 1228.5,241.3 1229,241.1 1229.5,240.8 1230,240.5 1230.5,240.1 1231,239.7 1231.5,239.3 1232,238.9 1232.5,238.6 1233,238.3 1233.5,238.1 1234,238.0 1234.5,237.9 1235,237.8 1235.5,237.6 1236,237.3 1236.5,236.8 1237,235.9 1237.5,234.8 1238,233.5 1238.5,232.0 1239,230.7 1239.5,229.5 1240,228.6 1240.5,228.1 1241,227.8 1241.5,227.8 1242,227.9 1242.5,228.2 1243,228.8 1243.5,229.7 1244,231.1 1244.5,232.7 1245,234.4 1245.5,236.2 1246,237.8 1246.5,239.1 1247,240.2 1247.5,240.9 1248,241.4 1248.5,241.7 1249,241.9 1249.5,241.9 1250,242.0 1250.5,242.0 1251,242.0 1251.5,242.0 1252,242.0 1252.5,242.0 1253,242.0 1253.5,242.0 1254,242.0 1254.5,242.0 1255,242.0 1255.5,242.0 1256,242.0 1256.5,242.0 1257,242.0 1257.5,242.0 1258,242.0 1258.5,242.0 1259,242.0 1259.5,242.0 1260,242.0 1260.5,242.0 1261,242.0 1261.5,242.0 1262,242.0 1262.5,242.0 1263,242.0 1263.5,242.0 1264,242.0 1264.5,242.0 1265,242.0 1265.5,242.0 1266,242.0 1266.5,242.0 1267,242.0 1267.5,242.0 1268,242.0 1268.5,242.0 1269,242.0 1269.5,242.0 1270,242.0 1270.5,242.0 1271,242.0 1271.5,242.0 1272,242.0 1272.5,242.0 1273,242.0 1273.5,242.0 1274,242.0 1274.5,242.0 1275,242.0 1275.5,242.0 1276,242.0 1276.5,242.0 1277,242.0 1277.5,242.0 1278,242.0 1278.5,242.0 1279,242.0 1279.5,242.0 1280,242.0 1280.5,242.0 1281,242.0 1281.5,242.0 1282,242.0 1282.5,241.9 1283,241.8 1283.5,241.6 1284,241.3 1284.5,240.6 1285,239.7 1285.5,238.3 1286,236.5 1286.5,234.5 1287,232.4 1287.5,230.3 1288,228.6 1288.5,227.2 1289,226.4 1289.5,226.0 1290,225.8 1290.5,225.8 1291,226.1 1291.5,226.7 1292,227.8 1292.5,229.3 1293,231.0 1293.5,232.7 1294,234.3 1294.5,235.6 1295,236.5 1295.5,237.1 1296,237.3 1296.5,237.4 1297,237.4 1297.5,237.5 1298,237.6 1298.5,237.8 1299,238.1 1299.5,238.4 1300,238.9 1300.5,239.3 1301,239.8 1301.5,240.2 1302,240.6 1302.5,240.9 1303,241.2 1303.5,241.4 1304,241.6 1304.5,241.7 1305,241.8 1305.5,241.9 1306,241.9 1306.5,242.0 1307,242.0 1307.5,242.0 1308,242.0 1308.5,242.0 1309,242.0 1309.5,242.0 1310,242.0 1310.5,242.0 1311,242.0 1311.5,242.0 1312,242.0 1312.5,242.0 1313,242.0 1313.5,242.0 1314,242.0 1314.5,242.0 1315,242.0 1315.5,242.0 1316,242.0 1316.5,242.0 1317,242.0 1317.5,242.0 1318,242.0 1318.5,242.0 1319,242.0 1319.5,242.0 1320,242.0 1320.5,242.0 1321,242.0 1321.5,242.0 1322,242.0 1322,242.0" fill="#71b363"/>
<rect x="1266.00" y="192.00" width="56.00" height="24.00" fill="#ffffff" fill-opacity="0.72"/>
<text x="1277.15" y="167.40" font-family="'Liberation Sans', sans-serif" font-size="19" font-weight="700" letter-spacing="0.000" fill="#5e5e5e" stroke="#5e5e5e" stroke-width="0.5">FPS</text>
<text x="1272.65" y="212.00" font-family="'Liberation Sans', sans-serif" font-size="19" font-weight="700" letter-spacing="0.875" fill="#5e5e5e" stroke="#5e5e5e" stroke-width="0.5">CPU</text>
<text x="1275.45" y="265.80" font-family="'Liberation Sans', sans-serif" font-size="19" font-weight="700" letter-spacing="0.100" fill="#5e5e5e" stroke="#5e5e5e" stroke-width="0.5">NET</text>
<rect x="0.00" y="106.00" width="2.00" height="36.00" fill="#979797"/>
<rect x="1318.00" y="106.00" width="4.00" height="36.00" fill="#909090"/>
<rect x="1320.40" y="145.00" width="1.60" height="141.00" fill="#d0d0d0"/>
<rect x="0.00" y="284.40" width="1322.00" height="1.50" fill="#ececec"/>
<rect x="0.00" y="286.00" width="1322.00" height="2.00" fill="#838383"/>
<text x="206.00" y="310.60" font-family="'DejaVu Sans Condensed', 'DejaVu Sans', sans-serif" font-size="22" font-weight="400" letter-spacing="0.918" word-spacing="-1.54" fill="#333" stroke="#333" stroke-width="0.35">500 ms</text>
<text x="485.38" y="310.60" font-family="'DejaVu Sans Condensed', 'DejaVu Sans', sans-serif" font-size="22" font-weight="400" letter-spacing="1.036" word-spacing="-1.54" fill="#333" stroke="#333" stroke-width="0.35">1000 ms</text>
<text x="777.38" y="310.60" font-family="'DejaVu Sans Condensed', 'DejaVu Sans', sans-serif" font-size="22" font-weight="400" letter-spacing="1.036" word-spacing="-1.54" fill="#333" stroke="#333" stroke-width="0.35">1500 ms</text>
<text x="1070.50" y="310.60" font-family="'DejaVu Sans Condensed', 'DejaVu Sans', sans-serif" font-size="22" font-weight="400" letter-spacing="1.182" word-spacing="-1.54" fill="#333" stroke="#333" stroke-width="0.35">2000 ms</text>
<rect x="2.00" y="326.00" width="107.80" height="28.00" fill="#fad1d1"/>
<rect x="112.30" y="326.00" width="53.50" height="28.00" fill="#fad1d1"/>
<rect x="168.30" y="326.00" width="53.50" height="28.00" fill="#fad1d1"/>
<rect x="224.30" y="326.00" width="53.50" height="28.00" fill="#fad1d1"/>
<rect x="280.30" y="326.00" width="53.50" height="28.00" fill="#fad1d1"/>
<rect x="336.30" y="326.00" width="55.50" height="28.00" fill="#fad1d1"/>
<rect x="394.30" y="326.00" width="55.50" height="28.00" fill="#fad1d1"/>
<rect x="452.30" y="326.00" width="55.50" height="28.00" fill="#fad1d1"/>
<rect x="510.30" y="326.00" width="57.50" height="28.00" fill="#fad1d1"/>
<rect x="570.30" y="326.00" width="95.50" height="28.00" fill="#fad1d1"/>
<rect x="668.30" y="326.00" width="55.50" height="28.00" fill="#fad1d1"/>
<rect x="726.30" y="326.00" width="59.50" height="28.00" fill="#fad1d1"/>
<rect x="788.30" y="326.00" width="53.50" height="28.00" fill="#fad1d1"/>
<rect x="844.30" y="326.00" width="57.50" height="28.00" fill="#fad1d1"/>
<rect x="904.30" y="326.00" width="53.50" height="28.00" fill="#fad1d1"/>
<rect x="960.30" y="326.00" width="53.50" height="28.00" fill="#fad1d1"/>
<rect x="1016.30" y="326.00" width="55.50" height="28.00" fill="#fad1d1"/>
<rect x="1074.30" y="326.00" width="53.50" height="28.00" fill="#fad1d1"/>
<rect x="1130.30" y="326.00" width="55.50" height="28.00" fill="#fad1d1"/>
<rect x="1188.30" y="326.00" width="51.50" height="28.00" fill="#fad1d1"/>
<rect x="1242.30" y="326.00" width="51.70" height="28.00" fill="#fad1d1"/>
<text x="7.38" y="347.70" font-family="'DejaVu Sans Condensed', 'DejaVu Sans', sans-serif" font-size="22" font-weight="400" letter-spacing="0.920" word-spacing="-1.54" fill="#333" stroke="#333" stroke-width="0.35">189.6 ms</text>
<path d="M10.5 402.6 H25.7 L18.1 415.2 Z" fill="#6e6e6e"/>
<text x="32.88" y="415.50" font-family="'DejaVu Sans', sans-serif" font-size="22" font-weight="400" letter-spacing="0.125" fill="#222" stroke="#222" stroke-width="0.4">Main</text>
<rect x="0.00" y="426.00" width="50.00" height="32.00" fill="url(#ps)"/>
<rect x="50.00" y="426.00" width="1.00" height="32.00" fill="#71b363"/><rect x="52.00" y="426.00" width="1.00" height="32.00" fill="#71b363"/><rect x="54.00" y="426.00" width="1.00" height="32.00" fill="#9b7fe6"/>
<rect x="56.00" y="426.00" width="47.00" height="32.00" fill="#f0c24d"/>
<rect x="104.00" y="426.00" width="1.00" height="32.00" fill="#9b7fe6"/><rect x="106.00" y="426.00" width="1.00" height="32.00" fill="#71b363"/><rect x="108.00" y="426.00" width="1.00" height="32.00" fill="#71b363"/>
<rect x="56.00" y="460.00" width="47.00" height="32.00" fill="#f0c24d"/>
<rect x="56.00" y="494.00" width="47.00" height="32.00" fill="#b9cdf8"/>
<rect x="56.00" y="528.00" width="48.00" height="32.00" fill="url(#ps)"/>
<rect x="58.00" y="528.00" width="4.00" height="15.50" fill="url(#rs)"/>
<rect x="64.00" y="528.00" width="2.00" height="15.50" fill="url(#rs)"/>
<rect x="68.00" y="528.00" width="6.00" height="15.50" fill="url(#rs)"/>
<rect x="76.00" y="528.00" width="6.00" height="15.50" fill="url(#rs)"/>
<rect x="84.00" y="528.00" width="16.00" height="15.50" fill="url(#rs)"/>
<rect x="102.00" y="528.00" width="2.00" height="15.50" fill="url(#rs)"/>
<rect x="103.85" y="528.00" width="1.35" height="32.00" fill="#f1c24f"/>
<text y="483.60" font-family="'DejaVu Sans Condensed', 'DejaVu Sans', sans-serif" font-size="21.6" fill="#333" stroke="#333" stroke-width="0.4"><tspan x="63.92">F</tspan><tspan x="75.22" font-family="'DejaVu Sans', sans-serif" font-size="23">…</tspan></text>
<rect x="110.00" y="426.00" width="49.00" height="32.00" fill="#f0c24d"/>
<rect x="160.20" y="426.00" width="2.70" height="32.00" fill="#71b363"/><rect x="164.00" y="426.00" width="1.00" height="32.00" fill="#9b7fe6"/>
<rect x="110.00" y="460.00" width="49.00" height="32.00" fill="#f0c24d"/>
<rect x="110.00" y="494.00" width="49.00" height="32.00" fill="#b9cdf8"/>
<rect x="110.00" y="528.00" width="50.00" height="32.00" fill="url(#ps)"/>
<rect x="110.00" y="528.00" width="2.00" height="15.50" fill="url(#rs)"/>
<rect x="114.00" y="528.00" width="12.00" height="15.50" fill="url(#rs)"/>
<rect x="130.00" y="528.00" width="2.00" height="15.50" fill="url(#rs)"/>
<rect x="138.00" y="528.00" width="8.00" height="15.50" fill="url(#rs)"/>
<rect x="148.00" y="528.00" width="6.00" height="15.50" fill="url(#rs)"/>
<rect x="156.00" y="528.00" width="4.00" height="15.50" fill="url(#rs)"/>
<rect x="159.85" y="528.00" width="1.35" height="32.00" fill="#f1c24f"/>
<text y="483.60" font-family="'DejaVu Sans Condensed', 'DejaVu Sans', sans-serif" font-size="21.6" fill="#333" stroke="#333" stroke-width="0.4"><tspan x="117.92">F</tspan><tspan x="129.22" font-family="'DejaVu Sans', sans-serif" font-size="23">…</tspan></text>
<text y="517.60" font-family="'DejaVu Sans Condensed', 'DejaVu Sans', sans-serif" font-size="21.6" fill="#333" stroke="#333" stroke-width="0.4"><tspan x="118.38">u</tspan><tspan x="131.62" font-family="'DejaVu Sans', sans-serif" font-size="23">…</tspan></text>
<rect x="166.00" y="426.00" width="47.00" height="32.00" fill="#f0c24d"/>
<rect x="214.00" y="426.00" width="1.00" height="32.00" fill="#9b7fe6"/><rect x="216.00" y="426.00" width="1.00" height="32.00" fill="#71b363"/><rect x="218.00" y="426.00" width="1.00" height="32.00" fill="#71b363"/>
<rect x="166.00" y="460.00" width="47.00" height="32.00" fill="#f0c24d"/>
<rect x="166.00" y="494.00" width="47.00" height="32.00" fill="#b9cdf8"/>
<rect x="166.00" y="528.00" width="48.00" height="32.00" fill="url(#ps)"/>
<rect x="166.00" y="528.00" width="10.00" height="15.50" fill="url(#rs)"/>
<rect x="182.00" y="528.00" width="2.00" height="15.50" fill="url(#rs)"/>
<rect x="188.00" y="528.00" width="2.00" height="15.50" fill="url(#rs)"/>
<rect x="194.00" y="528.00" width="4.00" height="15.50" fill="url(#rs)"/>
<rect x="200.00" y="528.00" width="6.00" height="15.50" fill="url(#rs)"/>
<rect x="208.00" y="528.00" width="6.00" height="15.50" fill="url(#rs)"/>
<rect x="213.85" y="528.00" width="1.35" height="32.00" fill="#f1c24f"/>
<text y="483.60" font-family="'DejaVu Sans Condensed', 'DejaVu Sans', sans-serif" font-size="21.6" fill="#333" stroke="#333" stroke-width="0.4"><tspan x="173.93">F</tspan><tspan x="185.22" font-family="'DejaVu Sans', sans-serif" font-size="23">…</tspan></text>
<rect x="220.00" y="426.00" width="51.00" height="32.00" fill="#f0c24d"/>
<rect x="272.00" y="426.00" width="1.00" height="32.00" fill="#9b7fe6"/><rect x="274.00" y="426.00" width="1.00" height="32.00" fill="#71b363"/><rect x="276.00" y="426.00" width="1.00" height="32.00" fill="#9b7fe6"/>
<rect x="220.00" y="460.00" width="51.00" height="32.00" fill="#f0c24d"/>
<rect x="222.00" y="494.00" width="49.00" height="32.00" fill="#b9cdf8"/>
<rect x="222.00" y="528.00" width="50.00" height="32.00" fill="url(#ps)"/>
<rect x="222.00" y="528.00" width="4.00" height="15.50" fill="url(#rs)"/>
<rect x="230.00" y="528.00" width="2.00" height="15.50" fill="url(#rs)"/>
<rect x="234.00" y="528.00" width="2.00" height="15.50" fill="url(#rs)"/>
<rect x="240.00" y="528.00" width="2.00" height="15.50" fill="url(#rs)"/>
<rect x="248.00" y="528.00" width="4.00" height="15.50" fill="url(#rs)"/>
<rect x="254.00" y="528.00" width="2.00" height="15.50" fill="url(#rs)"/>
<rect x="260.00" y="528.00" width="10.00" height="15.50" fill="url(#rs)"/>
<rect x="271.85" y="528.00" width="1.35" height="32.00" fill="#f1c24f"/>
<text y="449.60" font-family="'DejaVu Sans Condensed', 'DejaVu Sans', sans-serif" font-size="21.6" fill="#333" stroke="#333" stroke-width="0.4"><tspan x="228.38">A</tspan><tspan x="243.62" font-family="'DejaVu Sans', sans-serif" font-size="23">…</tspan></text>
<text y="483.60" font-family="'DejaVu Sans Condensed', 'DejaVu Sans', sans-serif" font-size="21.6" fill="#333" stroke="#333" stroke-width="0.4"><tspan x="227.93">F</tspan><tspan x="239.23" font-family="'DejaVu Sans', sans-serif" font-size="23">…</tspan></text>
<text y="517.60" font-family="'DejaVu Sans Condensed', 'DejaVu Sans', sans-serif" font-size="21.6" fill="#333" stroke="#333" stroke-width="0.4"><tspan x="230.38">u</tspan><tspan x="243.62" font-family="'DejaVu Sans', sans-serif" font-size="23">…</tspan></text>
<rect x="278.00" y="426.00" width="51.00" height="32.00" fill="#f0c24d"/>
<rect x="330.00" y="426.00" width="1.00" height="32.00" fill="#71b363"/><rect x="332.00" y="426.00" width="1.00" height="32.00" fill="#71b363"/>
<rect x="278.00" y="460.00" width="51.00" height="32.00" fill="#f0c24d"/>
<rect x="278.00" y="494.00" width="51.00" height="32.00" fill="#b9cdf8"/>
<rect x="278.00" y="528.00" width="52.00" height="32.00" fill="url(#ps)"/>
<rect x="278.00" y="528.00" width="4.00" height="15.50" fill="url(#rs)"/>
<rect x="286.00" y="528.00" width="24.00" height="15.50" fill="url(#rs)"/>
<rect x="312.00" y="528.00" width="2.00" height="15.50" fill="url(#rs)"/>
<rect x="316.00" y="528.00" width="4.00" height="15.50" fill="url(#rs)"/>
<rect x="326.00" y="528.00" width="4.00" height="15.50" fill="url(#rs)"/>
<rect x="284.00" y="528.00" width="1.30" height="32.00" fill="#f1c24f"/>
<rect x="320.20" y="528.00" width="1.30" height="32.00" fill="#f1c24f"/>
<rect x="329.85" y="528.00" width="1.35" height="32.00" fill="#f1c24f"/>
<text y="449.60" font-family="'DejaVu Sans Condensed', 'DejaVu Sans', sans-serif" font-size="21.6" fill="#333" stroke="#333" stroke-width="0.4"><tspan x="286.38">A</tspan><tspan x="301.62" font-family="'DejaVu Sans', sans-serif" font-size="23">…</tspan></text>
<text y="483.60" font-family="'DejaVu Sans Condensed', 'DejaVu Sans', sans-serif" font-size="21.6" fill="#333" stroke="#333" stroke-width="0.4"><tspan x="285.93">F</tspan><tspan x="297.23" font-family="'DejaVu Sans', sans-serif" font-size="23">…</tspan></text>
<text y="517.60" font-family="'DejaVu Sans Condensed', 'DejaVu Sans', sans-serif" font-size="21.6" fill="#333" stroke="#333" stroke-width="0.4"><tspan x="286.38">u</tspan><tspan x="299.62" font-family="'DejaVu Sans', sans-serif" font-size="23">…</tspan></text>
<rect x="334.00" y="426.00" width="51.00" height="32.00" fill="#f0c24d"/>
<rect x="386.00" y="426.00" width="1.00" height="32.00" fill="#9b7fe6"/><rect x="388.00" y="426.00" width="1.00" height="32.00" fill="#9b7fe6"/><rect x="390.00" y="426.00" width="1.00" height="32.00" fill="#9b7fe6"/>
<rect x="334.00" y="460.00" width="51.00" height="32.00" fill="#f0c24d"/>
<rect x="334.00" y="494.00" width="51.00" height="32.00" fill="#b9cdf8"/>
<rect x="334.00" y="528.00" width="52.00" height="32.00" fill="url(#ps)"/>
<rect x="334.00" y="528.00" width="4.00" height="15.50" fill="url(#rs)"/>
<rect x="340.00" y="528.00" width="2.00" height="15.50" fill="url(#rs)"/>
<rect x="346.00" y="528.00" width="6.00" height="15.50" fill="url(#rs)"/>
<rect x="358.00" y="528.00" width="6.00" height="15.50" fill="url(#rs)"/>
<rect x="374.00" y="528.00" width="6.00" height="15.50" fill="url(#rs)"/>
<rect x="384.00" y="528.00" width="2.00" height="15.50" fill="url(#rs)"/>
<rect x="385.85" y="528.00" width="1.35" height="32.00" fill="#f1c24f"/>
<text y="449.60" font-family="'DejaVu Sans Condensed', 'DejaVu Sans', sans-serif" font-size="21.6" fill="#333" stroke="#333" stroke-width="0.4"><tspan x="342.38">A</tspan><tspan x="357.62" font-family="'DejaVu Sans', sans-serif" font-size="23">…</tspan></text>
<text y="483.60" font-family="'DejaVu Sans Condensed', 'DejaVu Sans', sans-serif" font-size="21.6" fill="#333" stroke="#333" stroke-width="0.4"><tspan x="341.93">F</tspan><tspan x="353.23" font-family="'DejaVu Sans', sans-serif" font-size="23">…</tspan></text>
<text y="517.60" font-family="'DejaVu Sans Condensed', 'DejaVu Sans', sans-serif" font-size="21.6" fill="#333" stroke="#333" stroke-width="0.4"><tspan x="342.38">u</tspan><tspan x="355.62" font-family="'DejaVu Sans', sans-serif" font-size="23">…</tspan></text>
<rect x="392.00" y="426.00" width="51.00" height="32.00" fill="#f0c24d"/>
<rect x="444.00" y="426.00" width="1.00" height="32.00" fill="#9b7fe6"/><rect x="446.00" y="426.00" width="1.00" height="32.00" fill="#71b363"/><rect x="448.00" y="426.00" width="1.00" height="32.00" fill="#9b7fe6"/>
<rect x="392.00" y="460.00" width="51.00" height="32.00" fill="#f0c24d"/>
<rect x="392.00" y="494.00" width="51.00" height="32.00" fill="#b9cdf8"/>
<rect x="392.00" y="528.00" width="52.00" height="32.00" fill="url(#ps)"/>
<rect x="392.00" y="528.00" width="4.00" height="15.50" fill="url(#rs)"/>
<rect x="402.00" y="528.00" width="2.00" height="15.50" fill="url(#rs)"/>
<rect x="412.00" y="528.00" width="2.00" height="15.50" fill="url(#rs)"/>
<rect x="418.00" y="528.00" width="6.00" height="15.50" fill="url(#rs)"/>
<rect x="428.00" y="528.00" width="12.00" height="15.50" fill="url(#rs)"/>
<rect x="443.85" y="528.00" width="1.35" height="32.00" fill="#f1c24f"/>
<text y="449.60" font-family="'DejaVu Sans Condensed', 'DejaVu Sans', sans-serif" font-size="21.6" fill="#333" stroke="#333" stroke-width="0.4"><tspan x="400.38">A</tspan><tspan x="415.62" font-family="'DejaVu Sans', sans-serif" font-size="23">…</tspan></text>
<text y="483.60" font-family="'DejaVu Sans Condensed', 'DejaVu Sans', sans-serif" font-size="21.6" fill="#333" stroke="#333" stroke-width="0.4"><tspan x="399.93">F</tspan><tspan x="411.23" font-family="'DejaVu Sans', sans-serif" font-size="23">…</tspan></text>
<text y="517.60" font-family="'DejaVu Sans Condensed', 'DejaVu Sans', sans-serif" font-size="21.6" fill="#333" stroke="#333" stroke-width="0.4"><tspan x="400.38">u</tspan><tspan x="413.62" font-family="'DejaVu Sans', sans-serif" font-size="23">…</tspan></text>
<rect x="450.00" y="426.00" width="51.00" height="32.00" fill="#f0c24d"/>
<rect x="502.00" y="426.00" width="1.00" height="32.00" fill="#9b7fe6"/><rect x="504.00" y="426.00" width="1.00" height="32.00" fill="#9b7fe6"/><rect x="506.00" y="426.00" width="1.00" height="32.00" fill="#9b7fe6"/>
<rect x="450.00" y="460.00" width="51.00" height="32.00" fill="#f0c24d"/>
<rect x="450.00" y="494.00" width="51.00" height="32.00" fill="#b9cdf8"/>
<rect x="450.00" y="528.00" width="52.00" height="32.00" fill="url(#ps)"/>
<rect x="450.00" y="528.00" width="6.00" height="15.50" fill="url(#rs)"/>
<rect x="458.00" y="528.00" width="2.00" height="15.50" fill="url(#rs)"/>
<rect x="472.00" y="528.00" width="8.00" height="15.50" fill="url(#rs)"/>
<rect x="488.00" y="528.00" width="2.00" height="15.50" fill="url(#rs)"/>
<rect x="492.00" y="528.00" width="2.00" height="15.50" fill="url(#rs)"/>
<rect x="496.00" y="528.00" width="4.00" height="15.50" fill="url(#rs)"/>
<rect x="501.85" y="528.00" width="1.35" height="32.00" fill="#f1c24f"/>
<text y="449.60" font-family="'DejaVu Sans Condensed', 'DejaVu Sans', sans-serif" font-size="21.6" fill="#333" stroke="#333" stroke-width="0.4"><tspan x="458.38">A</tspan><tspan x="473.62" font-family="'DejaVu Sans', sans-serif" font-size="23">…</tspan></text>
<text y="483.60" font-family="'DejaVu Sans Condensed', 'DejaVu Sans', sans-serif" font-size="21.6" fill="#333" stroke="#333" stroke-width="0.4"><tspan x="457.93">F</tspan><tspan x="469.23" font-family="'DejaVu Sans', sans-serif" font-size="23">…</tspan></text>
<text y="517.60" font-family="'DejaVu Sans Condensed', 'DejaVu Sans', sans-serif" font-size="21.6" fill="#333" stroke="#333" stroke-width="0.4"><tspan x="458.38">u</tspan><tspan x="471.62" font-family="'DejaVu Sans', sans-serif" font-size="23">…</tspan></text>
<rect x="508.00" y="426.00" width="53.00" height="32.00" fill="#f0c24d"/>
<rect x="562.20" y="426.00" width="2.70" height="32.00" fill="#71b363"/>
<rect x="508.00" y="460.00" width="53.00" height="32.00" fill="#f0c24d"/>
<rect x="508.00" y="494.00" width="53.00" height="32.00" fill="#b9cdf8"/>
<rect x="508.00" y="528.00" width="54.00" height="32.00" fill="url(#ps)"/>
<rect x="512.00" y="528.00" width="6.00" height="15.50" fill="url(#rs)"/>
<rect x="520.00" y="528.00" width="2.00" height="15.50" fill="url(#rs)"/>
<rect x="524.00" y="528.00" width="4.00" height="15.50" fill="url(#rs)"/>
<rect x="530.00" y="528.00" width="2.00" height="15.50" fill="url(#rs)"/>
<rect x="536.00" y="528.00" width="4.00" height="15.50" fill="url(#rs)"/>
<rect x="542.00" y="528.00" width="12.00" height="15.50" fill="url(#rs)"/>
<rect x="556.00" y="528.00" width="2.00" height="15.50" fill="url(#rs)"/>
<rect x="560.00" y="528.00" width="2.00" height="15.50" fill="url(#rs)"/>
<rect x="561.85" y="528.00" width="1.35" height="32.00" fill="#f1c24f"/>
<text y="449.60" font-family="'DejaVu Sans Condensed', 'DejaVu Sans', sans-serif" font-size="21.6" fill="#333" stroke="#333" stroke-width="0.4"><tspan x="516.38">A</tspan><tspan x="531.62" font-family="'DejaVu Sans', sans-serif" font-size="23">…</tspan></text>
<text y="483.60" font-family="'DejaVu Sans Condensed', 'DejaVu Sans', sans-serif" font-size="21.6" fill="#333" stroke="#333" stroke-width="0.4"><tspan x="515.92">F</tspan><tspan x="527.23" font-family="'DejaVu Sans', sans-serif" font-size="23">…</tspan></text>
<text y="517.60" font-family="'DejaVu Sans Condensed', 'DejaVu Sans', sans-serif" font-size="21.6" fill="#333" stroke="#333" stroke-width="0.4"><tspan x="516.38">u</tspan><tspan x="529.62" font-family="'DejaVu Sans', sans-serif" font-size="23">…</tspan></text>
<rect x="568.00" y="426.00" width="91.00" height="32.00" fill="#f0c24d"/>
<rect x="660.00" y="426.00" width="1.00" height="32.00" fill="#71b363"/><rect x="662.00" y="426.00" width="1.00" height="32.00" fill="#9b7fe6"/><rect x="664.00" y="426.00" width="1.00" height="32.00" fill="#9b7fe6"/>
<rect x="568.00" y="460.00" width="91.00" height="32.00" fill="#f0c24d"/>
<rect x="568.00" y="494.00" width="91.00" height="32.00" fill="#b9cdf8"/>
<rect x="568.00" y="528.00" width="92.00" height="32.00" fill="url(#ps)"/>
<rect x="568.00" y="528.00" width="2.00" height="15.50" fill="url(#rs)"/>
<rect x="572.00" y="528.00" width="4.00" height="15.50" fill="url(#rs)"/>
<rect x="578.00" y="528.00" width="2.00" height="15.50" fill="url(#rs)"/>
<rect x="584.00" y="528.00" width="12.00" height="15.50" fill="url(#rs)"/>
<rect x="598.00" y="528.00" width="4.00" height="15.50" fill="url(#rs)"/>
<rect x="604.00" y="528.00" width="6.00" height="15.50" fill="url(#rs)"/>
<rect x="658.00" y="528.00" width="2.00" height="15.50" fill="url(#rs)"/>
<rect x="612.00" y="528.00" width="37.00" height="32.00" fill="#9b7fe6"/>
<path d="M633 528 H649 V544 Z" fill="#ff0000"/>
<rect x="659.85" y="528.00" width="1.35" height="32.00" fill="#f1c24f"/>
<text y="449.60" font-family="'DejaVu Sans Condensed', 'DejaVu Sans', sans-serif" font-size="21.6" fill="#333" stroke="#333" stroke-width="0.4"><tspan x="576.88">An</tspan><tspan x="604.19" font-family="'DejaVu Sans', sans-serif" font-size="23">…</tspan><tspan x="629.25">9)</tspan></text>
<text y="483.60" font-family="'DejaVu Sans Condensed', 'DejaVu Sans', sans-serif" font-size="21.6" fill="#333" stroke="#333" stroke-width="0.4"><tspan x="575.62">Fu</tspan><tspan x="600.04" font-family="'DejaVu Sans', sans-serif" font-size="23">…</tspan><tspan x="625.45">2)</tspan></text>
<text x="575.88" y="517.60" font-family="'DejaVu Sans Condensed', 'DejaVu Sans', sans-serif" font-size="21.6" font-weight="400" letter-spacing="1.200" fill="#333" stroke="#333" stroke-width="0.4">update</text>
<rect x="666.00" y="426.00" width="53.00" height="32.00" fill="#f0c24d"/>
<rect x="720.00" y="426.00" width="1.00" height="32.00" fill="#71b363"/><rect x="722.00" y="426.00" width="1.00" height="32.00" fill="#71b363"/>
<rect x="666.00" y="460.00" width="53.00" height="32.00" fill="#f0c24d"/>
<rect x="666.00" y="494.00" width="53.00" height="32.00" fill="#b9cdf8"/>
<rect x="666.00" y="528.00" width="54.00" height="32.00" fill="url(#ps)"/>
<rect x="666.00" y="528.00" width="4.00" height="15.50" fill="url(#rs)"/>
<rect x="672.00" y="528.00" width="10.00" height="15.50" fill="url(#rs)"/>
<rect x="690.00" y="528.00" width="2.00" height="15.50" fill="url(#rs)"/>
<rect x="694.00" y="528.00" width="8.00" height="15.50" fill="url(#rs)"/>
<rect x="704.00" y="528.00" width="8.00" height="15.50" fill="url(#rs)"/>
<rect x="714.00" y="528.00" width="4.00" height="15.50" fill="url(#rs)"/>
<rect x="718.85" y="528.00" width="1.35" height="32.00" fill="#f1c24f"/>
<text y="449.60" font-family="'DejaVu Sans Condensed', 'DejaVu Sans', sans-serif" font-size="21.6" fill="#333" stroke="#333" stroke-width="0.4"><tspan x="674.38">A</tspan><tspan x="689.62" font-family="'DejaVu Sans', sans-serif" font-size="23">…</tspan></text>
<text y="483.60" font-family="'DejaVu Sans Condensed', 'DejaVu Sans', sans-serif" font-size="21.6" fill="#333" stroke="#333" stroke-width="0.4"><tspan x="673.92">F</tspan><tspan x="685.23" font-family="'DejaVu Sans', sans-serif" font-size="23">…</tspan></text>
<text y="517.60" font-family="'DejaVu Sans Condensed', 'DejaVu Sans', sans-serif" font-size="21.6" fill="#333" stroke="#333" stroke-width="0.4"><tspan x="674.38">u</tspan><tspan x="687.62" font-family="'DejaVu Sans', sans-serif" font-size="23">…</tspan></text>
<rect x="724.00" y="426.00" width="55.00" height="32.00" fill="#f0c24d"/>
<rect x="780.00" y="426.00" width="1.00" height="32.00" fill="#71b363"/><rect x="782.00" y="426.00" width="1.00" height="32.00" fill="#71b363"/>
<rect x="724.00" y="460.00" width="55.00" height="32.00" fill="#f0c24d"/>
<rect x="724.00" y="494.00" width="55.00" height="32.00" fill="#b9cdf8"/>
<rect x="724.00" y="528.00" width="56.00" height="32.00" fill="url(#ps)"/>
<rect x="724.00" y="528.00" width="32.00" height="15.50" fill="url(#rs)"/>
<rect x="760.00" y="528.00" width="2.00" height="15.50" fill="url(#rs)"/>
<rect x="764.00" y="528.00" width="4.00" height="15.50" fill="url(#rs)"/>
<rect x="770.00" y="528.00" width="4.00" height="15.50" fill="url(#rs)"/>
<rect x="778.00" y="528.00" width="2.00" height="15.50" fill="url(#rs)"/>
<rect x="779.85" y="528.00" width="1.35" height="32.00" fill="#f1c24f"/>
<text y="449.60" font-family="'DejaVu Sans Condensed', 'DejaVu Sans', sans-serif" font-size="21.6" fill="#333" stroke="#333" stroke-width="0.4"><tspan x="732.38">A</tspan><tspan x="747.62" font-family="'DejaVu Sans', sans-serif" font-size="23">…</tspan></text>
<text y="483.60" font-family="'DejaVu Sans Condensed', 'DejaVu Sans', sans-serif" font-size="21.6" fill="#333" stroke="#333" stroke-width="0.4"><tspan x="731.83">F</tspan><tspan x="743.60" font-family="'DejaVu Sans', sans-serif" font-size="23">…</tspan><tspan x="766.62">)</tspan></text>
<text y="517.60" font-family="'DejaVu Sans Condensed', 'DejaVu Sans', sans-serif" font-size="21.6" fill="#333" stroke="#333" stroke-width="0.4"><tspan x="732.38">u</tspan><tspan x="745.62" font-family="'DejaVu Sans', sans-serif" font-size="23">…</tspan></text>
<rect x="784.00" y="426.00" width="51.00" height="32.00" fill="#f0c24d"/>
<rect x="836.00" y="426.00" width="1.00" height="32.00" fill="#9b7fe6"/><rect x="838.00" y="426.00" width="1.00" height="32.00" fill="#9b7fe6"/><rect x="840.00" y="426.00" width="1.00" height="32.00" fill="#71b363"/>
<rect x="784.00" y="460.00" width="51.00" height="32.00" fill="#f0c24d"/>
<rect x="784.00" y="494.00" width="51.00" height="32.00" fill="#b9cdf8"/>
<rect x="786.00" y="528.00" width="50.00" height="32.00" fill="url(#ps)"/>
<rect x="786.00" y="528.00" width="2.00" height="15.50" fill="url(#rs)"/>
<rect x="790.00" y="528.00" width="8.00" height="15.50" fill="url(#rs)"/>
<rect x="800.00" y="528.00" width="2.00" height="15.50" fill="url(#rs)"/>
<rect x="804.00" y="528.00" width="10.00" height="15.50" fill="url(#rs)"/>
<rect x="816.00" y="528.00" width="2.00" height="15.50" fill="url(#rs)"/>
<rect x="820.00" y="528.00" width="2.00" height="15.50" fill="url(#rs)"/>
<rect x="828.00" y="528.00" width="6.00" height="15.50" fill="url(#rs)"/>
<rect x="835.85" y="528.00" width="1.35" height="32.00" fill="#f1c24f"/>
<text y="449.60" font-family="'DejaVu Sans Condensed', 'DejaVu Sans', sans-serif" font-size="21.6" fill="#333" stroke="#333" stroke-width="0.4"><tspan x="792.38">A</tspan><tspan x="807.62" font-family="'DejaVu Sans', sans-serif" font-size="23">…</tspan></text>
<text y="483.60" font-family="'DejaVu Sans Condensed', 'DejaVu Sans', sans-serif" font-size="21.6" fill="#333" stroke="#333" stroke-width="0.4"><tspan x="791.92">F</tspan><tspan x="803.23" font-family="'DejaVu Sans', sans-serif" font-size="23">…</tspan></text>
<text y="517.60" font-family="'DejaVu Sans Condensed', 'DejaVu Sans', sans-serif" font-size="21.6" fill="#333" stroke="#333" stroke-width="0.4"><tspan x="792.38">u</tspan><tspan x="805.62" font-family="'DejaVu Sans', sans-serif" font-size="23">…</tspan></text>
<rect x="842.00" y="426.00" width="53.00" height="32.00" fill="#f0c24d"/>
<rect x="896.00" y="426.00" width="1.00" height="32.00" fill="#9b7fe6"/><rect x="898.00" y="426.00" width="1.00" height="32.00" fill="#71b363"/><rect x="900.00" y="426.00" width="1.00" height="32.00" fill="#9b7fe6"/>
<rect x="842.00" y="460.00" width="53.00" height="32.00" fill="#f0c24d"/>
<rect x="842.00" y="494.00" width="53.00" height="32.00" fill="#b9cdf8"/>
<rect x="842.00" y="528.00" width="54.00" height="32.00" fill="url(#ps)"/>
<rect x="844.00" y="528.00" width="4.00" height="15.50" fill="url(#rs)"/>
<rect x="850.00" y="528.00" width="2.00" height="15.50" fill="url(#rs)"/>
<rect x="854.00" y="528.00" width="2.00" height="15.50" fill="url(#rs)"/>
<rect x="858.00" y="528.00" width="6.00" height="15.50" fill="url(#rs)"/>
<rect x="866.00" y="528.00" width="2.00" height="15.50" fill="url(#rs)"/>
<rect x="870.00" y="528.00" width="4.00" height="15.50" fill="url(#rs)"/>
<rect x="880.00" y="528.00" width="4.00" height="15.50" fill="url(#rs)"/>
<rect x="888.00" y="528.00" width="8.00" height="15.50" fill="url(#rs)"/>
<rect x="895.85" y="528.00" width="1.35" height="32.00" fill="#f1c24f"/>
<text y="449.60" font-family="'DejaVu Sans Condensed', 'DejaVu Sans', sans-serif" font-size="21.6" fill="#333" stroke="#333" stroke-width="0.4"><tspan x="850.38">A</tspan><tspan x="865.62" font-family="'DejaVu Sans', sans-serif" font-size="23">…</tspan></text>
<text y="483.60" font-family="'DejaVu Sans Condensed', 'DejaVu Sans', sans-serif" font-size="21.6" fill="#333" stroke="#333" stroke-width="0.4"><tspan x="849.92">F</tspan><tspan x="861.23" font-family="'DejaVu Sans', sans-serif" font-size="23">…</tspan></text>
<text y="517.60" font-family="'DejaVu Sans Condensed', 'DejaVu Sans', sans-serif" font-size="21.6" fill="#333" stroke="#333" stroke-width="0.4"><tspan x="850.38">u</tspan><tspan x="863.62" font-family="'DejaVu Sans', sans-serif" font-size="23">…</tspan></text>
<rect x="902.00" y="426.00" width="49.00" height="32.00" fill="#f0c24d"/>
<rect x="952.00" y="426.00" width="1.00" height="32.00" fill="#9b7fe6"/><rect x="954.00" y="426.00" width="1.00" height="32.00" fill="#9b7fe6"/><rect x="956.00" y="426.00" width="1.00" height="32.00" fill="#71b363"/>
<rect x="902.00" y="460.00" width="49.00" height="32.00" fill="#f0c24d"/>
<rect x="902.00" y="494.00" width="49.00" height="32.00" fill="#b9cdf8"/>
<rect x="902.00" y="528.00" width="50.00" height="32.00" fill="url(#ps)"/>
<rect x="904.00" y="528.00" width="4.00" height="15.50" fill="url(#rs)"/>
<rect x="914.00" y="528.00" width="6.00" height="15.50" fill="url(#rs)"/>
<rect x="922.00" y="528.00" width="8.00" height="15.50" fill="url(#rs)"/>
<rect x="940.00" y="528.00" width="2.00" height="15.50" fill="url(#rs)"/>
<rect x="944.00" y="528.00" width="2.00" height="15.50" fill="url(#rs)"/>
<rect x="948.00" y="528.00" width="2.00" height="15.50" fill="url(#rs)"/>
<rect x="951.85" y="528.00" width="1.35" height="32.00" fill="#f1c24f"/>
<text y="483.60" font-family="'DejaVu Sans Condensed', 'DejaVu Sans', sans-serif" font-size="21.6" fill="#333" stroke="#333" stroke-width="0.4"><tspan x="909.92">F</tspan><tspan x="921.23" font-family="'DejaVu Sans', sans-serif" font-size="23">…</tspan></text>
<text y="517.60" font-family="'DejaVu Sans Condensed', 'DejaVu Sans', sans-serif" font-size="21.6" fill="#333" stroke="#333" stroke-width="0.4"><tspan x="910.38">u</tspan><tspan x="923.62" font-family="'DejaVu Sans', sans-serif" font-size="23">…</tspan></text>
<rect x="958.00" y="426.00" width="49.00" height="32.00" fill="#f0c24d"/>
<rect x="1008.00" y="426.00" width="1.00" height="32.00" fill="#9b7fe6"/><rect x="1010.00" y="426.00" width="1.00" height="32.00" fill="#9b7fe6"/><rect x="1012.00" y="426.00" width="1.00" height="32.00" fill="#9b7fe6"/>
<rect x="958.00" y="460.00" width="49.00" height="32.00" fill="#f0c24d"/>
<rect x="958.00" y="494.00" width="49.00" height="32.00" fill="#b9cdf8"/>
<rect x="958.00" y="528.00" width="50.00" height="32.00" fill="url(#ps)"/>
<rect x="958.00" y="528.00" width="4.00" height="15.50" fill="url(#rs)"/>
<rect x="964.00" y="528.00" width="2.00" height="15.50" fill="url(#rs)"/>
<rect x="968.00" y="528.00" width="2.00" height="15.50" fill="url(#rs)"/>
<rect x="972.00" y="528.00" width="10.00" height="15.50" fill="url(#rs)"/>
<rect x="984.00" y="528.00" width="2.00" height="15.50" fill="url(#rs)"/>
<rect x="994.00" y="528.00" width="2.00" height="15.50" fill="url(#rs)"/>
<rect x="998.00" y="528.00" width="2.00" height="15.50" fill="url(#rs)"/>
<rect x="1002.00" y="528.00" width="2.00" height="15.50" fill="url(#rs)"/>
<rect x="1007.85" y="528.00" width="1.35" height="32.00" fill="#f1c24f"/>
<text y="483.60" font-family="'DejaVu Sans Condensed', 'DejaVu Sans', sans-serif" font-size="21.6" fill="#333" stroke="#333" stroke-width="0.4"><tspan x="965.92">F</tspan><tspan x="977.23" font-family="'DejaVu Sans', sans-serif" font-size="23">…</tspan></text>
<text y="517.60" font-family="'DejaVu Sans Condensed', 'DejaVu Sans', sans-serif" font-size="21.6" fill="#333" stroke="#333" stroke-width="0.4"><tspan x="966.38">u</tspan><tspan x="979.62" font-family="'DejaVu Sans', sans-serif" font-size="23">…</tspan></text>
<rect x="1014.00" y="426.00" width="51.00" height="32.00" fill="#f0c24d"/>
<rect x="1066.00" y="426.00" width="1.00" height="32.00" fill="#71b363"/><rect x="1068.00" y="426.00" width="1.00" height="32.00" fill="#71b363"/>
<rect x="1014.00" y="460.00" width="51.00" height="32.00" fill="#f0c24d"/>
<rect x="1014.00" y="494.00" width="51.00" height="32.00" fill="#b9cdf8"/>
<rect x="1014.00" y="528.00" width="52.00" height="32.00" fill="url(#ps)"/>
<rect x="1020.00" y="528.00" width="12.00" height="15.50" fill="url(#rs)"/>
<rect x="1034.00" y="528.00" width="6.00" height="15.50" fill="url(#rs)"/>
<rect x="1042.00" y="528.00" width="8.00" height="15.50" fill="url(#rs)"/>
<rect x="1052.00" y="528.00" width="2.00" height="15.50" fill="url(#rs)"/>
<rect x="1056.00" y="528.00" width="8.00" height="15.50" fill="url(#rs)"/>
<rect x="1065.85" y="528.00" width="1.35" height="32.00" fill="#f1c24f"/>
<text y="449.60" font-family="'DejaVu Sans Condensed', 'DejaVu Sans', sans-serif" font-size="21.6" fill="#333" stroke="#333" stroke-width="0.4"><tspan x="1022.38">A</tspan><tspan x="1037.62" font-family="'DejaVu Sans', sans-serif" font-size="23">…</tspan></text>
<text y="483.60" font-family="'DejaVu Sans Condensed', 'DejaVu Sans', sans-serif" font-size="21.6" fill="#333" stroke="#333" stroke-width="0.4"><tspan x="1021.92">F</tspan><tspan x="1033.22" font-family="'DejaVu Sans', sans-serif" font-size="23">…</tspan></text>
<text y="517.60" font-family="'DejaVu Sans Condensed', 'DejaVu Sans', sans-serif" font-size="21.6" fill="#333" stroke="#333" stroke-width="0.4"><tspan x="1022.38">u</tspan><tspan x="1035.62" font-family="'DejaVu Sans', sans-serif" font-size="23">…</tspan></text>
<rect x="1072.00" y="426.00" width="51.00" height="32.00" fill="#f0c24d"/>
<rect x="1124.00" y="426.00" width="1.00" height="32.00" fill="#71b363"/><rect x="1126.00" y="426.00" width="1.00" height="32.00" fill="#71b363"/>
<rect x="1072.00" y="460.00" width="51.00" height="32.00" fill="#f0c24d"/>
<rect x="1072.00" y="494.00" width="51.00" height="32.00" fill="#b9cdf8"/>
<rect x="1072.00" y="528.00" width="52.00" height="32.00" fill="url(#ps)"/>
<rect x="1072.00" y="528.00" width="4.00" height="15.50" fill="url(#rs)"/>
<rect x="1078.00" y="528.00" width="4.00" height="15.50" fill="url(#rs)"/>
<rect x="1084.00" y="528.00" width="4.00" height="15.50" fill="url(#rs)"/>
<rect x="1092.00" y="528.00" width="2.00" height="15.50" fill="url(#rs)"/>
<rect x="1096.00" y="528.00" width="2.00" height="15.50" fill="url(#rs)"/>
<rect x="1102.00" y="528.00" width="18.00" height="15.50" fill="url(#rs)"/>
<rect x="1122.00" y="528.00" width="2.00" height="15.50" fill="url(#rs)"/>
<rect x="1123.85" y="528.00" width="1.35" height="32.00" fill="#f1c24f"/>
<text y="449.60" font-family="'DejaVu Sans Condensed', 'DejaVu Sans', sans-serif" font-size="21.6" fill="#333" stroke="#333" stroke-width="0.4"><tspan x="1080.38">A</tspan><tspan x="1095.62" font-family="'DejaVu Sans', sans-serif" font-size="23">…</tspan></text>
<text y="483.60" font-family="'DejaVu Sans Condensed', 'DejaVu Sans', sans-serif" font-size="21.6" fill="#333" stroke="#333" stroke-width="0.4"><tspan x="1079.92">F</tspan><tspan x="1091.22" font-family="'DejaVu Sans', sans-serif" font-size="23">…</tspan></text>
<text y="517.60" font-family="'DejaVu Sans Condensed', 'DejaVu Sans', sans-serif" font-size="21.6" fill="#333" stroke="#333" stroke-width="0.4"><tspan x="1080.38">u</tspan><tspan x="1093.62" font-family="'DejaVu Sans', sans-serif" font-size="23">…</tspan></text>
<rect x="1128.00" y="426.00" width="51.00" height="32.00" fill="#f0c24d"/>
<rect x="1180.00" y="426.00" width="1.00" height="32.00" fill="#9b7fe6"/><rect x="1182.00" y="426.00" width="1.00" height="32.00" fill="#9b7fe6"/><rect x="1184.00" y="426.00" width="1.00" height="32.00" fill="#9b7fe6"/>
<rect x="1128.00" y="460.00" width="51.00" height="32.00" fill="#f0c24d"/>
<rect x="1128.00" y="494.00" width="51.00" height="32.00" fill="#b9cdf8"/>
<rect x="1128.00" y="528.00" width="52.00" height="32.00" fill="url(#ps)"/>
<rect x="1128.00" y="528.00" width="8.00" height="15.50" fill="url(#rs)"/>
<rect x="1138.00" y="528.00" width="8.00" height="15.50" fill="url(#rs)"/>
<rect x="1148.00" y="528.00" width="6.00" height="15.50" fill="url(#rs)"/>
<rect x="1156.00" y="528.00" width="2.00" height="15.50" fill="url(#rs)"/>
<rect x="1160.00" y="528.00" width="4.00" height="15.50" fill="url(#rs)"/>
<rect x="1172.00" y="528.00" width="6.00" height="15.50" fill="url(#rs)"/>
<rect x="1179.85" y="528.00" width="1.35" height="32.00" fill="#f1c24f"/>
<text y="449.60" font-family="'DejaVu Sans Condensed', 'DejaVu Sans', sans-serif" font-size="21.6" fill="#333" stroke="#333" stroke-width="0.4"><tspan x="1136.38">A</tspan><tspan x="1151.62" font-family="'DejaVu Sans', sans-serif" font-size="23">…</tspan></text>
<text y="483.60" font-family="'DejaVu Sans Condensed', 'DejaVu Sans', sans-serif" font-size="21.6" fill="#333" stroke="#333" stroke-width="0.4"><tspan x="1135.92">F</tspan><tspan x="1147.22" font-family="'DejaVu Sans', sans-serif" font-size="23">…</tspan></text>
<text y="517.60" font-family="'DejaVu Sans Condensed', 'DejaVu Sans', sans-serif" font-size="21.6" fill="#333" stroke="#333" stroke-width="0.4"><tspan x="1136.38">u</tspan><tspan x="1149.62" font-family="'DejaVu Sans', sans-serif" font-size="23">…</tspan></text>
<rect x="1186.00" y="426.00" width="49.00" height="32.00" fill="#f0c24d"/>
<rect x="1236.00" y="426.00" width="1.00" height="32.00" fill="#71b363"/><rect x="1238.00" y="426.00" width="1.00" height="32.00" fill="#71b363"/>
<rect x="1186.00" y="460.00" width="49.00" height="32.00" fill="#f0c24d"/>
<rect x="1186.00" y="494.00" width="49.00" height="32.00" fill="#b9cdf8"/>
<rect x="1186.00" y="528.00" width="50.00" height="32.00" fill="url(#ps)"/>
<rect x="1186.00" y="528.00" width="2.00" height="15.50" fill="url(#rs)"/>
<rect x="1192.00" y="528.00" width="8.00" height="15.50" fill="url(#rs)"/>
<rect x="1202.00" y="528.00" width="6.00" height="15.50" fill="url(#rs)"/>
<rect x="1210.00" y="528.00" width="4.00" height="15.50" fill="url(#rs)"/>
<rect x="1220.00" y="528.00" width="2.00" height="15.50" fill="url(#rs)"/>
<rect x="1224.00" y="528.00" width="2.00" height="15.50" fill="url(#rs)"/>
<rect x="1230.00" y="528.00" width="6.00" height="15.50" fill="url(#rs)"/>
<rect x="1235.85" y="528.00" width="1.35" height="32.00" fill="#f1c24f"/>
<text y="483.60" font-family="'DejaVu Sans Condensed', 'DejaVu Sans', sans-serif" font-size="21.6" fill="#333" stroke="#333" stroke-width="0.4"><tspan x="1193.92">F</tspan><tspan x="1205.22" font-family="'DejaVu Sans', sans-serif" font-size="23">…</tspan></text>
<text y="517.60" font-family="'DejaVu Sans Condensed', 'DejaVu Sans', sans-serif" font-size="21.6" fill="#333" stroke="#333" stroke-width="0.4"><tspan x="1194.38">u</tspan><tspan x="1207.62" font-family="'DejaVu Sans', sans-serif" font-size="23">…</tspan></text>
<rect x="1240.00" y="426.00" width="49.00" height="32.00" fill="#f0c24d"/>
<rect x="1290.00" y="426.00" width="1.00" height="32.00" fill="#71b363"/><rect x="1292.00" y="426.00" width="1.00" height="32.00" fill="#71b363"/>
<rect x="1240.00" y="460.00" width="49.00" height="32.00" fill="#f0c24d"/>
<rect x="1240.00" y="494.00" width="49.00" height="32.00" fill="#b9cdf8"/>
<rect x="1240.00" y="528.00" width="48.00" height="32.00" fill="url(#ps)"/>
<rect x="1240.00" y="528.00" width="2.00" height="15.50" fill="url(#rs)"/>
<rect x="1246.00" y="528.00" width="10.00" height="15.50" fill="url(#rs)"/>
<rect x="1258.00" y="528.00" width="2.00" height="15.50" fill="url(#rs)"/>
<rect x="1262.00" y="528.00" width="8.00" height="15.50" fill="url(#rs)"/>
<rect x="1274.00" y="528.00" width="8.00" height="15.50" fill="url(#rs)"/>
<rect x="1284.00" y="528.00" width="4.00" height="15.50" fill="url(#rs)"/>
<rect x="1288.85" y="528.00" width="1.35" height="32.00" fill="#f1c24f"/>
<text y="483.60" font-family="'DejaVu Sans Condensed', 'DejaVu Sans', sans-serif" font-size="21.6" fill="#333" stroke="#333" stroke-width="0.4"><tspan x="1247.92">F</tspan><tspan x="1259.22" font-family="'DejaVu Sans', sans-serif" font-size="23">…</tspan></text>
<text y="517.60" font-family="'DejaVu Sans Condensed', 'DejaVu Sans', sans-serif" font-size="21.6" fill="#333" stroke="#333" stroke-width="0.4"><tspan x="1248.38">u</tspan><tspan x="1261.62" font-family="'DejaVu Sans', sans-serif" font-size="23">…</tspan></text>
<rect x="1294.00" y="426.00" width="28.00" height="32.00" fill="url(#ps)"/>
<rect x="1294.00" y="426.00" width="12.00" height="15.50" fill="url(#rs)"/>
<rect x="1308.00" y="426.00" width="6.00" height="15.50" fill="url(#rs)"/>
<rect x="1316.00" y="426.00" width="2.00" height="15.50" fill="url(#rs)"/>
<rect x="103.80" y="562.00" width="1.40" height="32.00" fill="#f2c65a"/>
<rect x="159.70" y="562.00" width="1.40" height="32.00" fill="#f2c65a"/>
<rect x="213.60" y="562.00" width="1.40" height="32.00" fill="#f2c65a"/>
<rect x="271.90" y="562.00" width="1.40" height="32.00" fill="#f2c65a"/>
<rect x="329.80" y="562.00" width="1.40" height="32.00" fill="#f2c65a"/>
<rect x="385.70" y="562.00" width="1.40" height="32.00" fill="#f2c65a"/>
<rect x="444.00" y="562.00" width="1.40" height="32.00" fill="#f2c65a"/>
<rect x="501.90" y="562.00" width="1.40" height="32.00" fill="#f2c65a"/>
<rect x="562.10" y="562.00" width="1.40" height="32.00" fill="#f2c65a"/>
<rect x="660.00" y="562.00" width="1.40" height="32.00" fill="#f2c65a"/>
<rect x="719.90" y="562.00" width="1.40" height="32.00" fill="#f2c65a"/>
<rect x="779.80" y="562.00" width="1.40" height="32.00" fill="#f2c65a"/>
<rect x="835.70" y="562.00" width="1.40" height="32.00" fill="#f2c65a"/>
<rect x="896.00" y="562.00" width="1.40" height="32.00" fill="#f2c65a"/>
<rect x="951.90" y="562.00" width="1.40" height="32.00" fill="#f2c65a"/>
<rect x="1008.00" y="562.00" width="1.40" height="32.00" fill="#f2c65a"/>
<rect x="1065.90" y="562.00" width="1.40" height="32.00" fill="#f2c65a"/>
<rect x="1124.00" y="562.00" width="1.40" height="32.00" fill="#f2c65a"/>
<rect x="1179.90" y="562.00" width="1.40" height="32.00" fill="#f2c65a"/>
<rect x="1235.70" y="562.00" width="1.40" height="32.00" fill="#f2c65a"/>
<rect x="1287.50" y="562.00" width="1.40" height="32.00" fill="#f2c65a"/>
<rect x="81.80" y="562.00" width="1.40" height="32.00" fill="#9b7fe6"/>
<rect x="357.80" y="562.00" width="1.40" height="32.00" fill="#9b7fe6"/>
<rect x="827.70" y="562.00" width="1.40" height="32.00" fill="#9b7fe6"/>
<rect x="927.80" y="562.00" width="1.40" height="32.00" fill="#9b7fe6"/>
<rect x="973.90" y="562.00" width="1.40" height="32.00" fill="#9b7fe6"/>
<rect x="1151.80" y="562.00" width="1.40" height="32.00" fill="#9b7fe6"/>
<rect x="1243.70" y="562.00" width="1.40" height="32.00" fill="#9b7fe6"/>
<rect x="1263.80" y="562.00" width="1.40" height="32.00" fill="#9b7fe6"/>
<rect x="54.50" y="606.00" width="1.00" height="30.00" fill="#68ab55"/>
<rect x="110.00" y="606.00" width="2.00" height="30.00" fill="#66aa52"/>
<rect x="164.00" y="606.00" width="2.00" height="30.00" fill="#66aa52"/>
<rect x="220.00" y="606.00" width="2.00" height="30.00" fill="#66aa52"/>
<rect x="275.60" y="606.00" width="2.00" height="30.00" fill="#66aa52"/>
<rect x="333.80" y="606.00" width="2.00" height="30.00" fill="#66aa52"/>
<rect x="390.00" y="606.00" width="2.00" height="30.00" fill="#66aa52"/>
<rect x="450.00" y="606.00" width="2.00" height="30.00" fill="#66aa52"/>
<rect x="506.00" y="606.00" width="2.00" height="30.00" fill="#66aa52"/>
<rect x="565.80" y="606.00" width="2.00" height="30.00" fill="#66aa52"/>
<rect x="724.00" y="606.00" width="2.00" height="30.00" fill="#66aa52"/>
<rect x="783.80" y="606.00" width="2.00" height="30.00" fill="#66aa52"/>
<rect x="839.70" y="606.00" width="2.00" height="30.00" fill="#66aa52"/>
<rect x="900.00" y="606.00" width="2.00" height="30.00" fill="#66aa52"/>
<rect x="1012.00" y="606.00" width="2.00" height="30.00" fill="#66aa52"/>
<rect x="1070.00" y="606.00" width="2.00" height="30.00" fill="#66aa52"/>
<rect x="1127.70" y="606.00" width="2.00" height="30.00" fill="#66aa52"/>
<rect x="1184.00" y="606.00" width="2.00" height="30.00" fill="#66aa52"/>
<rect x="1294.00" y="606.00" width="2.00" height="30.00" fill="#66aa52"/>
<rect x="6.50" y="648.00" width="1.00" height="30.00" fill="#68ab55"/>
<rect x="16.50" y="648.00" width="1.00" height="30.00" fill="#68ab55"/>
<rect x="166.00" y="648.00" width="2.00" height="30.00" fill="#66aa52"/>
<rect x="392.00" y="648.00" width="2.00" height="30.00" fill="#66aa52"/>
<rect x="508.00" y="648.00" width="2.00" height="30.00" fill="#66aa52"/>
<rect x="615.70" y="648.00" width="2.00" height="30.00" fill="#66aa52"/>
<rect x="724.00" y="648.00" width="2.00" height="30.00" fill="#66aa52"/>
<rect x="784.00" y="648.00" width="2.00" height="30.00" fill="#66aa52"/>
<rect x="880.00" y="648.00" width="2.00" height="30.00" fill="#66aa52"/>
<rect x="958.00" y="648.00" width="2.00" height="30.00" fill="#66aa52"/>
<rect x="1014.00" y="648.00" width="2.00" height="30.00" fill="#66aa52"/>
<rect x="1127.70" y="648.00" width="2.00" height="30.00" fill="#66aa52"/>
<rect x="1172.00" y="648.00" width="2.00" height="30.00" fill="#66aa52"/>
<rect x="1239.70" y="648.00" width="2.00" height="30.00" fill="#66aa52"/>
<rect x="1294.00" y="648.00" width="2.00" height="30.00" fill="#66aa52"/>
<path d="M12 613 L25.7 620.2 L12 627.5 Z" fill="#6e6e6e"/>
<path d="M12 655 L25.7 662.2 L12 669.5 Z" fill="#6e6e6e"/>
<text x="32.88" y="627.40" font-family="'DejaVu Sans', sans-serif" font-size="22" font-weight="400" letter-spacing="-0.690" fill="#222" stroke="#222" stroke-width="0.4">Raster</text>
<text x="33.75" y="669.40" font-family="'DejaVu Sans', sans-serif" font-size="22" font-weight="400" letter-spacing="-1.388" fill="#222" stroke="#222" stroke-width="0.4">GPU</text>
<rect x="290.00" y="289.00" width="2.00" height="103.00" fill="#000" fill-opacity="0.10"/>
<rect x="290.00" y="426.00" width="2.00" height="255.00" fill="#000" fill-opacity="0.10"/>
<rect x="584.00" y="289.00" width="2.00" height="103.00" fill="#000" fill-opacity="0.10"/>
<rect x="584.00" y="426.00" width="2.00" height="255.00" fill="#000" fill-opacity="0.10"/>
<rect x="876.00" y="289.00" width="2.00" height="103.00" fill="#000" fill-opacity="0.10"/>
<rect x="876.00" y="426.00" width="2.00" height="255.00" fill="#000" fill-opacity="0.10"/>
<rect x="1170.00" y="289.00" width="2.00" height="103.00" fill="#000" fill-opacity="0.10"/>
<rect x="1170.00" y="426.00" width="2.00" height="255.00" fill="#000" fill-opacity="0.10"/>
<rect x="0.00" y="598.00" width="1322.00" height="2.00" fill="#b4b4b4"/>
<rect x="0.00" y="640.00" width="1322.00" height="2.00" fill="#b4b4b4"/>
<rect x="0.00" y="680.00" width="1322.00" height="2.00" fill="#b4b4b4"/>
</svg>
<div id="filler" class="abs"></div>
<div id="dtabs" class="abs"></div>
<div id="sumtab" class="abs"></div>
<span style="position:absolute;left:16.88px;top:753.88px;line-height:0;white-space:nowrap;font-family:'Liberation Sans', sans-serif;font-size:24px;font-weight:400;letter-spacing:-0.483px;word-spacing:0.00px;-webkit-text-stroke:0.35px #333;color:#333">Summary</span>
<span style="position:absolute;left:136.50px;top:753.88px;line-height:0;white-space:nowrap;font-family:'Liberation Sans', sans-serif;font-size:24px;font-weight:400;letter-spacing:0.394px;word-spacing:0.00px;-webkit-text-stroke:0.35px #5a5a5a;color:#5a5a5a">Bottom-Up</span>
<span style="position:absolute;left:275.05px;top:753.88px;line-height:0;white-space:nowrap;font-family:'Liberation Sans', sans-serif;font-size:24px;font-weight:400;letter-spacing:-0.631px;word-spacing:0.00px;-webkit-text-stroke:0.35px #5a5a5a;color:#5a5a5a">Call Tree</span>
<span style="position:absolute;left:384.00px;top:753.88px;line-height:0;white-space:nowrap;font-family:'Liberation Sans', sans-serif;font-size:24px;font-weight:400;letter-spacing:-0.312px;word-spacing:0.00px;-webkit-text-stroke:0.35px #5a5a5a;color:#5a5a5a">Event Log</span>
<div id="card" class="abs"></div>
<span style="position:absolute;left:20.88px;top:816.99px;line-height:0;white-space:nowrap;font-family:'Liberation Sans', sans-serif;font-size:26px;font-weight:400;letter-spacing:-0.534px;word-spacing:0.00px;-webkit-text-stroke:0.35px #333;color:#333">Range: 0 – 2.26 s</span>
<svg class="abs" style="left:40px;top:860px" width="212" height="212" viewBox="40 860 212 212">
<circle cx="146" cy="966" r="99.4" fill="#fff" stroke="#e4e4e4" stroke-width="1"/>
<path d="M146 966 L146.00 867.00 A99 99 0 0 1 241.81 990.93 Z" fill="#f4d276"/>
<path d="M146 966 L241.81 990.93 A99 99 0 1 1 71.29 901.04 Z" fill="#ae99eb"/>
<path d="M146 966 L71.29 901.04 A99 99 0 0 1 94.19 881.64 Z" fill="#8fc583"/>
<path d="M146 966 L94.19 881.64 A99 99 0 0 1 97.61 879.63 Z" fill="#dedede"/>
<path d="M146 966 L97.61 879.63 A99 99 0 0 1 146.00 867.00 Z" fill="#ffffff"/>
</svg>
<span style="position:absolute;left:285.75px;top:876.38px;line-height:0;white-space:nowrap;font-family:'Liberation Sans', sans-serif;font-size:24px;font-weight:400;letter-spacing:0.574px;word-spacing:-2.64px;-webkit-text-stroke:0.35px #333;color:#333">656.9 ms</span>
<div class="sw" style="left:398px;top:864px;background:#f4d276;border-color:#dcbc5f"></div>
<span style="position:absolute;left:431.88px;top:876.38px;line-height:0;white-space:nowrap;font-family:'Liberation Sans', sans-serif;font-size:24px;font-weight:400;letter-spacing:0.009px;word-spacing:0.00px;-webkit-text-stroke:0.35px #333;color:#333">Scripting</span>
<span style="position:absolute;left:275.12px;top:916.38px;line-height:0;white-space:nowrap;font-family:'Liberation Sans', sans-serif;font-size:24px;font-weight:400;letter-spacing:0.158px;word-spacing:-2.64px;-webkit-text-stroke:0.35px #333;color:#333">1296.5 ms</span>
<div class="sw" style="left:398px;top:904px;background:#ae99eb;border-color:#9783d3"></div>
<span style="position:absolute;left:431.00px;top:916.38px;line-height:0;white-space:nowrap;font-family:'Liberation Sans', sans-serif;font-size:24px;font-weight:400;letter-spacing:-0.266px;word-spacing:0.00px;-webkit-text-stroke:0.35px #333;color:#333">Rendering</span>
<span style="position:absolute;left:288.12px;top:956.38px;line-height:0;white-space:nowrap;font-family:'Liberation Sans', sans-serif;font-size:24px;font-weight:400;letter-spacing:0.234px;word-spacing:-2.64px;-webkit-text-stroke:0.35px #333;color:#333">109.5 ms</span>
<div class="sw" style="left:398px;top:944px;background:#8fc583;border-color:#76ab6b"></div>
<span style="position:absolute;left:431.00px;top:956.38px;line-height:0;white-space:nowrap;font-family:'Liberation Sans', sans-serif;font-size:24px;font-weight:400;letter-spacing:-0.161px;word-spacing:0.00px;-webkit-text-stroke:0.35px #333;color:#333">Painting</span>
<span style="position:absolute;left:302.12px;top:996.38px;line-height:0;white-space:nowrap;font-family:'Liberation Sans', sans-serif;font-size:24px;font-weight:400;letter-spacing:0.169px;word-spacing:-2.64px;-webkit-text-stroke:0.35px #333;color:#333">14.4 ms</span>
<div class="sw" style="left:398px;top:984px;background:#dedede;border-color:#bdbdbd"></div>
<span style="position:absolute;left:431.88px;top:996.38px;line-height:0;white-space:nowrap;font-family:'Liberation Sans', sans-serif;font-size:24px;font-weight:400;letter-spacing:-0.250px;word-spacing:0.00px;-webkit-text-stroke:0.35px #333;color:#333">Other</span>
<span style="position:absolute;left:288.12px;top:1036.38px;line-height:0;white-space:nowrap;font-family:'Liberation Sans', sans-serif;font-size:24px;font-weight:400;letter-spacing:0.234px;word-spacing:-2.64px;-webkit-text-stroke:0.35px #333;color:#333">183.8 ms</span>
<div class="sw" style="left:398px;top:1024px;background:#ffffff;border-color:#cfcfcf"></div>
<span style="position:absolute;left:430.75px;top:1036.38px;line-height:0;white-space:nowrap;font-family:'Liberation Sans', sans-serif;font-size:24px;font-weight:400;letter-spacing:0.208px;word-spacing:0.00px;-webkit-text-stroke:0.35px #333;color:#333">Idle</span>
<span style="position:absolute;left:83.50px;top:1105.98px;line-height:0;white-space:nowrap;font-family:'Liberation Sans', sans-serif;font-size:24px;font-weight:400;letter-spacing:-0.300px;word-spacing:0.00px;-webkit-text-stroke:0.35px #333;color:#333">Total: 2.26 s</span>
</div></body></html>
